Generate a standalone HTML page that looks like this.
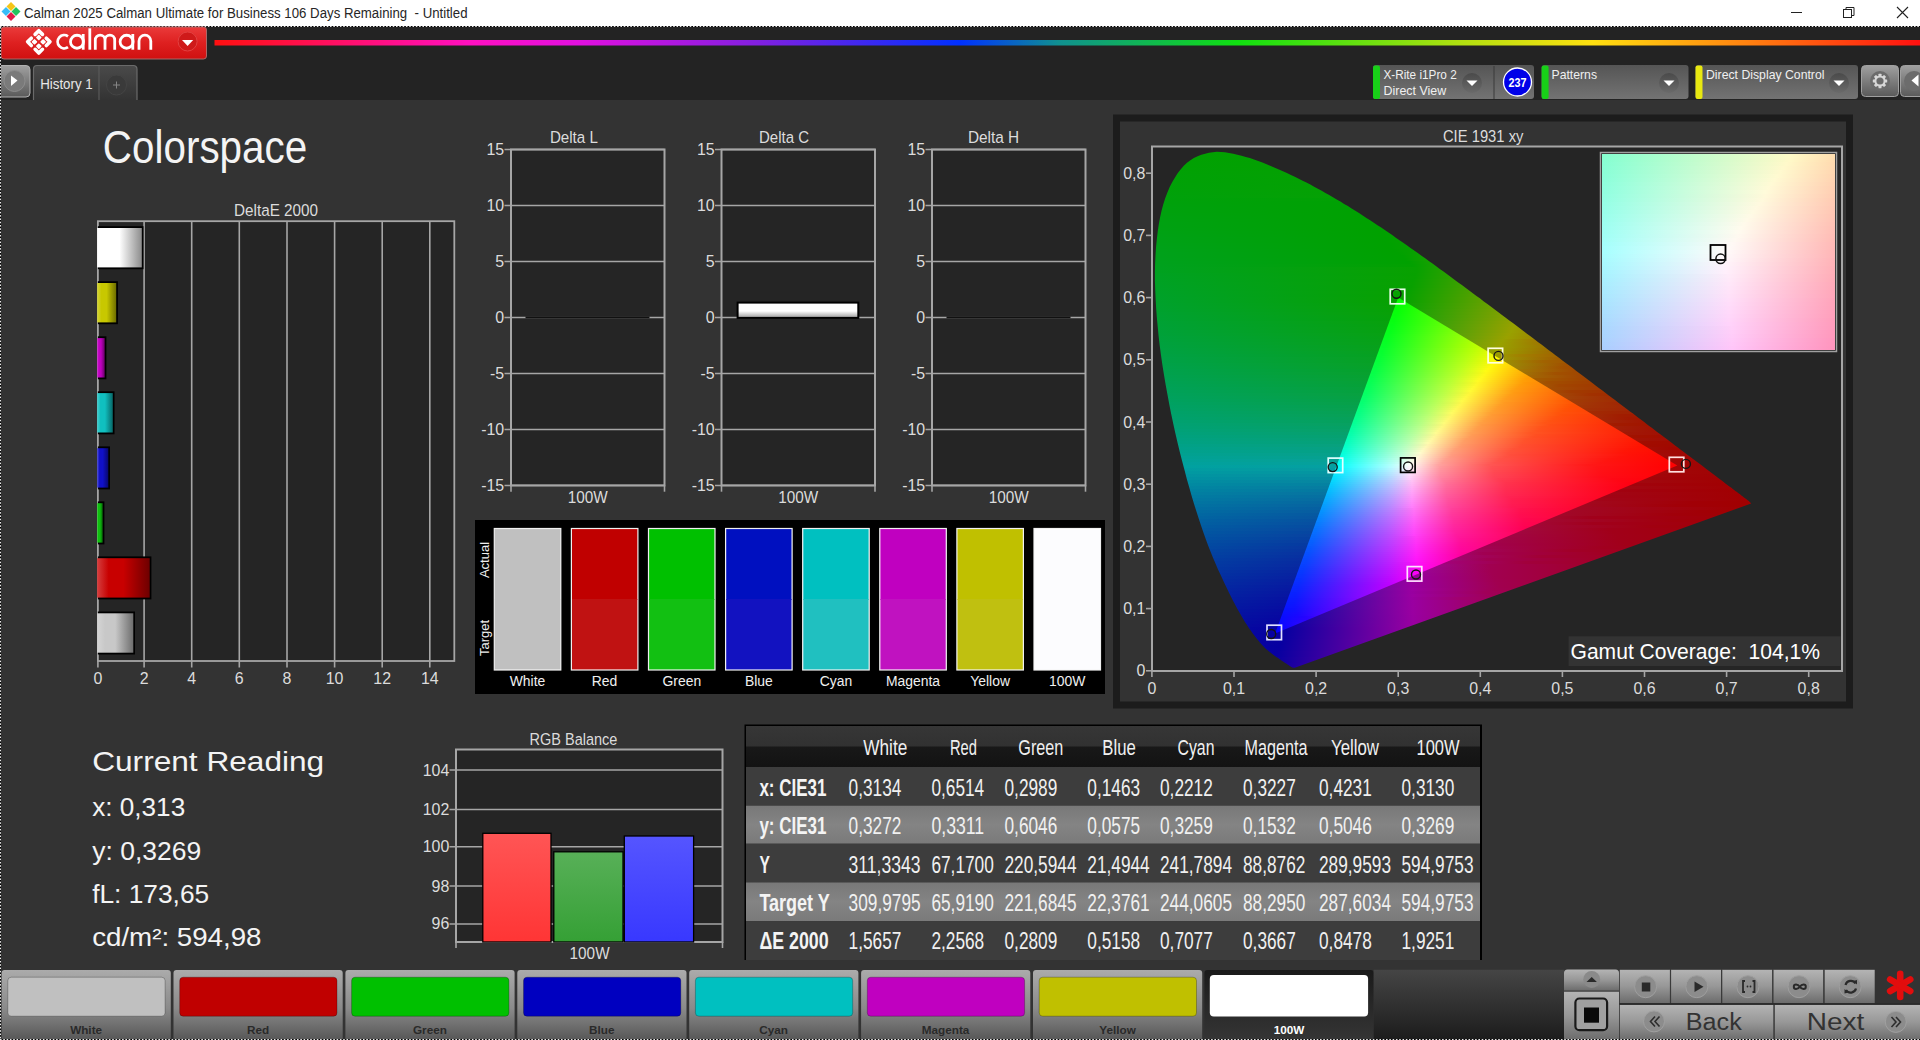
<!DOCTYPE html><html><head><meta charset="utf-8"><style>
html,body{margin:0;padding:0;background:#333;overflow:hidden}
svg{display:block;font-family:"Liberation Sans", sans-serif}
</style></head><body><svg width="1920" height="1040" viewBox="0 0 1920 1040"><defs><linearGradient id="redbtn" x1="0" y1="0" x2="0" y2="1"><stop offset="0" stop-color="#ea3a3a"/><stop offset="0.5" stop-color="#de2020"/><stop offset="1" stop-color="#d01010"/></linearGradient><linearGradient id="rainbow" x1="0" y1="0" x2="1" y2="0"><stop offset="0" stop-color="#ff1010"/><stop offset="0.149" stop-color="#ff10c0"/><stop offset="0.215" stop-color="#e010e0"/><stop offset="0.32" stop-color="#8020e0"/><stop offset="0.437" stop-color="#0030ff"/><stop offset="0.495" stop-color="#109090"/><stop offset="0.6" stop-color="#10e010"/><stop offset="0.73" stop-color="#b0e010"/><stop offset="0.808" stop-color="#ffe010"/><stop offset="0.9" stop-color="#ff8010"/><stop offset="1" stop-color="#ff1010"/></linearGradient><linearGradient id="gbtn" x1="0" y1="0" x2="0" y2="1"><stop offset="0" stop-color="#a0a0a0"/><stop offset="1" stop-color="#5a5a5a"/></linearGradient><linearGradient id="tab" x1="0" y1="0" x2="0" y2="1"><stop offset="0" stop-color="#4a4a4a"/><stop offset="1" stop-color="#333"/></linearGradient><linearGradient id="ctl" x1="0" y1="0" x2="0" y2="1"><stop offset="0" stop-color="#555"/><stop offset="1" stop-color="#737373"/></linearGradient><linearGradient id="dd" x1="0" y1="0" x2="0" y2="1"><stop offset="0" stop-color="#4a4a4a"/><stop offset="1" stop-color="#6a6a6a"/></linearGradient><linearGradient id="de0" x1="0" y1="0" x2="1" y2="0"><stop offset="0" stop-color="#ffffff"/><stop offset="0.22" stop-color="#ffffff"/><stop offset="0.5" stop-color="#ffffff"/><stop offset="1" stop-color="#8c8c8c"/></linearGradient><linearGradient id="de1" x1="0" y1="0" x2="1" y2="0"><stop offset="0" stop-color="#d5d53f"/><stop offset="0.22" stop-color="#c8c800"/><stop offset="0.5" stop-color="#c8c800"/><stop offset="1" stop-color="#6e6e00"/></linearGradient><linearGradient id="de2" x1="0" y1="0" x2="1" y2="0"><stop offset="0" stop-color="#cf3fcf"/><stop offset="0.22" stop-color="#c000c0"/><stop offset="0.5" stop-color="#c000c0"/><stop offset="1" stop-color="#690069"/></linearGradient><linearGradient id="de3" x1="0" y1="0" x2="1" y2="0"><stop offset="0" stop-color="#4bcfcf"/><stop offset="0.22" stop-color="#10c0c0"/><stop offset="0.5" stop-color="#10c0c0"/><stop offset="1" stop-color="#086969"/></linearGradient><linearGradient id="de4" x1="0" y1="0" x2="1" y2="0"><stop offset="0" stop-color="#4b4bd5"/><stop offset="0.22" stop-color="#1010c8"/><stop offset="0.5" stop-color="#1010c8"/><stop offset="1" stop-color="#08086e"/></linearGradient><linearGradient id="de5" x1="0" y1="0" x2="1" y2="0"><stop offset="0" stop-color="#4bcf4b"/><stop offset="0.22" stop-color="#10c010"/><stop offset="0.5" stop-color="#10c010"/><stop offset="1" stop-color="#086908"/></linearGradient><linearGradient id="de6" x1="0" y1="0" x2="1" y2="0"><stop offset="0" stop-color="#d53f3f"/><stop offset="0.22" stop-color="#c80000"/><stop offset="0.5" stop-color="#c80000"/><stop offset="1" stop-color="#6e0000"/></linearGradient><linearGradient id="de7" x1="0" y1="0" x2="1" y2="0"><stop offset="0" stop-color="#d5d5d5"/><stop offset="0.22" stop-color="#c8c8c8"/><stop offset="0.5" stop-color="#c8c8c8"/><stop offset="1" stop-color="#6e6e6e"/></linearGradient><linearGradient id="dcbar" x1="0" y1="0" x2="0" y2="1"><stop offset="0" stop-color="#fff"/><stop offset="0.55" stop-color="#fff"/><stop offset="1" stop-color="#999"/></linearGradient><linearGradient id="o0" gradientUnits="userSpaceOnUse" x1="1153" x2="1753" y1="0" y2="0"><stop offset="0.000" stop-color="#00a100"/><stop offset="0.520" stop-color="#08a100"/><stop offset="0.833" stop-color="#9aa100"/><stop offset="1.000" stop-color="#a16200"/></linearGradient><linearGradient id="o1" gradientUnits="userSpaceOnUse" x1="1153" x2="1753" y1="0" y2="0"><stop offset="0.000" stop-color="#00a101"/><stop offset="0.517" stop-color="#08a100"/><stop offset="0.830" stop-color="#9aa100"/><stop offset="1.000" stop-color="#a16000"/></linearGradient><linearGradient id="o2" gradientUnits="userSpaceOnUse" x1="1153" x2="1753" y1="0" y2="0"><stop offset="0.000" stop-color="#00a102"/><stop offset="0.513" stop-color="#07a100"/><stop offset="0.823" stop-color="#99a100"/><stop offset="1.000" stop-color="#a15f00"/></linearGradient><linearGradient id="o3" gradientUnits="userSpaceOnUse" x1="1153" x2="1753" y1="0" y2="0"><stop offset="0.000" stop-color="#00a102"/><stop offset="0.513" stop-color="#08a100"/><stop offset="0.820" stop-color="#99a100"/><stop offset="1.000" stop-color="#a15d00"/></linearGradient><linearGradient id="o4" gradientUnits="userSpaceOnUse" x1="1153" x2="1753" y1="0" y2="0"><stop offset="0.000" stop-color="#00a103"/><stop offset="0.510" stop-color="#07a100"/><stop offset="0.817" stop-color="#99a100"/><stop offset="1.000" stop-color="#a15c00"/></linearGradient><linearGradient id="o5" gradientUnits="userSpaceOnUse" x1="1153" x2="1753" y1="0" y2="0"><stop offset="0.000" stop-color="#00a103"/><stop offset="0.510" stop-color="#08a100"/><stop offset="0.813" stop-color="#9aa100"/><stop offset="1.000" stop-color="#a15b00"/></linearGradient><linearGradient id="o6" gradientUnits="userSpaceOnUse" x1="1153" x2="1753" y1="0" y2="0"><stop offset="0.000" stop-color="#00a104"/><stop offset="0.507" stop-color="#08a100"/><stop offset="0.810" stop-color="#9aa100"/><stop offset="1.000" stop-color="#a15900"/></linearGradient><linearGradient id="o7" gradientUnits="userSpaceOnUse" x1="1153" x2="1753" y1="0" y2="0"><stop offset="0.000" stop-color="#00a105"/><stop offset="0.507" stop-color="#08a100"/><stop offset="0.807" stop-color="#9aa100"/><stop offset="1.000" stop-color="#a15800"/></linearGradient><linearGradient id="o8" gradientUnits="userSpaceOnUse" x1="1153" x2="1753" y1="0" y2="0"><stop offset="0.000" stop-color="#00a106"/><stop offset="0.503" stop-color="#08a100"/><stop offset="0.800" stop-color="#99a100"/><stop offset="1.000" stop-color="#a15700"/></linearGradient><linearGradient id="o9" gradientUnits="userSpaceOnUse" x1="1153" x2="1753" y1="0" y2="0"><stop offset="0.000" stop-color="#00a106"/><stop offset="0.500" stop-color="#07a100"/><stop offset="0.797" stop-color="#99a100"/><stop offset="1.000" stop-color="#a15500"/></linearGradient><linearGradient id="o10" gradientUnits="userSpaceOnUse" x1="1153" x2="1753" y1="0" y2="0"><stop offset="0.000" stop-color="#00a107"/><stop offset="0.500" stop-color="#08a100"/><stop offset="0.793" stop-color="#99a100"/><stop offset="1.000" stop-color="#a15400"/></linearGradient><linearGradient id="o11" gradientUnits="userSpaceOnUse" x1="1153" x2="1753" y1="0" y2="0"><stop offset="0.000" stop-color="#00a108"/><stop offset="0.497" stop-color="#07a100"/><stop offset="0.790" stop-color="#9aa100"/><stop offset="1.000" stop-color="#a15300"/></linearGradient><linearGradient id="o12" gradientUnits="userSpaceOnUse" x1="1153" x2="1753" y1="0" y2="0"><stop offset="0.000" stop-color="#00a108"/><stop offset="0.497" stop-color="#08a100"/><stop offset="0.787" stop-color="#9aa100"/><stop offset="1.000" stop-color="#a15200"/></linearGradient><linearGradient id="o13" gradientUnits="userSpaceOnUse" x1="1153" x2="1753" y1="0" y2="0"><stop offset="0.000" stop-color="#00a109"/><stop offset="0.493" stop-color="#08a100"/><stop offset="0.780" stop-color="#98a100"/><stop offset="1.000" stop-color="#a15000"/></linearGradient><linearGradient id="o14" gradientUnits="userSpaceOnUse" x1="1153" x2="1753" y1="0" y2="0"><stop offset="0.000" stop-color="#00a10a"/><stop offset="0.490" stop-color="#07a100"/><stop offset="0.777" stop-color="#99a100"/><stop offset="1.000" stop-color="#a14f00"/></linearGradient><linearGradient id="o15" gradientUnits="userSpaceOnUse" x1="1153" x2="1753" y1="0" y2="0"><stop offset="0.000" stop-color="#00a10b"/><stop offset="0.490" stop-color="#08a100"/><stop offset="0.773" stop-color="#99a100"/><stop offset="0.993" stop-color="#a14f00"/><stop offset="1.000" stop-color="#a14e00"/></linearGradient><linearGradient id="o16" gradientUnits="userSpaceOnUse" x1="1153" x2="1753" y1="0" y2="0"><stop offset="0.000" stop-color="#00a10b"/><stop offset="0.473" stop-color="#02a100"/><stop offset="0.760" stop-color="#93a100"/><stop offset="0.813" stop-color="#a18d00"/><stop offset="1.000" stop-color="#a14d00"/></linearGradient><linearGradient id="o17" gradientUnits="userSpaceOnUse" x1="1153" x2="1753" y1="0" y2="0"><stop offset="0.000" stop-color="#00a10c"/><stop offset="0.437" stop-color="#00a100"/><stop offset="0.517" stop-color="#15a100"/><stop offset="0.790" stop-color="#a19800"/><stop offset="0.973" stop-color="#a15200"/><stop offset="1.000" stop-color="#a14b00"/></linearGradient><linearGradient id="o18" gradientUnits="userSpaceOnUse" x1="1153" x2="1753" y1="0" y2="0"><stop offset="0.000" stop-color="#00a10d"/><stop offset="0.410" stop-color="#00a100"/><stop offset="0.493" stop-color="#0ca100"/><stop offset="0.770" stop-color="#9fa100"/><stop offset="0.953" stop-color="#a15500"/><stop offset="1.000" stop-color="#a14a00"/></linearGradient><linearGradient id="o19" gradientUnits="userSpaceOnUse" x1="1153" x2="1753" y1="0" y2="0"><stop offset="0.000" stop-color="#00a10e"/><stop offset="0.397" stop-color="#00a100"/><stop offset="0.487" stop-color="#0aa100"/><stop offset="0.763" stop-color="#9da100"/><stop offset="0.953" stop-color="#a15400"/><stop offset="1.000" stop-color="#a14900"/></linearGradient><linearGradient id="o20" gradientUnits="userSpaceOnUse" x1="1153" x2="1753" y1="0" y2="0"><stop offset="0.000" stop-color="#00a10e"/><stop offset="0.383" stop-color="#00a100"/><stop offset="0.487" stop-color="#0ba100"/><stop offset="0.760" stop-color="#9da100"/><stop offset="0.947" stop-color="#a15400"/><stop offset="1.000" stop-color="#a14800"/></linearGradient><linearGradient id="o21" gradientUnits="userSpaceOnUse" x1="1153" x2="1753" y1="0" y2="0"><stop offset="0.000" stop-color="#00a10f"/><stop offset="0.380" stop-color="#00a100"/><stop offset="0.483" stop-color="#0aa100"/><stop offset="0.753" stop-color="#9ca100"/><stop offset="0.950" stop-color="#a15200"/><stop offset="1.000" stop-color="#a14600"/></linearGradient><linearGradient id="o22" gradientUnits="userSpaceOnUse" x1="1153" x2="1753" y1="0" y2="0"><stop offset="0.000" stop-color="#00a110"/><stop offset="0.373" stop-color="#00a100"/><stop offset="0.480" stop-color="#0aa100"/><stop offset="0.750" stop-color="#9ca100"/><stop offset="0.943" stop-color="#a15200"/><stop offset="1.000" stop-color="#a14500"/></linearGradient><linearGradient id="o23" gradientUnits="userSpaceOnUse" x1="1153" x2="1753" y1="0" y2="0"><stop offset="0.000" stop-color="#00a111"/><stop offset="0.373" stop-color="#00a100"/><stop offset="0.480" stop-color="#0aa100"/><stop offset="0.747" stop-color="#9ca100"/><stop offset="0.937" stop-color="#a15300"/><stop offset="1.000" stop-color="#a14400"/></linearGradient><linearGradient id="o24" gradientUnits="userSpaceOnUse" x1="1153" x2="1753" y1="0" y2="0"><stop offset="0.000" stop-color="#00a112"/><stop offset="0.370" stop-color="#00a100"/><stop offset="0.477" stop-color="#0aa100"/><stop offset="0.743" stop-color="#9da100"/><stop offset="0.930" stop-color="#a15300"/><stop offset="1.000" stop-color="#a14300"/></linearGradient><linearGradient id="o25" gradientUnits="userSpaceOnUse" x1="1153" x2="1753" y1="0" y2="0"><stop offset="0.000" stop-color="#00a112"/><stop offset="0.377" stop-color="#00a100"/><stop offset="0.477" stop-color="#0ba100"/><stop offset="0.740" stop-color="#9da100"/><stop offset="0.923" stop-color="#a15300"/><stop offset="1.000" stop-color="#a14200"/></linearGradient><linearGradient id="o26" gradientUnits="userSpaceOnUse" x1="1153" x2="1753" y1="0" y2="0"><stop offset="0.000" stop-color="#00a113"/><stop offset="0.373" stop-color="#00a100"/><stop offset="0.473" stop-color="#0aa100"/><stop offset="0.733" stop-color="#9ba100"/><stop offset="0.923" stop-color="#a15200"/><stop offset="1.000" stop-color="#a14100"/></linearGradient><linearGradient id="o27" gradientUnits="userSpaceOnUse" x1="1153" x2="1753" y1="0" y2="0"><stop offset="0.000" stop-color="#00a114"/><stop offset="0.380" stop-color="#00a100"/><stop offset="0.473" stop-color="#0ba100"/><stop offset="0.733" stop-color="#9ea100"/><stop offset="0.907" stop-color="#a15500"/><stop offset="1.000" stop-color="#a13f00"/></linearGradient><linearGradient id="o28" gradientUnits="userSpaceOnUse" x1="1153" x2="1753" y1="0" y2="0"><stop offset="0.000" stop-color="#00a115"/><stop offset="0.380" stop-color="#00a100"/><stop offset="0.470" stop-color="#0ba100"/><stop offset="0.727" stop-color="#9ca100"/><stop offset="0.910" stop-color="#a15300"/><stop offset="1.000" stop-color="#a13e00"/></linearGradient><linearGradient id="o29" gradientUnits="userSpaceOnUse" x1="1153" x2="1753" y1="0" y2="0"><stop offset="0.000" stop-color="#00a116"/><stop offset="0.387" stop-color="#00a100"/><stop offset="0.470" stop-color="#0ba100"/><stop offset="0.723" stop-color="#9da100"/><stop offset="0.903" stop-color="#a15300"/><stop offset="1.000" stop-color="#a13d00"/></linearGradient><linearGradient id="o30" gradientUnits="userSpaceOnUse" x1="1153" x2="1753" y1="0" y2="0"><stop offset="0.000" stop-color="#00a117"/><stop offset="0.390" stop-color="#00a100"/><stop offset="0.467" stop-color="#0ba100"/><stop offset="0.720" stop-color="#9da100"/><stop offset="0.897" stop-color="#a15300"/><stop offset="1.000" stop-color="#a13c00"/></linearGradient><linearGradient id="o31" gradientUnits="userSpaceOnUse" x1="1153" x2="1753" y1="0" y2="0"><stop offset="0.000" stop-color="#00a118"/><stop offset="0.397" stop-color="#00a100"/><stop offset="0.470" stop-color="#0da100"/><stop offset="0.730" stop-color="#a19a00"/><stop offset="0.893" stop-color="#a15300"/><stop offset="1.000" stop-color="#a13b00"/></linearGradient><linearGradient id="o32" gradientUnits="userSpaceOnUse" x1="1153" x2="1753" y1="0" y2="0"><stop offset="0.000" stop-color="#00a119"/><stop offset="0.397" stop-color="#00a100"/><stop offset="0.467" stop-color="#0da100"/><stop offset="0.713" stop-color="#9ea100"/><stop offset="0.880" stop-color="#a15500"/><stop offset="1.000" stop-color="#a13a00"/></linearGradient><linearGradient id="o33" gradientUnits="userSpaceOnUse" x1="1153" x2="1753" y1="0" y2="0"><stop offset="0.000" stop-color="#00a11a"/><stop offset="0.403" stop-color="#00a100"/><stop offset="0.470" stop-color="#0fa100"/><stop offset="0.723" stop-color="#a19900"/><stop offset="0.883" stop-color="#a15300"/><stop offset="1.000" stop-color="#a13900"/></linearGradient><linearGradient id="o34" gradientUnits="userSpaceOnUse" x1="1153" x2="1753" y1="0" y2="0"><stop offset="0.000" stop-color="#00a11b"/><stop offset="0.410" stop-color="#00a100"/><stop offset="0.483" stop-color="#17a100"/><stop offset="0.720" stop-color="#a19900"/><stop offset="0.880" stop-color="#a15200"/><stop offset="1.000" stop-color="#a13700"/></linearGradient><linearGradient id="o35" gradientUnits="userSpaceOnUse" x1="1153" x2="1753" y1="0" y2="0"><stop offset="0.000" stop-color="#00a11b"/><stop offset="0.417" stop-color="#00a100"/><stop offset="0.573" stop-color="#49a100"/><stop offset="0.717" stop-color="#a19800"/><stop offset="0.877" stop-color="#a15200"/><stop offset="1.000" stop-color="#a13600"/></linearGradient><linearGradient id="o36" gradientUnits="userSpaceOnUse" x1="1153" x2="1753" y1="0" y2="0"><stop offset="0.000" stop-color="#00a11c"/><stop offset="0.420" stop-color="#00a100"/><stop offset="0.623" stop-color="#6aa100"/><stop offset="0.713" stop-color="#a19800"/><stop offset="0.873" stop-color="#a15100"/><stop offset="1.000" stop-color="#a13500"/></linearGradient><linearGradient id="o37" gradientUnits="userSpaceOnUse" x1="1153" x2="1753" y1="0" y2="0"><stop offset="0.000" stop-color="#00a11d"/><stop offset="0.427" stop-color="#00a100"/><stop offset="0.663" stop-color="#88a100"/><stop offset="0.710" stop-color="#a19700"/><stop offset="0.870" stop-color="#a15000"/><stop offset="1.000" stop-color="#a13400"/></linearGradient><linearGradient id="o38" gradientUnits="userSpaceOnUse" x1="1153" x2="1753" y1="0" y2="0"><stop offset="0.000" stop-color="#00a11e"/><stop offset="0.433" stop-color="#02a100"/><stop offset="0.677" stop-color="#94a100"/><stop offset="0.723" stop-color="#a18c00"/><stop offset="0.897" stop-color="#a14800"/><stop offset="1.000" stop-color="#a13300"/></linearGradient><linearGradient id="o39" gradientUnits="userSpaceOnUse" x1="1153" x2="1753" y1="0" y2="0"><stop offset="0.000" stop-color="#00a11f"/><stop offset="0.440" stop-color="#07a100"/><stop offset="0.677" stop-color="#97a100"/><stop offset="0.757" stop-color="#a17700"/><stop offset="0.970" stop-color="#a13700"/><stop offset="1.000" stop-color="#a13200"/></linearGradient><linearGradient id="o40" gradientUnits="userSpaceOnUse" x1="1153" x2="1753" y1="0" y2="0"><stop offset="0.000" stop-color="#00a120"/><stop offset="0.440" stop-color="#08a100"/><stop offset="0.677" stop-color="#9aa100"/><stop offset="0.853" stop-color="#a15100"/><stop offset="1.000" stop-color="#a13100"/></linearGradient><linearGradient id="o41" gradientUnits="userSpaceOnUse" x1="1153" x2="1753" y1="0" y2="0"><stop offset="0.000" stop-color="#00a122"/><stop offset="0.437" stop-color="#07a100"/><stop offset="0.670" stop-color="#98a100"/><stop offset="0.840" stop-color="#a15300"/><stop offset="1.000" stop-color="#a13000"/></linearGradient><linearGradient id="o42" gradientUnits="userSpaceOnUse" x1="1153" x2="1753" y1="0" y2="0"><stop offset="0.000" stop-color="#00a123"/><stop offset="0.437" stop-color="#08a100"/><stop offset="0.667" stop-color="#98a100"/><stop offset="0.847" stop-color="#a14f00"/><stop offset="1.000" stop-color="#a12f00"/></linearGradient><linearGradient id="o43" gradientUnits="userSpaceOnUse" x1="1153" x2="1753" y1="0" y2="0"><stop offset="0.000" stop-color="#00a124"/><stop offset="0.433" stop-color="#07a100"/><stop offset="0.663" stop-color="#99a100"/><stop offset="0.840" stop-color="#a15000"/><stop offset="1.000" stop-color="#a12e00"/></linearGradient><linearGradient id="o44" gradientUnits="userSpaceOnUse" x1="1153" x2="1753" y1="0" y2="0"><stop offset="0.000" stop-color="#00a125"/><stop offset="0.433" stop-color="#08a100"/><stop offset="0.660" stop-color="#99a100"/><stop offset="0.833" stop-color="#a15000"/><stop offset="1.000" stop-color="#a12d00"/></linearGradient><linearGradient id="o45" gradientUnits="userSpaceOnUse" x1="1153" x2="1753" y1="0" y2="0"><stop offset="0.000" stop-color="#00a126"/><stop offset="0.430" stop-color="#07a100"/><stop offset="0.657" stop-color="#9aa100"/><stop offset="0.827" stop-color="#a15000"/><stop offset="1.000" stop-color="#a12c00"/></linearGradient><linearGradient id="o46" gradientUnits="userSpaceOnUse" x1="1153" x2="1753" y1="0" y2="0"><stop offset="0.000" stop-color="#00a127"/><stop offset="0.427" stop-color="#07a100"/><stop offset="0.650" stop-color="#98a100"/><stop offset="0.760" stop-color="#a16600"/><stop offset="1.000" stop-color="#a12b00"/></linearGradient><linearGradient id="o47" gradientUnits="userSpaceOnUse" x1="1153" x2="1753" y1="0" y2="0"><stop offset="0.000" stop-color="#00a128"/><stop offset="0.427" stop-color="#08a100"/><stop offset="0.647" stop-color="#98a100"/><stop offset="0.823" stop-color="#a14e00"/><stop offset="1.000" stop-color="#a12a00"/></linearGradient><linearGradient id="o48" gradientUnits="userSpaceOnUse" x1="1153" x2="1753" y1="0" y2="0"><stop offset="0.000" stop-color="#00a129"/><stop offset="0.423" stop-color="#07a100"/><stop offset="0.643" stop-color="#98a100"/><stop offset="0.817" stop-color="#a14f00"/><stop offset="1.000" stop-color="#a12900"/></linearGradient><linearGradient id="o49" gradientUnits="userSpaceOnUse" x1="1153" x2="1753" y1="0" y2="0"><stop offset="0.000" stop-color="#00a12a"/><stop offset="0.423" stop-color="#08a100"/><stop offset="0.640" stop-color="#99a100"/><stop offset="0.807" stop-color="#a15000"/><stop offset="1.000" stop-color="#a12800"/></linearGradient><linearGradient id="o50" gradientUnits="userSpaceOnUse" x1="1153" x2="1753" y1="0" y2="0"><stop offset="0.000" stop-color="#00a12c"/><stop offset="0.420" stop-color="#07a100"/><stop offset="0.637" stop-color="#99a100"/><stop offset="0.800" stop-color="#a15000"/><stop offset="1.000" stop-color="#a12700"/></linearGradient><linearGradient id="o51" gradientUnits="userSpaceOnUse" x1="1153" x2="1753" y1="0" y2="0"><stop offset="0.000" stop-color="#00a12d"/><stop offset="0.417" stop-color="#07a102"/><stop offset="0.630" stop-color="#97a100"/><stop offset="0.713" stop-color="#a17100"/><stop offset="0.920" stop-color="#a13200"/><stop offset="1.000" stop-color="#a12600"/></linearGradient><linearGradient id="o52" gradientUnits="userSpaceOnUse" x1="1153" x2="1753" y1="0" y2="0"><stop offset="0.000" stop-color="#00a12e"/><stop offset="0.417" stop-color="#08a103"/><stop offset="0.630" stop-color="#9aa100"/><stop offset="0.787" stop-color="#a15100"/><stop offset="1.000" stop-color="#a12500"/></linearGradient><linearGradient id="o53" gradientUnits="userSpaceOnUse" x1="1153" x2="1753" y1="0" y2="0"><stop offset="0.000" stop-color="#00a12f"/><stop offset="0.413" stop-color="#07a105"/><stop offset="0.623" stop-color="#98a100"/><stop offset="0.773" stop-color="#a15400"/><stop offset="1.000" stop-color="#a12400"/></linearGradient><linearGradient id="o54" gradientUnits="userSpaceOnUse" x1="1153" x2="1753" y1="0" y2="0"><stop offset="0.000" stop-color="#00a131"/><stop offset="0.413" stop-color="#08a106"/><stop offset="0.620" stop-color="#99a100"/><stop offset="0.783" stop-color="#a14f00"/><stop offset="1.000" stop-color="#a12300"/></linearGradient><linearGradient id="o55" gradientUnits="userSpaceOnUse" x1="1153" x2="1753" y1="0" y2="0"><stop offset="0.000" stop-color="#00a132"/><stop offset="0.410" stop-color="#07a108"/><stop offset="0.617" stop-color="#99a100"/><stop offset="0.777" stop-color="#a14f00"/><stop offset="1.000" stop-color="#a12200"/></linearGradient><linearGradient id="o56" gradientUnits="userSpaceOnUse" x1="1153" x2="1753" y1="0" y2="0"><stop offset="0.000" stop-color="#00a133"/><stop offset="0.407" stop-color="#06a109"/><stop offset="0.610" stop-color="#97a100"/><stop offset="0.673" stop-color="#a17a00"/><stop offset="0.850" stop-color="#a13a00"/><stop offset="1.000" stop-color="#a12100"/></linearGradient><linearGradient id="o57" gradientUnits="userSpaceOnUse" x1="1153" x2="1753" y1="0" y2="0"><stop offset="0.000" stop-color="#00a135"/><stop offset="0.407" stop-color="#08a10b"/><stop offset="0.610" stop-color="#9aa100"/><stop offset="0.760" stop-color="#a15100"/><stop offset="1.000" stop-color="#a12000"/></linearGradient><linearGradient id="o58" gradientUnits="userSpaceOnUse" x1="1153" x2="1753" y1="0" y2="0"><stop offset="0.000" stop-color="#00a136"/><stop offset="0.403" stop-color="#07a10d"/><stop offset="0.603" stop-color="#98a100"/><stop offset="0.690" stop-color="#a16c00"/><stop offset="0.893" stop-color="#a12f00"/><stop offset="1.000" stop-color="#a11f00"/></linearGradient><linearGradient id="o59" gradientUnits="userSpaceOnUse" x1="1153" x2="1753" y1="0" y2="0"><stop offset="0.000" stop-color="#00a137"/><stop offset="0.403" stop-color="#08a10e"/><stop offset="0.600" stop-color="#98a100"/><stop offset="0.757" stop-color="#a14f00"/><stop offset="1.000" stop-color="#a11e00"/></linearGradient><linearGradient id="o60" gradientUnits="userSpaceOnUse" x1="1153" x2="1753" y1="0" y2="0"><stop offset="0.000" stop-color="#00a139"/><stop offset="0.400" stop-color="#07a110"/><stop offset="0.597" stop-color="#99a100"/><stop offset="0.750" stop-color="#a14f00"/><stop offset="1.000" stop-color="#a11d00"/></linearGradient><linearGradient id="o61" gradientUnits="userSpaceOnUse" x1="1153" x2="1753" y1="0" y2="0"><stop offset="0.000" stop-color="#00a13a"/><stop offset="0.400" stop-color="#08a112"/><stop offset="0.593" stop-color="#99a100"/><stop offset="0.743" stop-color="#a14f00"/><stop offset="1.000" stop-color="#a11c00"/></linearGradient><linearGradient id="o62" gradientUnits="userSpaceOnUse" x1="1153" x2="1753" y1="0" y2="0"><stop offset="0.000" stop-color="#00a13c"/><stop offset="0.397" stop-color="#07a114"/><stop offset="0.590" stop-color="#9aa100"/><stop offset="0.737" stop-color="#a15000"/><stop offset="1.000" stop-color="#a11b00"/></linearGradient><linearGradient id="o63" gradientUnits="userSpaceOnUse" x1="1153" x2="1753" y1="0" y2="0"><stop offset="0.000" stop-color="#00a13d"/><stop offset="0.393" stop-color="#07a116"/><stop offset="0.583" stop-color="#97a100"/><stop offset="0.643" stop-color="#a17900"/><stop offset="0.810" stop-color="#a13900"/><stop offset="1.000" stop-color="#a11a00"/></linearGradient><linearGradient id="o64" gradientUnits="userSpaceOnUse" x1="1153" x2="1753" y1="0" y2="0"><stop offset="0.000" stop-color="#00a13f"/><stop offset="0.393" stop-color="#08a117"/><stop offset="0.580" stop-color="#98a100"/><stop offset="0.670" stop-color="#a16800"/><stop offset="0.870" stop-color="#a12c00"/><stop offset="1.000" stop-color="#a11900"/></linearGradient><linearGradient id="o65" gradientUnits="userSpaceOnUse" x1="1153" x2="1753" y1="0" y2="0"><stop offset="0.000" stop-color="#00a140"/><stop offset="0.390" stop-color="#07a11a"/><stop offset="0.577" stop-color="#98a100"/><stop offset="0.723" stop-color="#a14f00"/><stop offset="1.000" stop-color="#a11800"/></linearGradient><linearGradient id="o66" gradientUnits="userSpaceOnUse" x1="1153" x2="1753" y1="0" y2="0"><stop offset="0.000" stop-color="#00a142"/><stop offset="0.390" stop-color="#08a11b"/><stop offset="0.573" stop-color="#99a100"/><stop offset="0.717" stop-color="#a14f00"/><stop offset="0.987" stop-color="#a11900"/><stop offset="1.000" stop-color="#a11800"/></linearGradient><linearGradient id="o67" gradientUnits="userSpaceOnUse" x1="1153" x2="1753" y1="0" y2="0"><stop offset="0.000" stop-color="#00a143"/><stop offset="0.387" stop-color="#07a11e"/><stop offset="0.570" stop-color="#99a100"/><stop offset="0.710" stop-color="#a15000"/><stop offset="0.977" stop-color="#a11900"/><stop offset="1.000" stop-color="#a11700"/></linearGradient><linearGradient id="o68" gradientUnits="userSpaceOnUse" x1="1153" x2="1753" y1="0" y2="0"><stop offset="0.000" stop-color="#00a145"/><stop offset="0.383" stop-color="#06a120"/><stop offset="0.563" stop-color="#97a101"/><stop offset="0.610" stop-color="#a18100"/><stop offset="0.757" stop-color="#a13f00"/><stop offset="1.000" stop-color="#a11600"/></linearGradient><linearGradient id="o69" gradientUnits="userSpaceOnUse" x1="1153" x2="1753" y1="0" y2="0"><stop offset="0.000" stop-color="#00a147"/><stop offset="0.383" stop-color="#08a122"/><stop offset="0.563" stop-color="#9ba103"/><stop offset="0.697" stop-color="#a15100"/><stop offset="0.953" stop-color="#a11a00"/><stop offset="1.000" stop-color="#a11500"/></linearGradient><linearGradient id="o70" gradientUnits="userSpaceOnUse" x1="1153" x2="1753" y1="0" y2="0"><stop offset="0.000" stop-color="#00a148"/><stop offset="0.380" stop-color="#07a124"/><stop offset="0.557" stop-color="#98a106"/><stop offset="0.650" stop-color="#a16300"/><stop offset="0.850" stop-color="#a12800"/><stop offset="1.000" stop-color="#a11400"/></linearGradient><linearGradient id="o71" gradientUnits="userSpaceOnUse" x1="1153" x2="1753" y1="0" y2="0"><stop offset="0.000" stop-color="#00a14a"/><stop offset="0.380" stop-color="#08a126"/><stop offset="0.553" stop-color="#98a109"/><stop offset="0.690" stop-color="#a14f00"/><stop offset="0.947" stop-color="#a11900"/><stop offset="1.000" stop-color="#a11300"/></linearGradient><linearGradient id="o72" gradientUnits="userSpaceOnUse" x1="1153" x2="1753" y1="0" y2="0"><stop offset="0.000" stop-color="#00a14c"/><stop offset="0.377" stop-color="#07a128"/><stop offset="0.550" stop-color="#99a10c"/><stop offset="0.683" stop-color="#a15000"/><stop offset="0.937" stop-color="#a11900"/><stop offset="1.000" stop-color="#a11200"/></linearGradient><linearGradient id="o73" gradientUnits="userSpaceOnUse" x1="1153" x2="1753" y1="0" y2="0"><stop offset="0.000" stop-color="#00a14e"/><stop offset="0.373" stop-color="#06a12b"/><stop offset="0.543" stop-color="#96a10f"/><stop offset="0.583" stop-color="#a18505"/><stop offset="0.717" stop-color="#a14200"/><stop offset="1.000" stop-color="#a11100"/></linearGradient><linearGradient id="o74" gradientUnits="userSpaceOnUse" x1="1153" x2="1753" y1="0" y2="0"><stop offset="0.000" stop-color="#00a14f"/><stop offset="0.373" stop-color="#08a12d"/><stop offset="0.543" stop-color="#9aa111"/><stop offset="0.670" stop-color="#a15100"/><stop offset="0.913" stop-color="#a11a00"/><stop offset="1.000" stop-color="#a11000"/></linearGradient><linearGradient id="o75" gradientUnits="userSpaceOnUse" x1="1153" x2="1753" y1="0" y2="0"><stop offset="0.000" stop-color="#00a151"/><stop offset="0.370" stop-color="#07a130"/><stop offset="0.537" stop-color="#97a115"/><stop offset="0.600" stop-color="#a17205"/><stop offset="0.757" stop-color="#a13400"/><stop offset="1.000" stop-color="#a11000"/></linearGradient><linearGradient id="o76" gradientUnits="userSpaceOnUse" x1="1153" x2="1753" y1="0" y2="0"><stop offset="0.000" stop-color="#00a153"/><stop offset="0.370" stop-color="#08a132"/><stop offset="0.533" stop-color="#98a118"/><stop offset="0.633" stop-color="#a15c00"/><stop offset="0.837" stop-color="#a12300"/><stop offset="1.000" stop-color="#a10f00"/></linearGradient><linearGradient id="o77" gradientUnits="userSpaceOnUse" x1="1153" x2="1753" y1="0" y2="0"><stop offset="0.000" stop-color="#00a155"/><stop offset="0.367" stop-color="#07a135"/><stop offset="0.530" stop-color="#98a11b"/><stop offset="0.657" stop-color="#a14f00"/><stop offset="0.897" stop-color="#a11900"/><stop offset="1.000" stop-color="#a10e00"/></linearGradient><linearGradient id="o78" gradientUnits="userSpaceOnUse" x1="1153" x2="1753" y1="0" y2="0"><stop offset="0.000" stop-color="#00a157"/><stop offset="0.363" stop-color="#06a137"/><stop offset="0.523" stop-color="#95a11f"/><stop offset="0.557" stop-color="#a18914"/><stop offset="0.677" stop-color="#a14600"/><stop offset="0.950" stop-color="#a11200"/><stop offset="1.000" stop-color="#a10d00"/></linearGradient><linearGradient id="o79" gradientUnits="userSpaceOnUse" x1="1153" x2="1753" y1="0" y2="0"><stop offset="0.000" stop-color="#00a159"/><stop offset="0.363" stop-color="#07a13a"/><stop offset="0.523" stop-color="#9aa121"/><stop offset="0.643" stop-color="#a15103"/><stop offset="0.873" stop-color="#a11a00"/><stop offset="1.000" stop-color="#a10c00"/></linearGradient><linearGradient id="o80" gradientUnits="userSpaceOnUse" x1="1153" x2="1753" y1="0" y2="0"><stop offset="0.000" stop-color="#00a15b"/><stop offset="0.360" stop-color="#06a13d"/><stop offset="0.517" stop-color="#97a125"/><stop offset="0.563" stop-color="#a17c15"/><stop offset="0.697" stop-color="#a13b00"/><stop offset="1.000" stop-color="#a10b00"/></linearGradient><linearGradient id="o81" gradientUnits="userSpaceOnUse" x1="1153" x2="1753" y1="0" y2="0"><stop offset="0.000" stop-color="#00a15d"/><stop offset="0.360" stop-color="#08a13f"/><stop offset="0.513" stop-color="#97a128"/><stop offset="0.577" stop-color="#a16f13"/><stop offset="0.730" stop-color="#a13100"/><stop offset="1.000" stop-color="#a10b00"/></linearGradient><linearGradient id="o82" gradientUnits="userSpaceOnUse" x1="1153" x2="1753" y1="0" y2="0"><stop offset="0.000" stop-color="#00a15f"/><stop offset="0.357" stop-color="#07a142"/><stop offset="0.510" stop-color="#98a12c"/><stop offset="0.613" stop-color="#a1570c"/><stop offset="0.817" stop-color="#a11e00"/><stop offset="1.000" stop-color="#a10a00"/></linearGradient><linearGradient id="o83" gradientUnits="userSpaceOnUse" x1="1153" x2="1753" y1="0" y2="0"><stop offset="0.000" stop-color="#00a161"/><stop offset="0.353" stop-color="#06a145"/><stop offset="0.503" stop-color="#95a130"/><stop offset="0.533" stop-color="#a18b25"/><stop offset="0.643" stop-color="#a14807"/><stop offset="0.893" stop-color="#a11300"/><stop offset="1.000" stop-color="#a10900"/></linearGradient><linearGradient id="o84" gradientUnits="userSpaceOnUse" x1="1153" x2="1753" y1="0" y2="0"><stop offset="0.000" stop-color="#00a164"/><stop offset="0.353" stop-color="#07a148"/><stop offset="0.503" stop-color="#99a133"/><stop offset="0.617" stop-color="#a1500d"/><stop offset="0.830" stop-color="#a11a00"/><stop offset="1.000" stop-color="#a10800"/></linearGradient><linearGradient id="o85" gradientUnits="userSpaceOnUse" x1="1153" x2="1753" y1="0" y2="0"><stop offset="0.000" stop-color="#00a166"/><stop offset="0.350" stop-color="#06a14c"/><stop offset="0.497" stop-color="#96a137"/><stop offset="0.533" stop-color="#a18328"/><stop offset="0.650" stop-color="#a14108"/><stop offset="0.920" stop-color="#a10e00"/><stop offset="1.000" stop-color="#a10700"/></linearGradient><linearGradient id="o86" gradientUnits="userSpaceOnUse" x1="1153" x2="1753" y1="0" y2="0"><stop offset="0.000" stop-color="#00a168"/><stop offset="0.350" stop-color="#08a14e"/><stop offset="0.493" stop-color="#96a13b"/><stop offset="0.540" stop-color="#a17926"/><stop offset="0.667" stop-color="#a13907"/><stop offset="0.970" stop-color="#a10900"/><stop offset="1.000" stop-color="#a10600"/></linearGradient><linearGradient id="o87" gradientUnits="userSpaceOnUse" x1="1153" x2="1753" y1="0" y2="0"><stop offset="0.000" stop-color="#00a16b"/><stop offset="0.347" stop-color="#07a152"/><stop offset="0.490" stop-color="#97a13f"/><stop offset="0.553" stop-color="#a16c23"/><stop offset="0.700" stop-color="#a12e03"/><stop offset="1.000" stop-color="#a10600"/></linearGradient><linearGradient id="o88" gradientUnits="userSpaceOnUse" x1="1153" x2="1753" y1="0" y2="0"><stop offset="0.000" stop-color="#00a16d"/><stop offset="0.347" stop-color="#08a155"/><stop offset="0.487" stop-color="#98a143"/><stop offset="0.587" stop-color="#a1551a"/><stop offset="0.780" stop-color="#a11d00"/><stop offset="1.000" stop-color="#a10500"/></linearGradient><linearGradient id="o89" gradientUnits="userSpaceOnUse" x1="1153" x2="1753" y1="0" y2="0"><stop offset="0.000" stop-color="#00a16f"/><stop offset="0.343" stop-color="#07a159"/><stop offset="0.483" stop-color="#99a148"/><stop offset="0.590" stop-color="#a1501a"/><stop offset="0.793" stop-color="#a11900"/><stop offset="1.000" stop-color="#a10400"/></linearGradient><linearGradient id="o90" gradientUnits="userSpaceOnUse" x1="1153" x2="1753" y1="0" y2="0"><stop offset="0.000" stop-color="#00a172"/><stop offset="0.340" stop-color="#06a15c"/><stop offset="0.477" stop-color="#95a14c"/><stop offset="0.507" stop-color="#a1883d"/><stop offset="0.610" stop-color="#a14516"/><stop offset="0.830" stop-color="#a11300"/><stop offset="1.000" stop-color="#a10300"/></linearGradient><linearGradient id="o91" gradientUnits="userSpaceOnUse" x1="1153" x2="1753" y1="0" y2="0"><stop offset="0.000" stop-color="#00a175"/><stop offset="0.340" stop-color="#08a160"/><stop offset="0.477" stop-color="#9aa150"/><stop offset="0.577" stop-color="#a15220"/><stop offset="0.770" stop-color="#a11b00"/><stop offset="1.000" stop-color="#a10200"/></linearGradient><linearGradient id="o92" gradientUnits="userSpaceOnUse" x1="1153" x2="1753" y1="0" y2="0"><stop offset="0.000" stop-color="#00a177"/><stop offset="0.337" stop-color="#06a164"/><stop offset="0.470" stop-color="#96a155"/><stop offset="0.513" stop-color="#a1793c"/><stop offset="0.630" stop-color="#a13914"/><stop offset="0.860" stop-color="#a10e00"/><stop offset="1.000" stop-color="#a10200"/></linearGradient><linearGradient id="o93" gradientUnits="userSpaceOnUse" x1="1153" x2="1753" y1="0" y2="0"><stop offset="0.000" stop-color="#00a17a"/><stop offset="0.337" stop-color="#08a167"/><stop offset="0.467" stop-color="#97a15a"/><stop offset="0.517" stop-color="#a1723b"/><stop offset="0.640" stop-color="#a13413"/><stop offset="0.877" stop-color="#a10b00"/><stop offset="1.000" stop-color="#a10100"/></linearGradient><linearGradient id="o94" gradientUnits="userSpaceOnUse" x1="1153" x2="1753" y1="0" y2="0"><stop offset="0.000" stop-color="#00a17d"/><stop offset="0.333" stop-color="#07a16c"/><stop offset="0.463" stop-color="#98a15f"/><stop offset="0.547" stop-color="#a1592e"/><stop offset="0.713" stop-color="#a12008"/><stop offset="1.000" stop-color="#a10000"/></linearGradient><linearGradient id="o95" gradientUnits="userSpaceOnUse" x1="1153" x2="1753" y1="0" y2="0"><stop offset="0.000" stop-color="#00a180"/><stop offset="0.330" stop-color="#06a170"/><stop offset="0.457" stop-color="#94a165"/><stop offset="0.483" stop-color="#a18a54"/><stop offset="0.577" stop-color="#a14725"/><stop offset="0.790" stop-color="#a11300"/><stop offset="1.000" stop-color="#a10000"/></linearGradient><linearGradient id="o96" gradientUnits="userSpaceOnUse" x1="1153" x2="1753" y1="0" y2="0"><stop offset="0.000" stop-color="#00a183"/><stop offset="0.330" stop-color="#07a174"/><stop offset="0.457" stop-color="#9aa169"/><stop offset="0.553" stop-color="#a1502e"/><stop offset="0.737" stop-color="#a11907"/><stop offset="1.000" stop-color="#a10000"/></linearGradient><linearGradient id="o97" gradientUnits="userSpaceOnUse" x1="1153" x2="1753" y1="0" y2="0"><stop offset="0.000" stop-color="#00a185"/><stop offset="0.327" stop-color="#06a178"/><stop offset="0.450" stop-color="#96a16f"/><stop offset="0.483" stop-color="#a18056"/><stop offset="0.583" stop-color="#a13f25"/><stop offset="0.817" stop-color="#a10d00"/><stop offset="1.000" stop-color="#a10000"/></linearGradient><linearGradient id="o98" gradientUnits="userSpaceOnUse" x1="1153" x2="1753" y1="0" y2="0"><stop offset="0.000" stop-color="#00a189"/><stop offset="0.327" stop-color="#08a17d"/><stop offset="0.447" stop-color="#96a175"/><stop offset="0.480" stop-color="#a17f5a"/><stop offset="0.580" stop-color="#a13e27"/><stop offset="0.817" stop-color="#a10c00"/><stop offset="1.000" stop-color="#a10000"/></linearGradient><linearGradient id="o99" gradientUnits="userSpaceOnUse" x1="1153" x2="1753" y1="0" y2="0"><stop offset="0.000" stop-color="#00a18c"/><stop offset="0.323" stop-color="#07a182"/><stop offset="0.443" stop-color="#97a17a"/><stop offset="0.487" stop-color="#a17456"/><stop offset="0.597" stop-color="#a13623"/><stop offset="0.867" stop-color="#a10600"/><stop offset="1.000" stop-color="#a10000"/></linearGradient><linearGradient id="o100" gradientUnits="userSpaceOnUse" x1="1153" x2="1753" y1="0" y2="0"><stop offset="0.000" stop-color="#00a18f"/><stop offset="0.320" stop-color="#05a186"/><stop offset="0.437" stop-color="#93a181"/><stop offset="0.460" stop-color="#a18c6f"/><stop offset="0.547" stop-color="#a14835"/><stop offset="0.740" stop-color="#a1130a"/><stop offset="1.000" stop-color="#a10000"/></linearGradient><linearGradient id="o101" gradientUnits="userSpaceOnUse" x1="1153" x2="1753" y1="0" y2="0"><stop offset="0.000" stop-color="#00a192"/><stop offset="0.320" stop-color="#07a18b"/><stop offset="0.437" stop-color="#99a186"/><stop offset="0.527" stop-color="#a14f40"/><stop offset="0.697" stop-color="#a11910"/><stop offset="0.980" stop-color="#a10000"/><stop offset="1.000" stop-color="#a10000"/></linearGradient><linearGradient id="o102" gradientUnits="userSpaceOnUse" x1="1153" x2="1753" y1="0" y2="0"><stop offset="0.000" stop-color="#00a196"/><stop offset="0.317" stop-color="#06a190"/><stop offset="0.430" stop-color="#95a18d"/><stop offset="0.457" stop-color="#a18675"/><stop offset="0.543" stop-color="#a14439"/><stop offset="0.743" stop-color="#a1100b"/><stop offset="1.000" stop-color="#a10000"/></linearGradient><linearGradient id="o103" gradientUnits="userSpaceOnUse" x1="1153" x2="1753" y1="0" y2="0"><stop offset="0.000" stop-color="#00a199"/><stop offset="0.317" stop-color="#08a196"/><stop offset="0.427" stop-color="#95a194"/><stop offset="0.453" stop-color="#a18579"/><stop offset="0.540" stop-color="#a1433c"/><stop offset="0.740" stop-color="#a1100c"/><stop offset="1.000" stop-color="#a10000"/></linearGradient><linearGradient id="o104" gradientUnits="userSpaceOnUse" x1="1153" x2="1753" y1="0" y2="0"><stop offset="0.000" stop-color="#00a19d"/><stop offset="0.313" stop-color="#06a19b"/><stop offset="0.423" stop-color="#96a19a"/><stop offset="0.450" stop-color="#a1837e"/><stop offset="0.537" stop-color="#a1413e"/><stop offset="0.737" stop-color="#a10f0d"/><stop offset="1.000" stop-color="#a10000"/></linearGradient><linearGradient id="o105" gradientUnits="userSpaceOnUse" x1="1153" x2="1753" y1="0" y2="0"><stop offset="0.000" stop-color="#00a1a0"/><stop offset="0.310" stop-color="#05a0a1"/><stop offset="0.420" stop-color="#96a0a1"/><stop offset="0.450" stop-color="#a17e7f"/><stop offset="0.540" stop-color="#a13d3e"/><stop offset="0.750" stop-color="#a10c0c"/><stop offset="1.000" stop-color="#a10000"/></linearGradient><linearGradient id="o106" gradientUnits="userSpaceOnUse" x1="1153" x2="1753" y1="0" y2="0"><stop offset="0.000" stop-color="#009da1"/><stop offset="0.310" stop-color="#079ba1"/><stop offset="0.420" stop-color="#9699a1"/><stop offset="0.447" stop-color="#a17d84"/><stop offset="0.533" stop-color="#a13d42"/><stop offset="0.733" stop-color="#a10d0f"/><stop offset="1.000" stop-color="#a10000"/></linearGradient><linearGradient id="o107" gradientUnits="userSpaceOnUse" x1="1153" x2="1753" y1="0" y2="0"><stop offset="0.000" stop-color="#009aa1"/><stop offset="0.307" stop-color="#0595a1"/><stop offset="0.420" stop-color="#9692a1"/><stop offset="0.443" stop-color="#a17c89"/><stop offset="0.527" stop-color="#a13e46"/><stop offset="0.717" stop-color="#a10e12"/><stop offset="1.000" stop-color="#a10000"/></linearGradient><linearGradient id="o108" gradientUnits="userSpaceOnUse" x1="1153" x2="1753" y1="0" y2="0"><stop offset="0.000" stop-color="#0096a1"/><stop offset="0.307" stop-color="#0790a1"/><stop offset="0.420" stop-color="#968ba1"/><stop offset="0.447" stop-color="#a17385"/><stop offset="0.537" stop-color="#a13742"/><stop offset="0.743" stop-color="#a1090f"/><stop offset="1.000" stop-color="#a10000"/></linearGradient><linearGradient id="o109" gradientUnits="userSpaceOnUse" x1="1153" x2="1753" y1="0" y2="0"><stop offset="0.000" stop-color="#0093a1"/><stop offset="0.303" stop-color="#058ba1"/><stop offset="0.420" stop-color="#9585a1"/><stop offset="0.450" stop-color="#a16a82"/><stop offset="0.543" stop-color="#a13140"/><stop offset="0.760" stop-color="#a1060e"/><stop offset="1.000" stop-color="#a10000"/></linearGradient><linearGradient id="o110" gradientUnits="userSpaceOnUse" x1="1153" x2="1753" y1="0" y2="0"><stop offset="0.000" stop-color="#008fa1"/><stop offset="0.303" stop-color="#0786a1"/><stop offset="0.423" stop-color="#9a7fa1"/><stop offset="0.513" stop-color="#a13b50"/><stop offset="0.687" stop-color="#a10e1a"/><stop offset="0.980" stop-color="#a10000"/><stop offset="1.000" stop-color="#a10000"/></linearGradient><linearGradient id="o111" gradientUnits="userSpaceOnUse" x1="1153" x2="1753" y1="0" y2="0"><stop offset="0.000" stop-color="#008ca1"/><stop offset="0.300" stop-color="#0581a1"/><stop offset="0.420" stop-color="#9579a1"/><stop offset="0.450" stop-color="#a16184"/><stop offset="0.543" stop-color="#a12c42"/><stop offset="0.760" stop-color="#a1040f"/><stop offset="1.000" stop-color="#a10000"/></linearGradient><linearGradient id="o112" gradientUnits="userSpaceOnUse" x1="1153" x2="1753" y1="0" y2="0"><stop offset="0.000" stop-color="#0088a1"/><stop offset="0.300" stop-color="#077ca1"/><stop offset="0.423" stop-color="#9973a1"/><stop offset="0.517" stop-color="#a13450"/><stop offset="0.693" stop-color="#a10a1a"/><stop offset="1.000" stop-color="#a10000"/></linearGradient><linearGradient id="o113" gradientUnits="userSpaceOnUse" x1="1153" x2="1753" y1="0" y2="0"><stop offset="0.000" stop-color="#0085a1"/><stop offset="0.297" stop-color="#0578a1"/><stop offset="0.420" stop-color="#946ea1"/><stop offset="0.447" stop-color="#a15b89"/><stop offset="0.540" stop-color="#a12946"/><stop offset="0.753" stop-color="#a10212"/><stop offset="1.000" stop-color="#a10000"/></linearGradient><linearGradient id="o114" gradientUnits="userSpaceOnUse" x1="1153" x2="1753" y1="0" y2="0"><stop offset="0.000" stop-color="#0082a1"/><stop offset="0.297" stop-color="#0773a1"/><stop offset="0.423" stop-color="#9968a1"/><stop offset="0.520" stop-color="#a12e50"/><stop offset="0.703" stop-color="#a1061a"/><stop offset="1.000" stop-color="#a10000"/></linearGradient><linearGradient id="o115" gradientUnits="userSpaceOnUse" x1="1153" x2="1753" y1="0" y2="0"><stop offset="0.000" stop-color="#007fa1"/><stop offset="0.293" stop-color="#066fa1"/><stop offset="0.423" stop-color="#9863a1"/><stop offset="0.523" stop-color="#a12a4f"/><stop offset="0.713" stop-color="#a10419"/><stop offset="1.000" stop-color="#a10000"/></linearGradient><linearGradient id="o116" gradientUnits="userSpaceOnUse" x1="1153" x2="1753" y1="0" y2="0"><stop offset="0.000" stop-color="#007ca1"/><stop offset="0.293" stop-color="#076ba1"/><stop offset="0.423" stop-color="#985ea1"/><stop offset="0.513" stop-color="#a12b56"/><stop offset="0.687" stop-color="#a1061e"/><stop offset="1.000" stop-color="#a10000"/></linearGradient><linearGradient id="o117" gradientUnits="userSpaceOnUse" x1="1153" x2="1753" y1="0" y2="0"><stop offset="0.000" stop-color="#0079a1"/><stop offset="0.290" stop-color="#0667a1"/><stop offset="0.423" stop-color="#9859a1"/><stop offset="0.487" stop-color="#a13368"/><stop offset="0.627" stop-color="#a10d2c"/><stop offset="0.897" stop-color="#a10006"/><stop offset="1.000" stop-color="#a10000"/></linearGradient><linearGradient id="o118" gradientUnits="userSpaceOnUse" x1="1153" x2="1753" y1="0" y2="0"><stop offset="0.000" stop-color="#0076a1"/><stop offset="0.290" stop-color="#0763a1"/><stop offset="0.423" stop-color="#9754a1"/><stop offset="0.480" stop-color="#a1336d"/><stop offset="0.613" stop-color="#a10d30"/><stop offset="0.870" stop-color="#a10008"/><stop offset="1.000" stop-color="#a10000"/></linearGradient><linearGradient id="o119" gradientUnits="userSpaceOnUse" x1="1153" x2="1753" y1="0" y2="0"><stop offset="0.000" stop-color="#0073a1"/><stop offset="0.287" stop-color="#065fa1"/><stop offset="0.423" stop-color="#974fa1"/><stop offset="0.487" stop-color="#a12d69"/><stop offset="0.630" stop-color="#a1092d"/><stop offset="0.993" stop-color="#a10000"/><stop offset="1.000" stop-color="#a10000"/></linearGradient><linearGradient id="o120" gradientUnits="userSpaceOnUse" x1="1153" x2="1753" y1="0" y2="0"><stop offset="0.000" stop-color="#0070a1"/><stop offset="0.287" stop-color="#075ca1"/><stop offset="0.423" stop-color="#974ba1"/><stop offset="0.477" stop-color="#a12f72"/><stop offset="0.607" stop-color="#a10b34"/><stop offset="0.910" stop-color="#a10006"/><stop offset="1.000" stop-color="#a10000"/></linearGradient><linearGradient id="o121" gradientUnits="userSpaceOnUse" x1="1153" x2="1753" y1="0" y2="0"><stop offset="0.000" stop-color="#006da1"/><stop offset="0.283" stop-color="#0658a1"/><stop offset="0.423" stop-color="#9747a1"/><stop offset="0.470" stop-color="#a12f78"/><stop offset="0.593" stop-color="#a10c38"/><stop offset="0.867" stop-color="#a1000a"/><stop offset="1.000" stop-color="#a10001"/></linearGradient><linearGradient id="o122" gradientUnits="userSpaceOnUse" x1="1153" x2="1753" y1="0" y2="0"><stop offset="0.000" stop-color="#006aa1"/><stop offset="0.283" stop-color="#0755a1"/><stop offset="0.427" stop-color="#9b42a1"/><stop offset="0.530" stop-color="#a11752"/><stop offset="0.730" stop-color="#a1001b"/><stop offset="1.000" stop-color="#a10001"/></linearGradient><linearGradient id="o123" gradientUnits="userSpaceOnUse" x1="1153" x2="1753" y1="0" y2="0"><stop offset="0.000" stop-color="#0067a1"/><stop offset="0.280" stop-color="#0651a1"/><stop offset="0.423" stop-color="#963ea1"/><stop offset="0.463" stop-color="#a12c7f"/><stop offset="0.583" stop-color="#a10a3d"/><stop offset="0.867" stop-color="#a1000c"/><stop offset="1.000" stop-color="#a10002"/></linearGradient><linearGradient id="o124" gradientUnits="userSpaceOnUse" x1="1153" x2="1753" y1="0" y2="0"><stop offset="0.000" stop-color="#0065a1"/><stop offset="0.280" stop-color="#074ea1"/><stop offset="0.427" stop-color="#9a3aa1"/><stop offset="0.537" stop-color="#a11151"/><stop offset="0.733" stop-color="#a1001c"/><stop offset="1.000" stop-color="#a10002"/></linearGradient><linearGradient id="o125" gradientUnits="userSpaceOnUse" x1="1153" x2="1753" y1="0" y2="0"><stop offset="0.000" stop-color="#0062a1"/><stop offset="0.277" stop-color="#064ba1"/><stop offset="0.423" stop-color="#9636a1"/><stop offset="0.457" stop-color="#a12886"/><stop offset="0.570" stop-color="#a10944"/><stop offset="0.830" stop-color="#a10010"/><stop offset="1.000" stop-color="#a10003"/></linearGradient><linearGradient id="o126" gradientUnits="userSpaceOnUse" x1="1153" x2="1753" y1="0" y2="0"><stop offset="0.000" stop-color="#005fa1"/><stop offset="0.277" stop-color="#0848a1"/><stop offset="0.427" stop-color="#9932a1"/><stop offset="0.540" stop-color="#a10d51"/><stop offset="0.757" stop-color="#a1001a"/><stop offset="1.000" stop-color="#a10003"/></linearGradient><linearGradient id="o127" gradientUnits="userSpaceOnUse" x1="1153" x2="1753" y1="0" y2="0"><stop offset="0.000" stop-color="#005da1"/><stop offset="0.273" stop-color="#0645a1"/><stop offset="0.427" stop-color="#992ea1"/><stop offset="0.543" stop-color="#a10a50"/><stop offset="0.767" stop-color="#a10019"/><stop offset="1.000" stop-color="#a10003"/></linearGradient><linearGradient id="o128" gradientUnits="userSpaceOnUse" x1="1153" x2="1753" y1="0" y2="0"><stop offset="0.000" stop-color="#005aa1"/><stop offset="0.273" stop-color="#0842a1"/><stop offset="0.427" stop-color="#992aa1"/><stop offset="0.547" stop-color="#a1074f"/><stop offset="0.773" stop-color="#a10019"/><stop offset="1.000" stop-color="#a10004"/></linearGradient><linearGradient id="o129" gradientUnits="userSpaceOnUse" x1="1153" x2="1753" y1="0" y2="0"><stop offset="0.000" stop-color="#0058a1"/><stop offset="0.270" stop-color="#063fa1"/><stop offset="0.427" stop-color="#9927a1"/><stop offset="0.547" stop-color="#a10550"/><stop offset="0.773" stop-color="#a10019"/><stop offset="1.000" stop-color="#a10004"/></linearGradient><linearGradient id="o130" gradientUnits="userSpaceOnUse" x1="1153" x2="1753" y1="0" y2="0"><stop offset="0.000" stop-color="#0055a1"/><stop offset="0.270" stop-color="#083ca1"/><stop offset="0.427" stop-color="#9824a1"/><stop offset="0.550" stop-color="#a1034f"/><stop offset="0.783" stop-color="#a10019"/><stop offset="1.000" stop-color="#a10005"/></linearGradient><linearGradient id="o131" gradientUnits="userSpaceOnUse" x1="1153" x2="1753" y1="0" y2="0"><stop offset="0.000" stop-color="#0053a1"/><stop offset="0.267" stop-color="#0639a1"/><stop offset="0.427" stop-color="#9820a1"/><stop offset="0.553" stop-color="#a1014f"/><stop offset="0.790" stop-color="#a10018"/><stop offset="1.000" stop-color="#a10005"/></linearGradient><linearGradient id="o132" gradientUnits="userSpaceOnUse" x1="1153" x2="1753" y1="0" y2="0"><stop offset="0.000" stop-color="#0051a1"/><stop offset="0.267" stop-color="#0836a1"/><stop offset="0.427" stop-color="#981da1"/><stop offset="0.537" stop-color="#a10256"/><stop offset="0.750" stop-color="#a1001f"/><stop offset="1.000" stop-color="#a10006"/></linearGradient><linearGradient id="o133" gradientUnits="userSpaceOnUse" x1="1153" x2="1753" y1="0" y2="0"><stop offset="0.000" stop-color="#004ea1"/><stop offset="0.263" stop-color="#0734a1"/><stop offset="0.427" stop-color="#981aa1"/><stop offset="0.513" stop-color="#a10463"/><stop offset="0.697" stop-color="#a10028"/><stop offset="1.000" stop-color="#a10006"/></linearGradient><linearGradient id="o134" gradientUnits="userSpaceOnUse" x1="1153" x2="1753" y1="0" y2="0"><stop offset="0.000" stop-color="#004ca1"/><stop offset="0.263" stop-color="#0831a1"/><stop offset="0.430" stop-color="#9b16a1"/><stop offset="0.550" stop-color="#a10052"/><stop offset="0.783" stop-color="#a1001b"/><stop offset="1.000" stop-color="#a10007"/></linearGradient><linearGradient id="o135" gradientUnits="userSpaceOnUse" x1="1153" x2="1753" y1="0" y2="0"><stop offset="0.000" stop-color="#004aa1"/><stop offset="0.260" stop-color="#072fa1"/><stop offset="0.427" stop-color="#9714a1"/><stop offset="0.490" stop-color="#a10472"/><stop offset="0.647" stop-color="#a10034"/><stop offset="1.000" stop-color="#a10007"/></linearGradient><linearGradient id="o136" gradientUnits="userSpaceOnUse" x1="1153" x2="1753" y1="0" y2="0"><stop offset="0.000" stop-color="#0047a1"/><stop offset="0.260" stop-color="#082ca1"/><stop offset="0.430" stop-color="#9a10a1"/><stop offset="0.557" stop-color="#a10051"/><stop offset="0.800" stop-color="#a1001a"/><stop offset="1.000" stop-color="#a10008"/></linearGradient><linearGradient id="o137" gradientUnits="userSpaceOnUse" x1="1153" x2="1753" y1="0" y2="0"><stop offset="0.000" stop-color="#0045a1"/><stop offset="0.257" stop-color="#072aa1"/><stop offset="0.427" stop-color="#970ea1"/><stop offset="0.477" stop-color="#a1027d"/><stop offset="0.620" stop-color="#a1003c"/><stop offset="0.963" stop-color="#a1000b"/><stop offset="1.000" stop-color="#a10008"/></linearGradient><linearGradient id="o138" gradientUnits="userSpaceOnUse" x1="1153" x2="1753" y1="0" y2="0"><stop offset="0.000" stop-color="#0043a1"/><stop offset="0.257" stop-color="#0828a1"/><stop offset="0.430" stop-color="#9a0aa1"/><stop offset="0.560" stop-color="#a10051"/><stop offset="0.810" stop-color="#a1001a"/><stop offset="1.000" stop-color="#a10009"/></linearGradient><linearGradient id="o139" gradientUnits="userSpaceOnUse" x1="1153" x2="1753" y1="0" y2="0"><stop offset="0.000" stop-color="#0041a1"/><stop offset="0.253" stop-color="#0726a1"/><stop offset="0.430" stop-color="#9a07a1"/><stop offset="0.563" stop-color="#a10050"/><stop offset="0.817" stop-color="#a1001a"/><stop offset="1.000" stop-color="#a10009"/></linearGradient><linearGradient id="o140" gradientUnits="userSpaceOnUse" x1="1153" x2="1753" y1="0" y2="0"><stop offset="0.000" stop-color="#003fa1"/><stop offset="0.253" stop-color="#0823a1"/><stop offset="0.430" stop-color="#9905a1"/><stop offset="0.563" stop-color="#a10051"/><stop offset="0.820" stop-color="#a1001a"/><stop offset="1.000" stop-color="#a10009"/></linearGradient><linearGradient id="o141" gradientUnits="userSpaceOnUse" x1="1153" x2="1753" y1="0" y2="0"><stop offset="0.000" stop-color="#003da1"/><stop offset="0.250" stop-color="#0721a1"/><stop offset="0.430" stop-color="#9902a1"/><stop offset="0.567" stop-color="#a10050"/><stop offset="0.827" stop-color="#a1001a"/><stop offset="1.000" stop-color="#a1000a"/></linearGradient><linearGradient id="o142" gradientUnits="userSpaceOnUse" x1="1153" x2="1753" y1="0" y2="0"><stop offset="0.000" stop-color="#003aa1"/><stop offset="0.250" stop-color="#081fa1"/><stop offset="0.430" stop-color="#9900a1"/><stop offset="0.570" stop-color="#a1004f"/><stop offset="0.837" stop-color="#a10019"/><stop offset="1.000" stop-color="#a1000a"/></linearGradient><linearGradient id="o143" gradientUnits="userSpaceOnUse" x1="1153" x2="1753" y1="0" y2="0"><stop offset="0.000" stop-color="#0038a1"/><stop offset="0.247" stop-color="#071da1"/><stop offset="0.430" stop-color="#9900a1"/><stop offset="0.570" stop-color="#a10050"/><stop offset="0.837" stop-color="#a10019"/><stop offset="1.000" stop-color="#a1000b"/></linearGradient><linearGradient id="o144" gradientUnits="userSpaceOnUse" x1="1153" x2="1753" y1="0" y2="0"><stop offset="0.000" stop-color="#0036a1"/><stop offset="0.247" stop-color="#081ba1"/><stop offset="0.430" stop-color="#9900a1"/><stop offset="0.573" stop-color="#a10050"/><stop offset="0.843" stop-color="#a10019"/><stop offset="1.000" stop-color="#a1000b"/></linearGradient><linearGradient id="o145" gradientUnits="userSpaceOnUse" x1="1153" x2="1753" y1="0" y2="0"><stop offset="0.000" stop-color="#0034a1"/><stop offset="0.243" stop-color="#0719a1"/><stop offset="0.430" stop-color="#9800a1"/><stop offset="0.577" stop-color="#a1004f"/><stop offset="0.853" stop-color="#a10019"/><stop offset="1.000" stop-color="#a1000c"/></linearGradient><linearGradient id="o146" gradientUnits="userSpaceOnUse" x1="1153" x2="1753" y1="0" y2="0"><stop offset="0.000" stop-color="#0032a1"/><stop offset="0.243" stop-color="#0817a1"/><stop offset="0.433" stop-color="#9b00a1"/><stop offset="0.570" stop-color="#a10052"/><stop offset="0.837" stop-color="#a1001b"/><stop offset="1.000" stop-color="#a1000c"/></linearGradient><linearGradient id="o147" gradientUnits="userSpaceOnUse" x1="1153" x2="1753" y1="0" y2="0"><stop offset="0.000" stop-color="#0031a1"/><stop offset="0.240" stop-color="#0715a1"/><stop offset="0.430" stop-color="#9800a1"/><stop offset="0.553" stop-color="#a10059"/><stop offset="0.800" stop-color="#a10020"/><stop offset="1.000" stop-color="#a1000d"/></linearGradient><linearGradient id="o148" gradientUnits="userSpaceOnUse" x1="1153" x2="1753" y1="0" y2="0"><stop offset="0.000" stop-color="#002fa1"/><stop offset="0.240" stop-color="#0813a1"/><stop offset="0.433" stop-color="#9b00a1"/><stop offset="0.573" stop-color="#a10052"/><stop offset="0.847" stop-color="#a1001b"/><stop offset="1.000" stop-color="#a1000d"/></linearGradient><linearGradient id="o149" gradientUnits="userSpaceOnUse" x1="1153" x2="1753" y1="0" y2="0"><stop offset="0.000" stop-color="#002da1"/><stop offset="0.237" stop-color="#0711a1"/><stop offset="0.430" stop-color="#9800a1"/><stop offset="0.510" stop-color="#a1006e"/><stop offset="0.703" stop-color="#a10030"/><stop offset="1.000" stop-color="#a1000d"/></linearGradient><linearGradient id="o150" gradientUnits="userSpaceOnUse" x1="1153" x2="1753" y1="0" y2="0"><stop offset="0.000" stop-color="#002ba1"/><stop offset="0.237" stop-color="#080fa1"/><stop offset="0.433" stop-color="#9a00a1"/><stop offset="0.580" stop-color="#a10051"/><stop offset="0.863" stop-color="#a1001a"/><stop offset="1.000" stop-color="#a1000e"/></linearGradient><linearGradient id="o151" gradientUnits="userSpaceOnUse" x1="1153" x2="1753" y1="0" y2="0"><stop offset="0.000" stop-color="#0029a1"/><stop offset="0.233" stop-color="#070ea1"/><stop offset="0.433" stop-color="#9a00a1"/><stop offset="0.580" stop-color="#a10051"/><stop offset="0.863" stop-color="#a1001b"/><stop offset="1.000" stop-color="#a1000e"/></linearGradient><linearGradient id="o152" gradientUnits="userSpaceOnUse" x1="1153" x2="1753" y1="0" y2="0"><stop offset="0.000" stop-color="#0027a1"/><stop offset="0.233" stop-color="#080ca1"/><stop offset="0.433" stop-color="#9a00a1"/><stop offset="0.583" stop-color="#a10051"/><stop offset="0.873" stop-color="#a1001a"/><stop offset="1.000" stop-color="#a1000f"/></linearGradient><linearGradient id="o153" gradientUnits="userSpaceOnUse" x1="1153" x2="1753" y1="0" y2="0"><stop offset="0.000" stop-color="#0026a1"/><stop offset="0.230" stop-color="#070aa1"/><stop offset="0.433" stop-color="#9a00a1"/><stop offset="0.587" stop-color="#a10050"/><stop offset="0.880" stop-color="#a1001a"/><stop offset="1.000" stop-color="#a1000f"/></linearGradient><linearGradient id="o154" gradientUnits="userSpaceOnUse" x1="1153" x2="1753" y1="0" y2="0"><stop offset="0.000" stop-color="#0024a1"/><stop offset="0.230" stop-color="#0808a1"/><stop offset="0.433" stop-color="#9a00a1"/><stop offset="0.590" stop-color="#a10050"/><stop offset="0.890" stop-color="#a10019"/><stop offset="1.000" stop-color="#a10010"/></linearGradient><linearGradient id="o155" gradientUnits="userSpaceOnUse" x1="1153" x2="1753" y1="0" y2="0"><stop offset="0.000" stop-color="#0022a1"/><stop offset="0.227" stop-color="#0707a1"/><stop offset="0.433" stop-color="#9900a1"/><stop offset="0.590" stop-color="#a10050"/><stop offset="0.890" stop-color="#a1001a"/><stop offset="1.000" stop-color="#a10010"/></linearGradient><linearGradient id="o156" gradientUnits="userSpaceOnUse" x1="1153" x2="1753" y1="0" y2="0"><stop offset="0.000" stop-color="#0020a1"/><stop offset="0.227" stop-color="#0805a1"/><stop offset="0.433" stop-color="#9900a1"/><stop offset="0.593" stop-color="#a10050"/><stop offset="0.897" stop-color="#a10019"/><stop offset="1.000" stop-color="#a10010"/></linearGradient><linearGradient id="o157" gradientUnits="userSpaceOnUse" x1="1153" x2="1753" y1="0" y2="0"><stop offset="0.000" stop-color="#001fa1"/><stop offset="0.223" stop-color="#0704a1"/><stop offset="0.433" stop-color="#9900a1"/><stop offset="0.597" stop-color="#a1004f"/><stop offset="0.907" stop-color="#a10019"/><stop offset="1.000" stop-color="#a10011"/></linearGradient><linearGradient id="o158" gradientUnits="userSpaceOnUse" x1="1153" x2="1753" y1="0" y2="0"><stop offset="0.000" stop-color="#001da1"/><stop offset="0.223" stop-color="#0802a1"/><stop offset="0.437" stop-color="#9c00a1"/><stop offset="0.590" stop-color="#a10052"/><stop offset="0.890" stop-color="#a1001b"/><stop offset="1.000" stop-color="#a10011"/></linearGradient><linearGradient id="o159" gradientUnits="userSpaceOnUse" x1="1153" x2="1753" y1="0" y2="0"><stop offset="0.000" stop-color="#001ba1"/><stop offset="0.220" stop-color="#0700a1"/><stop offset="0.433" stop-color="#9900a1"/><stop offset="0.600" stop-color="#a1004f"/><stop offset="0.917" stop-color="#a10019"/><stop offset="1.000" stop-color="#a10012"/></linearGradient><linearGradient id="o160" gradientUnits="userSpaceOnUse" x1="1153" x2="1753" y1="0" y2="0"><stop offset="0.000" stop-color="#001aa1"/><stop offset="0.220" stop-color="#0800a1"/><stop offset="0.437" stop-color="#9b00a1"/><stop offset="0.593" stop-color="#a10052"/><stop offset="0.900" stop-color="#a1001b"/><stop offset="1.000" stop-color="#a10012"/></linearGradient><linearGradient id="o161" gradientUnits="userSpaceOnUse" x1="1153" x2="1753" y1="0" y2="0"><stop offset="0.000" stop-color="#0018a1"/><stop offset="0.217" stop-color="#0700a1"/><stop offset="0.433" stop-color="#9800a1"/><stop offset="0.603" stop-color="#a1004f"/><stop offset="0.923" stop-color="#a10019"/><stop offset="1.000" stop-color="#a10012"/></linearGradient><linearGradient id="o162" gradientUnits="userSpaceOnUse" x1="1153" x2="1753" y1="0" y2="0"><stop offset="0.000" stop-color="#0016a1"/><stop offset="0.217" stop-color="#0800a1"/><stop offset="0.437" stop-color="#9b00a1"/><stop offset="0.600" stop-color="#a10051"/><stop offset="0.917" stop-color="#a1001a"/><stop offset="1.000" stop-color="#a10013"/></linearGradient><linearGradient id="o163" gradientUnits="userSpaceOnUse" x1="1153" x2="1753" y1="0" y2="0"><stop offset="0.000" stop-color="#0015a1"/><stop offset="0.213" stop-color="#0700a1"/><stop offset="0.437" stop-color="#9b00a1"/><stop offset="0.600" stop-color="#a10051"/><stop offset="0.917" stop-color="#a1001b"/><stop offset="1.000" stop-color="#a10013"/></linearGradient><linearGradient id="o164" gradientUnits="userSpaceOnUse" x1="1153" x2="1753" y1="0" y2="0"><stop offset="0.000" stop-color="#0013a1"/><stop offset="0.213" stop-color="#0800a1"/><stop offset="0.437" stop-color="#9a00a1"/><stop offset="0.603" stop-color="#a10051"/><stop offset="0.927" stop-color="#a1001a"/><stop offset="1.000" stop-color="#a10014"/></linearGradient><linearGradient id="o165" gradientUnits="userSpaceOnUse" x1="1153" x2="1753" y1="0" y2="0"><stop offset="0.000" stop-color="#0012a1"/><stop offset="0.210" stop-color="#0700a1"/><stop offset="0.437" stop-color="#9a00a1"/><stop offset="0.607" stop-color="#a10050"/><stop offset="0.933" stop-color="#a1001a"/><stop offset="1.000" stop-color="#a10014"/></linearGradient><linearGradient id="o166" gradientUnits="userSpaceOnUse" x1="1153" x2="1753" y1="0" y2="0"><stop offset="0.000" stop-color="#0010a1"/><stop offset="0.210" stop-color="#0800a1"/><stop offset="0.437" stop-color="#9a00a1"/><stop offset="0.607" stop-color="#a10051"/><stop offset="0.933" stop-color="#a1001a"/><stop offset="1.000" stop-color="#a10014"/></linearGradient><linearGradient id="o167" gradientUnits="userSpaceOnUse" x1="1153" x2="1753" y1="0" y2="0"><stop offset="0.000" stop-color="#000fa1"/><stop offset="0.207" stop-color="#0800a1"/><stop offset="0.437" stop-color="#9a00a1"/><stop offset="0.610" stop-color="#a10050"/><stop offset="0.943" stop-color="#a1001a"/><stop offset="1.000" stop-color="#a10015"/></linearGradient><linearGradient id="o168" gradientUnits="userSpaceOnUse" x1="1153" x2="1753" y1="0" y2="0"><stop offset="0.000" stop-color="#000da1"/><stop offset="0.207" stop-color="#0800a1"/><stop offset="0.437" stop-color="#9a00a1"/><stop offset="0.613" stop-color="#a10050"/><stop offset="0.950" stop-color="#a10019"/><stop offset="1.000" stop-color="#a10015"/></linearGradient><linearGradient id="o169" gradientUnits="userSpaceOnUse" x1="1153" x2="1753" y1="0" y2="0"><stop offset="0.000" stop-color="#000ca1"/><stop offset="0.203" stop-color="#0800a1"/><stop offset="0.437" stop-color="#9900a1"/><stop offset="0.613" stop-color="#a10050"/><stop offset="0.950" stop-color="#a1001a"/><stop offset="1.000" stop-color="#a10016"/></linearGradient><linearGradient id="o170" gradientUnits="userSpaceOnUse" x1="1153" x2="1753" y1="0" y2="0"><stop offset="0.000" stop-color="#000aa1"/><stop offset="0.203" stop-color="#0800a1"/><stop offset="0.440" stop-color="#9c00a1"/><stop offset="0.607" stop-color="#a10053"/><stop offset="0.937" stop-color="#a1001c"/><stop offset="1.000" stop-color="#a10016"/></linearGradient><linearGradient id="o171" gradientUnits="userSpaceOnUse" x1="1153" x2="1753" y1="0" y2="0"><stop offset="0.000" stop-color="#0009a1"/><stop offset="0.200" stop-color="#0800a1"/><stop offset="0.437" stop-color="#9900a1"/><stop offset="0.620" stop-color="#a10050"/><stop offset="0.970" stop-color="#a10019"/><stop offset="1.000" stop-color="#a10016"/></linearGradient><linearGradient id="o172" gradientUnits="userSpaceOnUse" x1="1153" x2="1753" y1="0" y2="0"><stop offset="0.000" stop-color="#0008a1"/><stop offset="0.200" stop-color="#0800a1"/><stop offset="0.440" stop-color="#9b00a1"/><stop offset="0.613" stop-color="#a10052"/><stop offset="0.953" stop-color="#a1001b"/><stop offset="1.000" stop-color="#a10017"/></linearGradient><linearGradient id="t0" gradientUnits="userSpaceOnUse" x1="1274" x2="1680" y1="0" y2="0"><stop offset="0.000" stop-color="#00ff27"/><stop offset="0.320" stop-color="#08ff00"/><stop offset="0.586" stop-color="#bcff00"/><stop offset="0.675" stop-color="#fff600"/><stop offset="0.828" stop-color="#ff9a00"/><stop offset="1.000" stop-color="#ff6200"/></linearGradient><linearGradient id="t1" gradientUnits="userSpaceOnUse" x1="1274" x2="1680" y1="0" y2="0"><stop offset="0.000" stop-color="#00ff28"/><stop offset="0.315" stop-color="#06ff00"/><stop offset="0.581" stop-color="#bbff00"/><stop offset="0.670" stop-color="#fff600"/><stop offset="0.818" stop-color="#ff9c00"/><stop offset="1.000" stop-color="#ff6100"/></linearGradient><linearGradient id="t2" gradientUnits="userSpaceOnUse" x1="1274" x2="1680" y1="0" y2="0"><stop offset="0.000" stop-color="#00ff29"/><stop offset="0.315" stop-color="#07ff01"/><stop offset="0.576" stop-color="#baff00"/><stop offset="0.665" stop-color="#fff700"/><stop offset="0.813" stop-color="#ff9c00"/><stop offset="1.000" stop-color="#ff5f00"/></linearGradient><linearGradient id="t3" gradientUnits="userSpaceOnUse" x1="1274" x2="1680" y1="0" y2="0"><stop offset="0.000" stop-color="#00ff2a"/><stop offset="0.315" stop-color="#08ff02"/><stop offset="0.576" stop-color="#bdff00"/><stop offset="0.660" stop-color="#fff800"/><stop offset="0.808" stop-color="#ff9c00"/><stop offset="1.000" stop-color="#ff5e00"/></linearGradient><linearGradient id="t4" gradientUnits="userSpaceOnUse" x1="1274" x2="1680" y1="0" y2="0"><stop offset="0.000" stop-color="#00ff2c"/><stop offset="0.310" stop-color="#06ff04"/><stop offset="0.571" stop-color="#bcff00"/><stop offset="0.655" stop-color="#fff900"/><stop offset="0.798" stop-color="#ff9e00"/><stop offset="1.000" stop-color="#ff5d00"/></linearGradient><linearGradient id="t5" gradientUnits="userSpaceOnUse" x1="1274" x2="1680" y1="0" y2="0"><stop offset="0.000" stop-color="#00ff2d"/><stop offset="0.310" stop-color="#08ff05"/><stop offset="0.567" stop-color="#baff00"/><stop offset="0.655" stop-color="#fff500"/><stop offset="0.803" stop-color="#ff9a00"/><stop offset="1.000" stop-color="#ff5b00"/></linearGradient><linearGradient id="t6" gradientUnits="userSpaceOnUse" x1="1274" x2="1680" y1="0" y2="0"><stop offset="0.000" stop-color="#00ff2e"/><stop offset="0.305" stop-color="#06ff07"/><stop offset="0.562" stop-color="#b9ff00"/><stop offset="0.650" stop-color="#fff600"/><stop offset="0.793" stop-color="#ff9c00"/><stop offset="1.000" stop-color="#ff5a00"/></linearGradient><linearGradient id="t7" gradientUnits="userSpaceOnUse" x1="1274" x2="1680" y1="0" y2="0"><stop offset="0.000" stop-color="#00ff30"/><stop offset="0.305" stop-color="#07ff09"/><stop offset="0.562" stop-color="#bcff00"/><stop offset="0.645" stop-color="#fff700"/><stop offset="0.788" stop-color="#ff9c00"/><stop offset="1.000" stop-color="#ff5800"/></linearGradient><linearGradient id="t8" gradientUnits="userSpaceOnUse" x1="1274" x2="1680" y1="0" y2="0"><stop offset="0.000" stop-color="#00ff31"/><stop offset="0.305" stop-color="#08ff0a"/><stop offset="0.557" stop-color="#bbff00"/><stop offset="0.640" stop-color="#fff800"/><stop offset="0.783" stop-color="#ff9c00"/><stop offset="1.000" stop-color="#ff5700"/></linearGradient><linearGradient id="t9" gradientUnits="userSpaceOnUse" x1="1274" x2="1680" y1="0" y2="0"><stop offset="0.000" stop-color="#00ff33"/><stop offset="0.300" stop-color="#06ff0c"/><stop offset="0.527" stop-color="#a5ff00"/><stop offset="0.635" stop-color="#fff900"/><stop offset="0.773" stop-color="#ff9e00"/><stop offset="1.000" stop-color="#ff5600"/></linearGradient><linearGradient id="t10" gradientUnits="userSpaceOnUse" x1="1274" x2="1680" y1="0" y2="0"><stop offset="0.000" stop-color="#00ff34"/><stop offset="0.300" stop-color="#07ff0e"/><stop offset="0.507" stop-color="#98ff00"/><stop offset="0.631" stop-color="#fffa00"/><stop offset="0.768" stop-color="#ff9e00"/><stop offset="1.000" stop-color="#ff5400"/></linearGradient><linearGradient id="t11" gradientUnits="userSpaceOnUse" x1="1274" x2="1680" y1="0" y2="0"><stop offset="0.000" stop-color="#00ff36"/><stop offset="0.296" stop-color="#05ff10"/><stop offset="0.493" stop-color="#8eff00"/><stop offset="0.626" stop-color="#fffb00"/><stop offset="0.764" stop-color="#ff9e00"/><stop offset="1.000" stop-color="#ff5300"/></linearGradient><linearGradient id="t12" gradientUnits="userSpaceOnUse" x1="1274" x2="1680" y1="0" y2="0"><stop offset="0.000" stop-color="#00ff37"/><stop offset="0.296" stop-color="#07ff11"/><stop offset="0.493" stop-color="#91ff00"/><stop offset="0.626" stop-color="#fff700"/><stop offset="0.764" stop-color="#ff9c00"/><stop offset="1.000" stop-color="#ff5200"/></linearGradient><linearGradient id="t13" gradientUnits="userSpaceOnUse" x1="1274" x2="1680" y1="0" y2="0"><stop offset="0.000" stop-color="#00ff38"/><stop offset="0.296" stop-color="#08ff13"/><stop offset="0.493" stop-color="#93ff00"/><stop offset="0.621" stop-color="#fff800"/><stop offset="0.759" stop-color="#ff9c00"/><stop offset="1.000" stop-color="#ff5000"/></linearGradient><linearGradient id="t14" gradientUnits="userSpaceOnUse" x1="1274" x2="1680" y1="0" y2="0"><stop offset="0.000" stop-color="#00ff3a"/><stop offset="0.291" stop-color="#06ff15"/><stop offset="0.493" stop-color="#96ff00"/><stop offset="0.616" stop-color="#fff900"/><stop offset="0.754" stop-color="#ff9c00"/><stop offset="0.995" stop-color="#ff5000"/><stop offset="1.000" stop-color="#ff4f00"/></linearGradient><linearGradient id="t15" gradientUnits="userSpaceOnUse" x1="1274" x2="1680" y1="0" y2="0"><stop offset="0.000" stop-color="#00ff3b"/><stop offset="0.291" stop-color="#07ff17"/><stop offset="0.502" stop-color="#a1ff00"/><stop offset="0.611" stop-color="#fffa00"/><stop offset="0.744" stop-color="#ff9e00"/><stop offset="0.980" stop-color="#ff5200"/><stop offset="1.000" stop-color="#ff4e00"/></linearGradient><linearGradient id="t16" gradientUnits="userSpaceOnUse" x1="1274" x2="1680" y1="0" y2="0"><stop offset="0.000" stop-color="#00ff3d"/><stop offset="0.291" stop-color="#08ff18"/><stop offset="0.502" stop-color="#a4ff00"/><stop offset="0.606" stop-color="#fffb00"/><stop offset="0.739" stop-color="#ff9e00"/><stop offset="0.975" stop-color="#ff5100"/><stop offset="1.000" stop-color="#ff4c00"/></linearGradient><linearGradient id="t17" gradientUnits="userSpaceOnUse" x1="1274" x2="1680" y1="0" y2="0"><stop offset="0.000" stop-color="#00ff3f"/><stop offset="0.286" stop-color="#06ff1a"/><stop offset="0.507" stop-color="#abff00"/><stop offset="0.606" stop-color="#fff700"/><stop offset="0.739" stop-color="#ff9c00"/><stop offset="0.975" stop-color="#ff5000"/><stop offset="1.000" stop-color="#ff4b00"/></linearGradient><linearGradient id="t18" gradientUnits="userSpaceOnUse" x1="1274" x2="1680" y1="0" y2="0"><stop offset="0.000" stop-color="#00ff40"/><stop offset="0.286" stop-color="#07ff1c"/><stop offset="0.517" stop-color="#b6ff00"/><stop offset="0.601" stop-color="#fff800"/><stop offset="0.734" stop-color="#ff9c00"/><stop offset="0.970" stop-color="#ff5000"/><stop offset="1.000" stop-color="#ff4a00"/></linearGradient><linearGradient id="t19" gradientUnits="userSpaceOnUse" x1="1274" x2="1680" y1="0" y2="0"><stop offset="0.000" stop-color="#00ff42"/><stop offset="0.281" stop-color="#06ff1e"/><stop offset="0.517" stop-color="#b9ff00"/><stop offset="0.596" stop-color="#fff800"/><stop offset="0.729" stop-color="#ff9c00"/><stop offset="0.966" stop-color="#ff4f00"/><stop offset="1.000" stop-color="#ff4800"/></linearGradient><linearGradient id="t20" gradientUnits="userSpaceOnUse" x1="1274" x2="1680" y1="0" y2="0"><stop offset="0.000" stop-color="#00ff43"/><stop offset="0.281" stop-color="#07ff20"/><stop offset="0.517" stop-color="#bdff00"/><stop offset="0.591" stop-color="#fff900"/><stop offset="0.719" stop-color="#ff9f00"/><stop offset="0.946" stop-color="#ff5200"/><stop offset="1.000" stop-color="#ff4700"/></linearGradient><linearGradient id="t21" gradientUnits="userSpaceOnUse" x1="1274" x2="1680" y1="0" y2="0"><stop offset="0.000" stop-color="#00ff45"/><stop offset="0.281" stop-color="#08ff22"/><stop offset="0.512" stop-color="#bbff00"/><stop offset="0.586" stop-color="#fffa00"/><stop offset="0.714" stop-color="#ff9f00"/><stop offset="0.941" stop-color="#ff5200"/><stop offset="1.000" stop-color="#ff4600"/></linearGradient><linearGradient id="t22" gradientUnits="userSpaceOnUse" x1="1274" x2="1680" y1="0" y2="0"><stop offset="0.000" stop-color="#00ff47"/><stop offset="0.276" stop-color="#06ff24"/><stop offset="0.507" stop-color="#baff00"/><stop offset="0.586" stop-color="#fff600"/><stop offset="0.714" stop-color="#ff9c00"/><stop offset="0.946" stop-color="#ff4f00"/><stop offset="1.000" stop-color="#ff4400"/></linearGradient><linearGradient id="t23" gradientUnits="userSpaceOnUse" x1="1274" x2="1680" y1="0" y2="0"><stop offset="0.000" stop-color="#00ff48"/><stop offset="0.276" stop-color="#07ff26"/><stop offset="0.507" stop-color="#bdff00"/><stop offset="0.581" stop-color="#fff700"/><stop offset="0.709" stop-color="#ff9c00"/><stop offset="0.936" stop-color="#ff5000"/><stop offset="1.000" stop-color="#ff4300"/></linearGradient><linearGradient id="t24" gradientUnits="userSpaceOnUse" x1="1274" x2="1680" y1="0" y2="0"><stop offset="0.000" stop-color="#00ff4a"/><stop offset="0.276" stop-color="#08ff28"/><stop offset="0.502" stop-color="#bcff00"/><stop offset="0.576" stop-color="#fff800"/><stop offset="0.704" stop-color="#ff9c00"/><stop offset="0.931" stop-color="#ff5000"/><stop offset="1.000" stop-color="#ff4200"/></linearGradient><linearGradient id="t25" gradientUnits="userSpaceOnUse" x1="1274" x2="1680" y1="0" y2="0"><stop offset="0.000" stop-color="#00ff4c"/><stop offset="0.271" stop-color="#06ff2a"/><stop offset="0.498" stop-color="#baff02"/><stop offset="0.571" stop-color="#fff900"/><stop offset="0.695" stop-color="#ff9f00"/><stop offset="0.916" stop-color="#ff5200"/><stop offset="1.000" stop-color="#ff4100"/></linearGradient><linearGradient id="t26" gradientUnits="userSpaceOnUse" x1="1274" x2="1680" y1="0" y2="0"><stop offset="0.000" stop-color="#00ff4e"/><stop offset="0.271" stop-color="#08ff2c"/><stop offset="0.498" stop-color="#beff04"/><stop offset="0.567" stop-color="#fffa00"/><stop offset="0.690" stop-color="#ff9f00"/><stop offset="0.906" stop-color="#ff5300"/><stop offset="1.000" stop-color="#ff3f00"/></linearGradient><linearGradient id="t27" gradientUnits="userSpaceOnUse" x1="1274" x2="1680" y1="0" y2="0"><stop offset="0.000" stop-color="#00ff4f"/><stop offset="0.266" stop-color="#06ff2f"/><stop offset="0.488" stop-color="#b8ff08"/><stop offset="0.567" stop-color="#fff600"/><stop offset="0.695" stop-color="#ff9a00"/><stop offset="0.921" stop-color="#ff4e00"/><stop offset="1.000" stop-color="#ff3e00"/></linearGradient><linearGradient id="t28" gradientUnits="userSpaceOnUse" x1="1274" x2="1680" y1="0" y2="0"><stop offset="0.000" stop-color="#00ff51"/><stop offset="0.266" stop-color="#07ff30"/><stop offset="0.488" stop-color="#bbff0a"/><stop offset="0.562" stop-color="#fff700"/><stop offset="0.685" stop-color="#ff9c00"/><stop offset="0.906" stop-color="#ff5000"/><stop offset="1.000" stop-color="#ff3d00"/></linearGradient><linearGradient id="t29" gradientUnits="userSpaceOnUse" x1="1274" x2="1680" y1="0" y2="0"><stop offset="0.000" stop-color="#00ff53"/><stop offset="0.266" stop-color="#08ff32"/><stop offset="0.488" stop-color="#beff0c"/><stop offset="0.557" stop-color="#fff800"/><stop offset="0.680" stop-color="#ff9c00"/><stop offset="0.897" stop-color="#ff5000"/><stop offset="1.000" stop-color="#ff3c00"/></linearGradient><linearGradient id="t30" gradientUnits="userSpaceOnUse" x1="1274" x2="1680" y1="0" y2="0"><stop offset="0.000" stop-color="#00ff55"/><stop offset="0.261" stop-color="#06ff35"/><stop offset="0.478" stop-color="#b8ff10"/><stop offset="0.552" stop-color="#fff900"/><stop offset="0.675" stop-color="#ff9c00"/><stop offset="0.892" stop-color="#ff5000"/><stop offset="1.000" stop-color="#ff3a00"/></linearGradient><linearGradient id="t31" gradientUnits="userSpaceOnUse" x1="1274" x2="1680" y1="0" y2="0"><stop offset="0.000" stop-color="#00ff57"/><stop offset="0.261" stop-color="#07ff37"/><stop offset="0.478" stop-color="#bbff12"/><stop offset="0.547" stop-color="#fffa02"/><stop offset="0.665" stop-color="#ff9f00"/><stop offset="0.877" stop-color="#ff5200"/><stop offset="1.000" stop-color="#ff3900"/></linearGradient><linearGradient id="t32" gradientUnits="userSpaceOnUse" x1="1274" x2="1680" y1="0" y2="0"><stop offset="0.000" stop-color="#00ff59"/><stop offset="0.256" stop-color="#05ff3a"/><stop offset="0.473" stop-color="#baff15"/><stop offset="0.547" stop-color="#fff604"/><stop offset="0.670" stop-color="#ff9a00"/><stop offset="0.887" stop-color="#ff4e00"/><stop offset="1.000" stop-color="#ff3800"/></linearGradient><linearGradient id="t33" gradientUnits="userSpaceOnUse" x1="1274" x2="1680" y1="0" y2="0"><stop offset="0.000" stop-color="#00ff5b"/><stop offset="0.256" stop-color="#07ff3c"/><stop offset="0.468" stop-color="#b9ff18"/><stop offset="0.542" stop-color="#fff707"/><stop offset="0.660" stop-color="#ff9d00"/><stop offset="0.872" stop-color="#ff5000"/><stop offset="1.000" stop-color="#ff3700"/></linearGradient><linearGradient id="t34" gradientUnits="userSpaceOnUse" x1="1274" x2="1680" y1="0" y2="0"><stop offset="0.000" stop-color="#00ff5d"/><stop offset="0.256" stop-color="#08ff3e"/><stop offset="0.468" stop-color="#bcff1a"/><stop offset="0.537" stop-color="#fff80b"/><stop offset="0.655" stop-color="#ff9d00"/><stop offset="0.867" stop-color="#ff5000"/><stop offset="1.000" stop-color="#ff3600"/></linearGradient><linearGradient id="t35" gradientUnits="userSpaceOnUse" x1="1274" x2="1680" y1="0" y2="0"><stop offset="0.000" stop-color="#00ff5f"/><stop offset="0.251" stop-color="#06ff41"/><stop offset="0.463" stop-color="#baff1d"/><stop offset="0.532" stop-color="#fff90e"/><stop offset="0.650" stop-color="#ff9d00"/><stop offset="0.857" stop-color="#ff5100"/><stop offset="1.000" stop-color="#ff3400"/></linearGradient><linearGradient id="t36" gradientUnits="userSpaceOnUse" x1="1274" x2="1680" y1="0" y2="0"><stop offset="0.000" stop-color="#00ff61"/><stop offset="0.251" stop-color="#07ff43"/><stop offset="0.458" stop-color="#b9ff20"/><stop offset="0.527" stop-color="#fffa11"/><stop offset="0.640" stop-color="#ff9f00"/><stop offset="0.842" stop-color="#ff5300"/><stop offset="1.000" stop-color="#ff3300"/></linearGradient><linearGradient id="t37" gradientUnits="userSpaceOnUse" x1="1274" x2="1680" y1="0" y2="0"><stop offset="0.000" stop-color="#00ff63"/><stop offset="0.251" stop-color="#08ff45"/><stop offset="0.458" stop-color="#bdff22"/><stop offset="0.522" stop-color="#fffb14"/><stop offset="0.635" stop-color="#ffa000"/><stop offset="0.837" stop-color="#ff5200"/><stop offset="1.000" stop-color="#ff3200"/></linearGradient><linearGradient id="t38" gradientUnits="userSpaceOnUse" x1="1274" x2="1680" y1="0" y2="0"><stop offset="0.000" stop-color="#00ff65"/><stop offset="0.246" stop-color="#06ff48"/><stop offset="0.453" stop-color="#bbff26"/><stop offset="0.522" stop-color="#fff716"/><stop offset="0.635" stop-color="#ff9d00"/><stop offset="0.837" stop-color="#ff5100"/><stop offset="1.000" stop-color="#ff3100"/></linearGradient><linearGradient id="t39" gradientUnits="userSpaceOnUse" x1="1274" x2="1680" y1="0" y2="0"><stop offset="0.000" stop-color="#00ff67"/><stop offset="0.246" stop-color="#08ff4a"/><stop offset="0.448" stop-color="#b9ff29"/><stop offset="0.517" stop-color="#fff81a"/><stop offset="0.631" stop-color="#ff9d00"/><stop offset="0.833" stop-color="#ff5000"/><stop offset="1.000" stop-color="#ff3000"/></linearGradient><linearGradient id="t40" gradientUnits="userSpaceOnUse" x1="1274" x2="1680" y1="0" y2="0"><stop offset="0.000" stop-color="#00ff69"/><stop offset="0.241" stop-color="#05ff4d"/><stop offset="0.443" stop-color="#b8ff2c"/><stop offset="0.512" stop-color="#fff91d"/><stop offset="0.626" stop-color="#ff9d01"/><stop offset="0.828" stop-color="#ff5000"/><stop offset="1.000" stop-color="#ff2e00"/></linearGradient><linearGradient id="t41" gradientUnits="userSpaceOnUse" x1="1274" x2="1680" y1="0" y2="0"><stop offset="0.000" stop-color="#00ff6b"/><stop offset="0.241" stop-color="#07ff50"/><stop offset="0.443" stop-color="#bcff2f"/><stop offset="0.507" stop-color="#fffa21"/><stop offset="0.621" stop-color="#ff9d03"/><stop offset="0.818" stop-color="#ff5100"/><stop offset="1.000" stop-color="#ff2d00"/></linearGradient><linearGradient id="t42" gradientUnits="userSpaceOnUse" x1="1274" x2="1680" y1="0" y2="0"><stop offset="0.000" stop-color="#00ff6e"/><stop offset="0.241" stop-color="#08ff52"/><stop offset="0.438" stop-color="#baff32"/><stop offset="0.502" stop-color="#fffb24"/><stop offset="0.611" stop-color="#ffa007"/><stop offset="0.803" stop-color="#ff5300"/><stop offset="1.000" stop-color="#ff2c00"/></linearGradient><linearGradient id="t43" gradientUnits="userSpaceOnUse" x1="1274" x2="1680" y1="0" y2="0"><stop offset="0.000" stop-color="#00ff70"/><stop offset="0.236" stop-color="#06ff55"/><stop offset="0.433" stop-color="#b8ff36"/><stop offset="0.502" stop-color="#fff626"/><stop offset="0.616" stop-color="#ff9a07"/><stop offset="0.818" stop-color="#ff4e00"/><stop offset="1.000" stop-color="#ff2b00"/></linearGradient><linearGradient id="t44" gradientUnits="userSpaceOnUse" x1="1274" x2="1680" y1="0" y2="0"><stop offset="0.000" stop-color="#00ff72"/><stop offset="0.236" stop-color="#07ff58"/><stop offset="0.433" stop-color="#bcff38"/><stop offset="0.498" stop-color="#fff72a"/><stop offset="0.606" stop-color="#ff9d0a"/><stop offset="0.798" stop-color="#ff5100"/><stop offset="1.000" stop-color="#ff2a00"/></linearGradient><linearGradient id="t45" gradientUnits="userSpaceOnUse" x1="1274" x2="1680" y1="0" y2="0"><stop offset="0.000" stop-color="#00ff75"/><stop offset="0.232" stop-color="#05ff5b"/><stop offset="0.429" stop-color="#bbff3c"/><stop offset="0.493" stop-color="#fff92e"/><stop offset="0.601" stop-color="#ff9d0d"/><stop offset="0.793" stop-color="#ff5100"/><stop offset="1.000" stop-color="#ff2900"/></linearGradient><linearGradient id="t46" gradientUnits="userSpaceOnUse" x1="1274" x2="1680" y1="0" y2="0"><stop offset="0.000" stop-color="#00ff77"/><stop offset="0.232" stop-color="#06ff5d"/><stop offset="0.424" stop-color="#b9ff3f"/><stop offset="0.488" stop-color="#fffa32"/><stop offset="0.596" stop-color="#ff9d0f"/><stop offset="0.768" stop-color="#ff5600"/><stop offset="1.000" stop-color="#ff2800"/></linearGradient><linearGradient id="t47" gradientUnits="userSpaceOnUse" x1="1274" x2="1680" y1="0" y2="0"><stop offset="0.000" stop-color="#00ff79"/><stop offset="0.232" stop-color="#08ff60"/><stop offset="0.424" stop-color="#bdff42"/><stop offset="0.483" stop-color="#fffb36"/><stop offset="0.586" stop-color="#ffa013"/><stop offset="0.764" stop-color="#ff5500"/><stop offset="1.000" stop-color="#ff2600"/></linearGradient><linearGradient id="t48" gradientUnits="userSpaceOnUse" x1="1274" x2="1680" y1="0" y2="0"><stop offset="0.000" stop-color="#00ff7c"/><stop offset="0.227" stop-color="#05ff63"/><stop offset="0.419" stop-color="#bbff46"/><stop offset="0.483" stop-color="#fff638"/><stop offset="0.591" stop-color="#ff9a13"/><stop offset="0.768" stop-color="#ff5200"/><stop offset="1.000" stop-color="#ff2500"/></linearGradient><linearGradient id="t49" gradientUnits="userSpaceOnUse" x1="1274" x2="1680" y1="0" y2="0"><stop offset="0.000" stop-color="#00ff7e"/><stop offset="0.227" stop-color="#07ff66"/><stop offset="0.414" stop-color="#b9ff4a"/><stop offset="0.478" stop-color="#fff73c"/><stop offset="0.581" stop-color="#ff9d17"/><stop offset="0.768" stop-color="#ff5000"/><stop offset="1.000" stop-color="#ff2400"/></linearGradient><linearGradient id="t50" gradientUnits="userSpaceOnUse" x1="1274" x2="1680" y1="0" y2="0"><stop offset="0.000" stop-color="#00ff81"/><stop offset="0.227" stop-color="#08ff69"/><stop offset="0.414" stop-color="#bdff4d"/><stop offset="0.473" stop-color="#fff840"/><stop offset="0.576" stop-color="#ff9d1a"/><stop offset="0.759" stop-color="#ff5100"/><stop offset="1.000" stop-color="#ff2300"/></linearGradient><linearGradient id="t51" gradientUnits="userSpaceOnUse" x1="1274" x2="1680" y1="0" y2="0"><stop offset="0.000" stop-color="#00ff83"/><stop offset="0.222" stop-color="#06ff6c"/><stop offset="0.409" stop-color="#bcff51"/><stop offset="0.468" stop-color="#fffa44"/><stop offset="0.571" stop-color="#ff9d1d"/><stop offset="0.754" stop-color="#ff5100"/><stop offset="1.000" stop-color="#ff2200"/></linearGradient><linearGradient id="t52" gradientUnits="userSpaceOnUse" x1="1274" x2="1680" y1="0" y2="0"><stop offset="0.000" stop-color="#00ff86"/><stop offset="0.222" stop-color="#07ff6f"/><stop offset="0.404" stop-color="#baff55"/><stop offset="0.463" stop-color="#fffb49"/><stop offset="0.562" stop-color="#ffa121"/><stop offset="0.739" stop-color="#ff5300"/><stop offset="1.000" stop-color="#ff2100"/></linearGradient><linearGradient id="t53" gradientUnits="userSpaceOnUse" x1="1274" x2="1680" y1="0" y2="0"><stop offset="0.000" stop-color="#00ff89"/><stop offset="0.217" stop-color="#05ff73"/><stop offset="0.399" stop-color="#b8ff59"/><stop offset="0.463" stop-color="#fff64a"/><stop offset="0.567" stop-color="#ff9a21"/><stop offset="0.749" stop-color="#ff4f00"/><stop offset="1.000" stop-color="#ff2000"/></linearGradient><linearGradient id="t54" gradientUnits="userSpaceOnUse" x1="1274" x2="1680" y1="0" y2="0"><stop offset="0.000" stop-color="#00ff8b"/><stop offset="0.217" stop-color="#07ff76"/><stop offset="0.399" stop-color="#bcff5c"/><stop offset="0.458" stop-color="#fff74f"/><stop offset="0.557" stop-color="#ff9d25"/><stop offset="0.734" stop-color="#ff5102"/><stop offset="1.000" stop-color="#ff1f00"/></linearGradient><linearGradient id="t55" gradientUnits="userSpaceOnUse" x1="1274" x2="1680" y1="0" y2="0"><stop offset="0.000" stop-color="#00ff8e"/><stop offset="0.217" stop-color="#08ff79"/><stop offset="0.394" stop-color="#bbff60"/><stop offset="0.453" stop-color="#fff853"/><stop offset="0.552" stop-color="#ff9d28"/><stop offset="0.729" stop-color="#ff5103"/><stop offset="1.000" stop-color="#ff1d00"/></linearGradient><linearGradient id="t56" gradientUnits="userSpaceOnUse" x1="1274" x2="1680" y1="0" y2="0"><stop offset="0.000" stop-color="#00ff91"/><stop offset="0.212" stop-color="#06ff7d"/><stop offset="0.389" stop-color="#b9ff64"/><stop offset="0.448" stop-color="#fff958"/><stop offset="0.547" stop-color="#ff9e2b"/><stop offset="0.719" stop-color="#ff5206"/><stop offset="1.000" stop-color="#ff1c00"/></linearGradient><linearGradient id="t57" gradientUnits="userSpaceOnUse" x1="1274" x2="1680" y1="0" y2="0"><stop offset="0.000" stop-color="#00ff94"/><stop offset="0.212" stop-color="#07ff80"/><stop offset="0.389" stop-color="#bdff68"/><stop offset="0.443" stop-color="#fffb5d"/><stop offset="0.542" stop-color="#ff9e2e"/><stop offset="0.714" stop-color="#ff5107"/><stop offset="1.000" stop-color="#ff1b00"/></linearGradient><linearGradient id="t58" gradientUnits="userSpaceOnUse" x1="1274" x2="1680" y1="0" y2="0"><stop offset="0.000" stop-color="#00ff97"/><stop offset="0.207" stop-color="#04ff84"/><stop offset="0.379" stop-color="#b5ff6d"/><stop offset="0.438" stop-color="#fffc62"/><stop offset="0.532" stop-color="#ffa133"/><stop offset="0.700" stop-color="#ff540b"/><stop offset="1.000" stop-color="#ff1a00"/></linearGradient><linearGradient id="t59" gradientUnits="userSpaceOnUse" x1="1274" x2="1680" y1="0" y2="0"><stop offset="0.000" stop-color="#00ff9a"/><stop offset="0.207" stop-color="#06ff87"/><stop offset="0.379" stop-color="#b9ff71"/><stop offset="0.438" stop-color="#fff764"/><stop offset="0.537" stop-color="#ff9a33"/><stop offset="0.709" stop-color="#ff4f0a"/><stop offset="1.000" stop-color="#ff1900"/></linearGradient><linearGradient id="t60" gradientUnits="userSpaceOnUse" x1="1274" x2="1680" y1="0" y2="0"><stop offset="0.000" stop-color="#00ff9d"/><stop offset="0.207" stop-color="#08ff8a"/><stop offset="0.379" stop-color="#beff75"/><stop offset="0.433" stop-color="#fff869"/><stop offset="0.527" stop-color="#ff9e38"/><stop offset="0.695" stop-color="#ff510e"/><stop offset="0.936" stop-color="#ff2000"/><stop offset="1.000" stop-color="#ff1800"/></linearGradient><linearGradient id="t61" gradientUnits="userSpaceOnUse" x1="1274" x2="1680" y1="0" y2="0"><stop offset="0.000" stop-color="#00ffa0"/><stop offset="0.202" stop-color="#05ff8e"/><stop offset="0.369" stop-color="#b6ff7a"/><stop offset="0.429" stop-color="#fff96e"/><stop offset="0.522" stop-color="#ff9e3b"/><stop offset="0.690" stop-color="#ff5110"/><stop offset="0.916" stop-color="#ff2200"/><stop offset="1.000" stop-color="#ff1700"/></linearGradient><linearGradient id="t62" gradientUnits="userSpaceOnUse" x1="1274" x2="1680" y1="0" y2="0"><stop offset="0.000" stop-color="#00ffa3"/><stop offset="0.202" stop-color="#07ff92"/><stop offset="0.369" stop-color="#baff7e"/><stop offset="0.424" stop-color="#fffa73"/><stop offset="0.517" stop-color="#ff9e3e"/><stop offset="0.680" stop-color="#ff5212"/><stop offset="0.911" stop-color="#ff2100"/><stop offset="1.000" stop-color="#ff1600"/></linearGradient><linearGradient id="t63" gradientUnits="userSpaceOnUse" x1="1274" x2="1680" y1="0" y2="0"><stop offset="0.000" stop-color="#00ffa6"/><stop offset="0.197" stop-color="#04ff96"/><stop offset="0.365" stop-color="#b8ff83"/><stop offset="0.419" stop-color="#fffc79"/><stop offset="0.507" stop-color="#ffa144"/><stop offset="0.665" stop-color="#ff5516"/><stop offset="0.901" stop-color="#ff2100"/><stop offset="1.000" stop-color="#ff1500"/></linearGradient><linearGradient id="t64" gradientUnits="userSpaceOnUse" x1="1274" x2="1680" y1="0" y2="0"><stop offset="0.000" stop-color="#00ffaa"/><stop offset="0.197" stop-color="#06ff9a"/><stop offset="0.360" stop-color="#b6ff87"/><stop offset="0.419" stop-color="#fff67b"/><stop offset="0.512" stop-color="#ff9a43"/><stop offset="0.680" stop-color="#ff4e15"/><stop offset="0.916" stop-color="#ff1e00"/><stop offset="1.000" stop-color="#ff1400"/></linearGradient><linearGradient id="t65" gradientUnits="userSpaceOnUse" x1="1274" x2="1680" y1="0" y2="0"><stop offset="0.000" stop-color="#00ffad"/><stop offset="0.197" stop-color="#07ff9e"/><stop offset="0.360" stop-color="#bbff8c"/><stop offset="0.414" stop-color="#fff880"/><stop offset="0.502" stop-color="#ff9e49"/><stop offset="0.660" stop-color="#ff5219"/><stop offset="0.916" stop-color="#ff1d00"/><stop offset="1.000" stop-color="#ff1300"/></linearGradient><linearGradient id="t66" gradientUnits="userSpaceOnUse" x1="1274" x2="1680" y1="0" y2="0"><stop offset="0.000" stop-color="#00ffb0"/><stop offset="0.192" stop-color="#05ffa2"/><stop offset="0.355" stop-color="#b9ff91"/><stop offset="0.409" stop-color="#fff986"/><stop offset="0.498" stop-color="#ff9e4c"/><stop offset="0.655" stop-color="#ff521c"/><stop offset="0.921" stop-color="#ff1b00"/><stop offset="1.000" stop-color="#ff1200"/></linearGradient><linearGradient id="t67" gradientUnits="userSpaceOnUse" x1="1274" x2="1680" y1="0" y2="0"><stop offset="0.000" stop-color="#00ffb4"/><stop offset="0.192" stop-color="#06ffa6"/><stop offset="0.350" stop-color="#b7ff96"/><stop offset="0.404" stop-color="#fffa8c"/><stop offset="0.493" stop-color="#ff9e50"/><stop offset="0.650" stop-color="#ff511e"/><stop offset="0.926" stop-color="#ff1900"/><stop offset="1.000" stop-color="#ff1100"/></linearGradient><linearGradient id="t68" gradientUnits="userSpaceOnUse" x1="1274" x2="1680" y1="0" y2="0"><stop offset="0.000" stop-color="#00ffb7"/><stop offset="0.192" stop-color="#08ffaa"/><stop offset="0.350" stop-color="#bbff9a"/><stop offset="0.399" stop-color="#fffc92"/><stop offset="0.483" stop-color="#ffa256"/><stop offset="0.631" stop-color="#ff5623"/><stop offset="0.921" stop-color="#ff1900"/><stop offset="1.000" stop-color="#ff1000"/></linearGradient><linearGradient id="t69" gradientUnits="userSpaceOnUse" x1="1274" x2="1680" y1="0" y2="0"><stop offset="0.000" stop-color="#00ffbb"/><stop offset="0.187" stop-color="#05ffae"/><stop offset="0.345" stop-color="#b9ffa0"/><stop offset="0.399" stop-color="#fff694"/><stop offset="0.488" stop-color="#ff9b55"/><stop offset="0.645" stop-color="#ff4f21"/><stop offset="0.936" stop-color="#ff1600"/><stop offset="1.000" stop-color="#ff0f00"/></linearGradient><linearGradient id="t70" gradientUnits="userSpaceOnUse" x1="1274" x2="1680" y1="0" y2="0"><stop offset="0.000" stop-color="#00ffbf"/><stop offset="0.187" stop-color="#07ffb3"/><stop offset="0.340" stop-color="#b7ffa5"/><stop offset="0.394" stop-color="#fff79a"/><stop offset="0.483" stop-color="#ff9b59"/><stop offset="0.640" stop-color="#ff4e23"/><stop offset="0.936" stop-color="#ff1500"/><stop offset="1.000" stop-color="#ff0e00"/></linearGradient><linearGradient id="t71" gradientUnits="userSpaceOnUse" x1="1274" x2="1680" y1="0" y2="0"><stop offset="0.000" stop-color="#00ffc2"/><stop offset="0.182" stop-color="#04ffb7"/><stop offset="0.335" stop-color="#b5ffaa"/><stop offset="0.389" stop-color="#fff9a0"/><stop offset="0.473" stop-color="#ff9e5f"/><stop offset="0.621" stop-color="#ff5229"/><stop offset="0.921" stop-color="#ff1500"/><stop offset="1.000" stop-color="#ff0d00"/></linearGradient><linearGradient id="t72" gradientUnits="userSpaceOnUse" x1="1274" x2="1680" y1="0" y2="0"><stop offset="0.000" stop-color="#00ffc6"/><stop offset="0.182" stop-color="#06ffbc"/><stop offset="0.335" stop-color="#baffaf"/><stop offset="0.384" stop-color="#fffaa7"/><stop offset="0.468" stop-color="#ff9e64"/><stop offset="0.616" stop-color="#ff522b"/><stop offset="0.916" stop-color="#ff1500"/><stop offset="1.000" stop-color="#ff0c00"/></linearGradient><linearGradient id="t73" gradientUnits="userSpaceOnUse" x1="1274" x2="1680" y1="0" y2="0"><stop offset="0.000" stop-color="#00ffca"/><stop offset="0.182" stop-color="#08ffc0"/><stop offset="0.330" stop-color="#b8ffb5"/><stop offset="0.379" stop-color="#fffcae"/><stop offset="0.463" stop-color="#ff9f68"/><stop offset="0.611" stop-color="#ff522d"/><stop offset="0.911" stop-color="#ff1400"/><stop offset="1.000" stop-color="#ff0b00"/></linearGradient><linearGradient id="t74" gradientUnits="userSpaceOnUse" x1="1274" x2="1680" y1="0" y2="0"><stop offset="0.000" stop-color="#00ffce"/><stop offset="0.177" stop-color="#05ffc5"/><stop offset="0.325" stop-color="#b6ffbb"/><stop offset="0.379" stop-color="#fff5af"/><stop offset="0.463" stop-color="#ff9b69"/><stop offset="0.611" stop-color="#ff4f2f"/><stop offset="0.911" stop-color="#ff1300"/><stop offset="1.000" stop-color="#ff0a00"/></linearGradient><linearGradient id="t75" gradientUnits="userSpaceOnUse" x1="1274" x2="1680" y1="0" y2="0"><stop offset="0.000" stop-color="#00ffd2"/><stop offset="0.177" stop-color="#06ffca"/><stop offset="0.325" stop-color="#bbffc0"/><stop offset="0.374" stop-color="#fff7b6"/><stop offset="0.458" stop-color="#ff9b6d"/><stop offset="0.606" stop-color="#ff4f31"/><stop offset="0.906" stop-color="#ff1201"/><stop offset="1.000" stop-color="#ff0900"/></linearGradient><linearGradient id="t76" gradientUnits="userSpaceOnUse" x1="1274" x2="1680" y1="0" y2="0"><stop offset="0.000" stop-color="#00ffd6"/><stop offset="0.177" stop-color="#08ffcf"/><stop offset="0.320" stop-color="#b9ffc6"/><stop offset="0.369" stop-color="#fff8be"/><stop offset="0.448" stop-color="#ff9f75"/><stop offset="0.591" stop-color="#ff5236"/><stop offset="0.877" stop-color="#ff1505"/><stop offset="1.000" stop-color="#ff0800"/></linearGradient><linearGradient id="t77" gradientUnits="userSpaceOnUse" x1="1274" x2="1680" y1="0" y2="0"><stop offset="0.000" stop-color="#00ffdb"/><stop offset="0.172" stop-color="#05ffd4"/><stop offset="0.315" stop-color="#b7ffcd"/><stop offset="0.365" stop-color="#fffac5"/><stop offset="0.443" stop-color="#ff9f79"/><stop offset="0.581" stop-color="#ff533a"/><stop offset="0.862" stop-color="#ff1607"/><stop offset="1.000" stop-color="#ff0700"/></linearGradient><linearGradient id="t78" gradientUnits="userSpaceOnUse" x1="1274" x2="1680" y1="0" y2="0"><stop offset="0.000" stop-color="#00ffdf"/><stop offset="0.172" stop-color="#07ffd9"/><stop offset="0.315" stop-color="#bcffd3"/><stop offset="0.360" stop-color="#fffccd"/><stop offset="0.438" stop-color="#ff9f7e"/><stop offset="0.576" stop-color="#ff523d"/><stop offset="0.857" stop-color="#ff1508"/><stop offset="1.000" stop-color="#ff0600"/></linearGradient><linearGradient id="t79" gradientUnits="userSpaceOnUse" x1="1274" x2="1680" y1="0" y2="0"><stop offset="0.000" stop-color="#00ffe3"/><stop offset="0.167" stop-color="#04ffdf"/><stop offset="0.310" stop-color="#b9ffd9"/><stop offset="0.360" stop-color="#fff5ce"/><stop offset="0.438" stop-color="#ff9b7f"/><stop offset="0.581" stop-color="#ff4e3c"/><stop offset="0.872" stop-color="#ff1208"/><stop offset="1.000" stop-color="#ff0500"/></linearGradient><linearGradient id="t80" gradientUnits="userSpaceOnUse" x1="1274" x2="1680" y1="0" y2="0"><stop offset="0.000" stop-color="#00ffe8"/><stop offset="0.167" stop-color="#06ffe4"/><stop offset="0.305" stop-color="#b7ffdf"/><stop offset="0.355" stop-color="#fff7d6"/><stop offset="0.433" stop-color="#ff9b84"/><stop offset="0.571" stop-color="#ff5041"/><stop offset="0.852" stop-color="#ff130b"/><stop offset="1.000" stop-color="#ff0400"/></linearGradient><linearGradient id="t81" gradientUnits="userSpaceOnUse" x1="1274" x2="1680" y1="0" y2="0"><stop offset="0.000" stop-color="#00ffed"/><stop offset="0.167" stop-color="#08ffea"/><stop offset="0.305" stop-color="#bdffe6"/><stop offset="0.350" stop-color="#fff8de"/><stop offset="0.424" stop-color="#ff9f8d"/><stop offset="0.557" stop-color="#ff5347"/><stop offset="0.828" stop-color="#ff150e"/><stop offset="1.000" stop-color="#ff0300"/></linearGradient><linearGradient id="t82" gradientUnits="userSpaceOnUse" x1="1274" x2="1680" y1="0" y2="0"><stop offset="0.000" stop-color="#00fff1"/><stop offset="0.163" stop-color="#05ffef"/><stop offset="0.300" stop-color="#baffed"/><stop offset="0.345" stop-color="#fffae7"/><stop offset="0.419" stop-color="#ff9f92"/><stop offset="0.552" stop-color="#ff5249"/><stop offset="0.818" stop-color="#ff1510"/><stop offset="1.000" stop-color="#ff0200"/></linearGradient><linearGradient id="t83" gradientUnits="userSpaceOnUse" x1="1274" x2="1680" y1="0" y2="0"><stop offset="0.000" stop-color="#00fff6"/><stop offset="0.163" stop-color="#07fff5"/><stop offset="0.296" stop-color="#b8fff4"/><stop offset="0.340" stop-color="#fffbf0"/><stop offset="0.414" stop-color="#ff9f97"/><stop offset="0.542" stop-color="#ff534e"/><stop offset="0.803" stop-color="#ff1613"/><stop offset="1.000" stop-color="#ff0100"/></linearGradient><linearGradient id="t84" gradientUnits="userSpaceOnUse" x1="1274" x2="1680" y1="0" y2="0"><stop offset="0.000" stop-color="#00fffb"/><stop offset="0.158" stop-color="#03fffb"/><stop offset="0.291" stop-color="#b6fffb"/><stop offset="0.335" stop-color="#fffdf9"/><stop offset="0.404" stop-color="#ffa4a1"/><stop offset="0.527" stop-color="#ff5755"/><stop offset="0.773" stop-color="#ff1918"/><stop offset="1.000" stop-color="#ff0000"/></linearGradient><linearGradient id="t85" gradientUnits="userSpaceOnUse" x1="1274" x2="1680" y1="0" y2="0"><stop offset="0.000" stop-color="#00feff"/><stop offset="0.158" stop-color="#05fdff"/><stop offset="0.291" stop-color="#b9fcff"/><stop offset="0.335" stop-color="#fff6f9"/><stop offset="0.409" stop-color="#ff9b9e"/><stop offset="0.537" stop-color="#ff5052"/><stop offset="0.798" stop-color="#ff1415"/><stop offset="1.000" stop-color="#ff0000"/></linearGradient><linearGradient id="t86" gradientUnits="userSpaceOnUse" x1="1274" x2="1680" y1="0" y2="0"><stop offset="0.000" stop-color="#00f9ff"/><stop offset="0.158" stop-color="#07f7ff"/><stop offset="0.291" stop-color="#b9f5ff"/><stop offset="0.335" stop-color="#ffeffa"/><stop offset="0.409" stop-color="#ff979f"/><stop offset="0.537" stop-color="#ff4e53"/><stop offset="0.798" stop-color="#ff1316"/><stop offset="1.000" stop-color="#ff0001"/></linearGradient><linearGradient id="t87" gradientUnits="userSpaceOnUse" x1="1274" x2="1680" y1="0" y2="0"><stop offset="0.000" stop-color="#00f4ff"/><stop offset="0.153" stop-color="#04f1ff"/><stop offset="0.291" stop-color="#baeeff"/><stop offset="0.335" stop-color="#ffe9fa"/><stop offset="0.409" stop-color="#ff93a0"/><stop offset="0.542" stop-color="#ff4a52"/><stop offset="0.808" stop-color="#ff1016"/><stop offset="1.000" stop-color="#ff0001"/></linearGradient><linearGradient id="t88" gradientUnits="userSpaceOnUse" x1="1274" x2="1680" y1="0" y2="0"><stop offset="0.000" stop-color="#00efff"/><stop offset="0.153" stop-color="#06ebff"/><stop offset="0.291" stop-color="#bae7ff"/><stop offset="0.335" stop-color="#ffe2fb"/><stop offset="0.409" stop-color="#ff8fa1"/><stop offset="0.542" stop-color="#ff4753"/><stop offset="0.808" stop-color="#ff0f16"/><stop offset="1.000" stop-color="#ff0002"/></linearGradient><linearGradient id="t89" gradientUnits="userSpaceOnUse" x1="1274" x2="1680" y1="0" y2="0"><stop offset="0.000" stop-color="#00eaff"/><stop offset="0.153" stop-color="#08e6ff"/><stop offset="0.291" stop-color="#bae1ff"/><stop offset="0.335" stop-color="#ffdcfc"/><stop offset="0.409" stop-color="#ff8ba2"/><stop offset="0.542" stop-color="#ff4555"/><stop offset="0.808" stop-color="#ff0e17"/><stop offset="1.000" stop-color="#ff0003"/></linearGradient><linearGradient id="t90" gradientUnits="userSpaceOnUse" x1="1274" x2="1680" y1="0" y2="0"><stop offset="0.000" stop-color="#00e5ff"/><stop offset="0.148" stop-color="#04e0ff"/><stop offset="0.291" stop-color="#badaff"/><stop offset="0.335" stop-color="#ffd5fc"/><stop offset="0.409" stop-color="#ff87a3"/><stop offset="0.542" stop-color="#ff4356"/><stop offset="0.808" stop-color="#ff0c18"/><stop offset="1.000" stop-color="#ff0003"/></linearGradient><linearGradient id="t91" gradientUnits="userSpaceOnUse" x1="1274" x2="1680" y1="0" y2="0"><stop offset="0.000" stop-color="#00e0ff"/><stop offset="0.148" stop-color="#06dbff"/><stop offset="0.291" stop-color="#bbd4ff"/><stop offset="0.335" stop-color="#ffcffd"/><stop offset="0.414" stop-color="#ff7fa0"/><stop offset="0.552" stop-color="#ff3d53"/><stop offset="0.833" stop-color="#ff0815"/><stop offset="1.000" stop-color="#ff0004"/></linearGradient><linearGradient id="t92" gradientUnits="userSpaceOnUse" x1="1274" x2="1680" y1="0" y2="0"><stop offset="0.000" stop-color="#00dcff"/><stop offset="0.148" stop-color="#08d6ff"/><stop offset="0.291" stop-color="#bbcdff"/><stop offset="0.340" stop-color="#ffc2f5"/><stop offset="0.419" stop-color="#ff789c"/><stop offset="0.562" stop-color="#ff3850"/><stop offset="0.852" stop-color="#ff0514"/><stop offset="1.000" stop-color="#ff0005"/></linearGradient><linearGradient id="t93" gradientUnits="userSpaceOnUse" x1="1274" x2="1680" y1="0" y2="0"><stop offset="0.000" stop-color="#00d7ff"/><stop offset="0.143" stop-color="#05d1ff"/><stop offset="0.291" stop-color="#bbc7ff"/><stop offset="0.340" stop-color="#ffbcf6"/><stop offset="0.424" stop-color="#ff719a"/><stop offset="0.571" stop-color="#ff334e"/><stop offset="0.872" stop-color="#ff0212"/><stop offset="1.000" stop-color="#ff0005"/></linearGradient><linearGradient id="t94" gradientUnits="userSpaceOnUse" x1="1274" x2="1680" y1="0" y2="0"><stop offset="0.000" stop-color="#00d3ff"/><stop offset="0.143" stop-color="#06ccff"/><stop offset="0.291" stop-color="#bbc1ff"/><stop offset="0.340" stop-color="#ffb7f6"/><stop offset="0.424" stop-color="#ff6d9b"/><stop offset="0.571" stop-color="#ff314f"/><stop offset="0.872" stop-color="#ff0113"/><stop offset="1.000" stop-color="#ff0006"/></linearGradient><linearGradient id="t95" gradientUnits="userSpaceOnUse" x1="1274" x2="1680" y1="0" y2="0"><stop offset="0.000" stop-color="#00ceff"/><stop offset="0.143" stop-color="#08c7ff"/><stop offset="0.291" stop-color="#bcbcff"/><stop offset="0.340" stop-color="#ffb1f7"/><stop offset="0.424" stop-color="#ff6a9c"/><stop offset="0.571" stop-color="#ff2f50"/><stop offset="0.872" stop-color="#ff0013"/><stop offset="1.000" stop-color="#ff0006"/></linearGradient><linearGradient id="t96" gradientUnits="userSpaceOnUse" x1="1274" x2="1680" y1="0" y2="0"><stop offset="0.000" stop-color="#00caff"/><stop offset="0.138" stop-color="#05c2ff"/><stop offset="0.291" stop-color="#bcb6ff"/><stop offset="0.340" stop-color="#ffacf8"/><stop offset="0.424" stop-color="#ff669c"/><stop offset="0.571" stop-color="#ff2d51"/><stop offset="0.872" stop-color="#ff0014"/><stop offset="1.000" stop-color="#ff0007"/></linearGradient><linearGradient id="t97" gradientUnits="userSpaceOnUse" x1="1274" x2="1680" y1="0" y2="0"><stop offset="0.000" stop-color="#00c6ff"/><stop offset="0.138" stop-color="#07bdff"/><stop offset="0.291" stop-color="#bcb0ff"/><stop offset="0.340" stop-color="#ffa6f8"/><stop offset="0.424" stop-color="#ff639d"/><stop offset="0.571" stop-color="#ff2b52"/><stop offset="0.872" stop-color="#ff0015"/><stop offset="1.000" stop-color="#ff0008"/></linearGradient><linearGradient id="t98" gradientUnits="userSpaceOnUse" x1="1274" x2="1680" y1="0" y2="0"><stop offset="0.000" stop-color="#00c2ff"/><stop offset="0.138" stop-color="#08b8ff"/><stop offset="0.291" stop-color="#bcabff"/><stop offset="0.340" stop-color="#ffa1f9"/><stop offset="0.424" stop-color="#ff609e"/><stop offset="0.571" stop-color="#ff2953"/><stop offset="0.872" stop-color="#ff0016"/><stop offset="1.000" stop-color="#ff0008"/></linearGradient><linearGradient id="t99" gradientUnits="userSpaceOnUse" x1="1274" x2="1680" y1="0" y2="0"><stop offset="0.000" stop-color="#00bdff"/><stop offset="0.133" stop-color="#05b4ff"/><stop offset="0.286" stop-color="#b6a6ff"/><stop offset="0.340" stop-color="#ff9cf9"/><stop offset="0.424" stop-color="#ff5c9f"/><stop offset="0.571" stop-color="#ff2754"/><stop offset="0.872" stop-color="#ff0016"/><stop offset="1.000" stop-color="#ff0009"/></linearGradient><linearGradient id="t100" gradientUnits="userSpaceOnUse" x1="1274" x2="1680" y1="0" y2="0"><stop offset="0.000" stop-color="#00b9ff"/><stop offset="0.133" stop-color="#07b0ff"/><stop offset="0.291" stop-color="#bda0ff"/><stop offset="0.340" stop-color="#ff97fa"/><stop offset="0.424" stop-color="#ff59a0"/><stop offset="0.576" stop-color="#ff2353"/><stop offset="0.867" stop-color="#ff0018"/><stop offset="1.000" stop-color="#ff000a"/></linearGradient><linearGradient id="t101" gradientUnits="userSpaceOnUse" x1="1274" x2="1680" y1="0" y2="0"><stop offset="0.000" stop-color="#00b5ff"/><stop offset="0.133" stop-color="#09abff"/><stop offset="0.291" stop-color="#bd9bff"/><stop offset="0.340" stop-color="#ff92fa"/><stop offset="0.429" stop-color="#ff539d"/><stop offset="0.586" stop-color="#ff1f50"/><stop offset="0.862" stop-color="#ff0019"/><stop offset="1.000" stop-color="#ff000a"/></linearGradient><linearGradient id="t102" gradientUnits="userSpaceOnUse" x1="1274" x2="1680" y1="0" y2="0"><stop offset="0.000" stop-color="#00b1ff"/><stop offset="0.128" stop-color="#06a7ff"/><stop offset="0.286" stop-color="#b796ff"/><stop offset="0.340" stop-color="#ff8dfb"/><stop offset="0.429" stop-color="#ff509e"/><stop offset="0.586" stop-color="#ff1d51"/><stop offset="0.857" stop-color="#ff001a"/><stop offset="1.000" stop-color="#ff000b"/></linearGradient><linearGradient id="t103" gradientUnits="userSpaceOnUse" x1="1274" x2="1680" y1="0" y2="0"><stop offset="0.000" stop-color="#00adff"/><stop offset="0.128" stop-color="#07a3ff"/><stop offset="0.291" stop-color="#bd91ff"/><stop offset="0.340" stop-color="#ff88fb"/><stop offset="0.429" stop-color="#ff4d9f"/><stop offset="0.586" stop-color="#ff1c52"/><stop offset="0.847" stop-color="#ff001c"/><stop offset="1.000" stop-color="#ff000b"/></linearGradient><linearGradient id="t104" gradientUnits="userSpaceOnUse" x1="1274" x2="1680" y1="0" y2="0"><stop offset="0.000" stop-color="#00aaff"/><stop offset="0.123" stop-color="#049fff"/><stop offset="0.286" stop-color="#b78dff"/><stop offset="0.340" stop-color="#ff83fc"/><stop offset="0.429" stop-color="#ff4aa0"/><stop offset="0.586" stop-color="#ff1a53"/><stop offset="0.837" stop-color="#ff001e"/><stop offset="1.000" stop-color="#ff000c"/></linearGradient><linearGradient id="t105" gradientUnits="userSpaceOnUse" x1="1274" x2="1680" y1="0" y2="0"><stop offset="0.000" stop-color="#00a6ff"/><stop offset="0.123" stop-color="#069bff"/><stop offset="0.286" stop-color="#b788ff"/><stop offset="0.340" stop-color="#ff7efc"/><stop offset="0.429" stop-color="#ff47a1"/><stop offset="0.586" stop-color="#ff1854"/><stop offset="0.828" stop-color="#ff0020"/><stop offset="1.000" stop-color="#ff000d"/></linearGradient><linearGradient id="t106" gradientUnits="userSpaceOnUse" x1="1274" x2="1680" y1="0" y2="0"><stop offset="0.000" stop-color="#00a2ff"/><stop offset="0.123" stop-color="#0797ff"/><stop offset="0.291" stop-color="#be82ff"/><stop offset="0.345" stop-color="#ff76f6"/><stop offset="0.438" stop-color="#ff409b"/><stop offset="0.606" stop-color="#ff124f"/><stop offset="0.837" stop-color="#ff0020"/><stop offset="1.000" stop-color="#ff000d"/></linearGradient><linearGradient id="t107" gradientUnits="userSpaceOnUse" x1="1274" x2="1680" y1="0" y2="0"><stop offset="0.000" stop-color="#009eff"/><stop offset="0.118" stop-color="#0593ff"/><stop offset="0.286" stop-color="#b87fff"/><stop offset="0.345" stop-color="#ff71f6"/><stop offset="0.438" stop-color="#ff3d9c"/><stop offset="0.606" stop-color="#ff1150"/><stop offset="0.833" stop-color="#ff0021"/><stop offset="1.000" stop-color="#ff000e"/></linearGradient><linearGradient id="t108" gradientUnits="userSpaceOnUse" x1="1274" x2="1680" y1="0" y2="0"><stop offset="0.000" stop-color="#009bff"/><stop offset="0.118" stop-color="#068fff"/><stop offset="0.286" stop-color="#b87aff"/><stop offset="0.345" stop-color="#ff6df7"/><stop offset="0.438" stop-color="#ff3a9c"/><stop offset="0.606" stop-color="#ff0f50"/><stop offset="0.837" stop-color="#ff0021"/><stop offset="1.000" stop-color="#ff000e"/></linearGradient><linearGradient id="t109" gradientUnits="userSpaceOnUse" x1="1274" x2="1680" y1="0" y2="0"><stop offset="0.000" stop-color="#0097ff"/><stop offset="0.118" stop-color="#088bff"/><stop offset="0.291" stop-color="#be75ff"/><stop offset="0.345" stop-color="#ff69f7"/><stop offset="0.438" stop-color="#ff379d"/><stop offset="0.606" stop-color="#ff0d51"/><stop offset="0.852" stop-color="#ff0020"/><stop offset="1.000" stop-color="#ff000f"/></linearGradient><linearGradient id="t110" gradientUnits="userSpaceOnUse" x1="1274" x2="1680" y1="0" y2="0"><stop offset="0.000" stop-color="#0093ff"/><stop offset="0.113" stop-color="#0588ff"/><stop offset="0.286" stop-color="#b871ff"/><stop offset="0.345" stop-color="#ff64f8"/><stop offset="0.438" stop-color="#ff349e"/><stop offset="0.606" stop-color="#ff0c52"/><stop offset="0.877" stop-color="#ff001d"/><stop offset="1.000" stop-color="#ff0010"/></linearGradient><linearGradient id="t111" gradientUnits="userSpaceOnUse" x1="1274" x2="1680" y1="0" y2="0"><stop offset="0.000" stop-color="#0090ff"/><stop offset="0.113" stop-color="#0684ff"/><stop offset="0.286" stop-color="#b96dff"/><stop offset="0.345" stop-color="#ff60f8"/><stop offset="0.443" stop-color="#ff309c"/><stop offset="0.616" stop-color="#ff0850"/><stop offset="0.970" stop-color="#ff0013"/><stop offset="1.000" stop-color="#ff0010"/></linearGradient><linearGradient id="t112" gradientUnits="userSpaceOnUse" x1="1274" x2="1680" y1="0" y2="0"><stop offset="0.000" stop-color="#008cff"/><stop offset="0.113" stop-color="#0881ff"/><stop offset="0.291" stop-color="#bf68ff"/><stop offset="0.345" stop-color="#ff5cf9"/><stop offset="0.443" stop-color="#ff2d9c"/><stop offset="0.616" stop-color="#ff0751"/><stop offset="0.970" stop-color="#ff0014"/><stop offset="1.000" stop-color="#ff0011"/></linearGradient><linearGradient id="t113" gradientUnits="userSpaceOnUse" x1="1274" x2="1680" y1="0" y2="0"><stop offset="0.000" stop-color="#0089ff"/><stop offset="0.108" stop-color="#057dff"/><stop offset="0.286" stop-color="#b965ff"/><stop offset="0.345" stop-color="#ff58f9"/><stop offset="0.443" stop-color="#ff2b9d"/><stop offset="0.616" stop-color="#ff0552"/><stop offset="0.970" stop-color="#ff0014"/><stop offset="1.000" stop-color="#ff0011"/></linearGradient><linearGradient id="t114" gradientUnits="userSpaceOnUse" x1="1274" x2="1680" y1="0" y2="0"><stop offset="0.000" stop-color="#0086ff"/><stop offset="0.108" stop-color="#077aff"/><stop offset="0.286" stop-color="#b961ff"/><stop offset="0.345" stop-color="#ff54f9"/><stop offset="0.443" stop-color="#ff289e"/><stop offset="0.616" stop-color="#ff0452"/><stop offset="0.970" stop-color="#ff0015"/><stop offset="1.000" stop-color="#ff0012"/></linearGradient><linearGradient id="t115" gradientUnits="userSpaceOnUse" x1="1274" x2="1680" y1="0" y2="0"><stop offset="0.000" stop-color="#0082ff"/><stop offset="0.108" stop-color="#0876ff"/><stop offset="0.286" stop-color="#ba5dff"/><stop offset="0.345" stop-color="#ff50fa"/><stop offset="0.443" stop-color="#ff269f"/><stop offset="0.621" stop-color="#ff0152"/><stop offset="0.980" stop-color="#ff0015"/><stop offset="1.000" stop-color="#ff0013"/></linearGradient><linearGradient id="t116" gradientUnits="userSpaceOnUse" x1="1274" x2="1680" y1="0" y2="0"><stop offset="0.000" stop-color="#007fff"/><stop offset="0.103" stop-color="#0573ff"/><stop offset="0.286" stop-color="#ba59ff"/><stop offset="0.345" stop-color="#ff4cfa"/><stop offset="0.443" stop-color="#ff23a0"/><stop offset="0.621" stop-color="#ff0052"/><stop offset="0.980" stop-color="#ff0015"/><stop offset="1.000" stop-color="#ff0013"/></linearGradient><linearGradient id="t117" gradientUnits="userSpaceOnUse" x1="1274" x2="1680" y1="0" y2="0"><stop offset="0.000" stop-color="#007cff"/><stop offset="0.103" stop-color="#0770ff"/><stop offset="0.286" stop-color="#ba55ff"/><stop offset="0.345" stop-color="#ff48fb"/><stop offset="0.443" stop-color="#ff20a0"/><stop offset="0.621" stop-color="#ff0053"/><stop offset="0.980" stop-color="#ff0016"/><stop offset="1.000" stop-color="#ff0014"/></linearGradient><linearGradient id="t118" gradientUnits="userSpaceOnUse" x1="1274" x2="1680" y1="0" y2="0"><stop offset="0.000" stop-color="#0079ff"/><stop offset="0.103" stop-color="#086dff"/><stop offset="0.286" stop-color="#ba51ff"/><stop offset="0.345" stop-color="#ff45fb"/><stop offset="0.448" stop-color="#ff1d9e"/><stop offset="0.631" stop-color="#ff0051"/><stop offset="1.000" stop-color="#ff0014"/></linearGradient><linearGradient id="t119" gradientUnits="userSpaceOnUse" x1="1274" x2="1680" y1="0" y2="0"><stop offset="0.000" stop-color="#0076ff"/><stop offset="0.099" stop-color="#066aff"/><stop offset="0.286" stop-color="#ba4dff"/><stop offset="0.345" stop-color="#ff41fc"/><stop offset="0.448" stop-color="#ff1a9f"/><stop offset="0.631" stop-color="#ff0052"/><stop offset="1.000" stop-color="#ff0015"/></linearGradient><linearGradient id="t120" gradientUnits="userSpaceOnUse" x1="1274" x2="1680" y1="0" y2="0"><stop offset="0.000" stop-color="#0072ff"/><stop offset="0.099" stop-color="#0767ff"/><stop offset="0.286" stop-color="#bb4aff"/><stop offset="0.350" stop-color="#ff3bf6"/><stop offset="0.453" stop-color="#ff179c"/><stop offset="0.635" stop-color="#ff0051"/><stop offset="1.000" stop-color="#ff0015"/></linearGradient><linearGradient id="t121" gradientUnits="userSpaceOnUse" x1="1274" x2="1680" y1="0" y2="0"><stop offset="0.000" stop-color="#006fff"/><stop offset="0.099" stop-color="#0863ff"/><stop offset="0.286" stop-color="#bb46ff"/><stop offset="0.350" stop-color="#ff37f6"/><stop offset="0.458" stop-color="#ff139a"/><stop offset="0.635" stop-color="#ff0052"/><stop offset="1.000" stop-color="#ff0016"/></linearGradient><linearGradient id="t122" gradientUnits="userSpaceOnUse" x1="1274" x2="1680" y1="0" y2="0"><stop offset="0.000" stop-color="#006cff"/><stop offset="0.094" stop-color="#0661ff"/><stop offset="0.286" stop-color="#bb42ff"/><stop offset="0.350" stop-color="#ff34f7"/><stop offset="0.458" stop-color="#ff119b"/><stop offset="0.631" stop-color="#ff0054"/><stop offset="1.000" stop-color="#ff0017"/></linearGradient><linearGradient id="t123" gradientUnits="userSpaceOnUse" x1="1274" x2="1680" y1="0" y2="0"><stop offset="0.000" stop-color="#0069ff"/><stop offset="0.094" stop-color="#075eff"/><stop offset="0.286" stop-color="#bb3fff"/><stop offset="0.350" stop-color="#ff31f7"/><stop offset="0.458" stop-color="#ff0e9c"/><stop offset="0.631" stop-color="#ff0055"/><stop offset="1.000" stop-color="#ff0017"/></linearGradient><linearGradient id="t124" gradientUnits="userSpaceOnUse" x1="1274" x2="1680" y1="0" y2="0"><stop offset="0.000" stop-color="#0066ff"/><stop offset="0.094" stop-color="#095bff"/><stop offset="0.286" stop-color="#bb3cff"/><stop offset="0.350" stop-color="#ff2df8"/><stop offset="0.458" stop-color="#ff0c9c"/><stop offset="0.650" stop-color="#ff0050"/><stop offset="1.000" stop-color="#ff0018"/></linearGradient><linearGradient id="t125" gradientUnits="userSpaceOnUse" x1="1274" x2="1680" y1="0" y2="0"><stop offset="0.000" stop-color="#0063ff"/><stop offset="0.089" stop-color="#0658ff"/><stop offset="0.286" stop-color="#bb38ff"/><stop offset="0.350" stop-color="#ff2af8"/><stop offset="0.458" stop-color="#ff0a9d"/><stop offset="0.650" stop-color="#ff0051"/><stop offset="1.000" stop-color="#ff0018"/></linearGradient><linearGradient id="t126" gradientUnits="userSpaceOnUse" x1="1274" x2="1680" y1="0" y2="0"><stop offset="0.000" stop-color="#0061ff"/><stop offset="0.089" stop-color="#0755ff"/><stop offset="0.286" stop-color="#bc35ff"/><stop offset="0.350" stop-color="#ff27f8"/><stop offset="0.458" stop-color="#ff089e"/><stop offset="0.650" stop-color="#ff0052"/><stop offset="1.000" stop-color="#ff0019"/></linearGradient><linearGradient id="t127" gradientUnits="userSpaceOnUse" x1="1274" x2="1680" y1="0" y2="0"><stop offset="0.000" stop-color="#005eff"/><stop offset="0.089" stop-color="#0952ff"/><stop offset="0.286" stop-color="#bc32ff"/><stop offset="0.350" stop-color="#ff23f9"/><stop offset="0.458" stop-color="#ff069f"/><stop offset="0.650" stop-color="#ff0053"/><stop offset="1.000" stop-color="#ff0019"/></linearGradient><linearGradient id="t128" gradientUnits="userSpaceOnUse" x1="1274" x2="1680" y1="0" y2="0"><stop offset="0.000" stop-color="#005bff"/><stop offset="0.084" stop-color="#0650ff"/><stop offset="0.286" stop-color="#bc2eff"/><stop offset="0.350" stop-color="#ff20f9"/><stop offset="0.463" stop-color="#ff039c"/><stop offset="0.660" stop-color="#ff0051"/><stop offset="1.000" stop-color="#ff001a"/></linearGradient><linearGradient id="t129" gradientUnits="userSpaceOnUse" x1="1274" x2="1680" y1="0" y2="0"><stop offset="0.000" stop-color="#0058ff"/><stop offset="0.084" stop-color="#084dff"/><stop offset="0.286" stop-color="#bc2bff"/><stop offset="0.350" stop-color="#ff1dfa"/><stop offset="0.463" stop-color="#ff009d"/><stop offset="0.660" stop-color="#ff0051"/><stop offset="1.000" stop-color="#ff001b"/></linearGradient><linearGradient id="t130" gradientUnits="userSpaceOnUse" x1="1274" x2="1680" y1="0" y2="0"><stop offset="0.000" stop-color="#0055ff"/><stop offset="0.084" stop-color="#094aff"/><stop offset="0.286" stop-color="#bc28ff"/><stop offset="0.350" stop-color="#ff1afa"/><stop offset="0.463" stop-color="#ff009e"/><stop offset="0.665" stop-color="#ff0051"/><stop offset="1.000" stop-color="#ff001b"/></linearGradient><linearGradient id="t131" gradientUnits="userSpaceOnUse" x1="1274" x2="1680" y1="0" y2="0"><stop offset="0.000" stop-color="#0053ff"/><stop offset="0.079" stop-color="#0748ff"/><stop offset="0.286" stop-color="#bc25ff"/><stop offset="0.350" stop-color="#ff17fa"/><stop offset="0.463" stop-color="#ff009f"/><stop offset="0.665" stop-color="#ff0052"/><stop offset="1.000" stop-color="#ff001c"/></linearGradient><linearGradient id="t132" gradientUnits="userSpaceOnUse" x1="1274" x2="1680" y1="0" y2="0"><stop offset="0.000" stop-color="#0050ff"/><stop offset="0.079" stop-color="#0845ff"/><stop offset="0.286" stop-color="#bd22ff"/><stop offset="0.350" stop-color="#ff14fb"/><stop offset="0.463" stop-color="#ff009f"/><stop offset="0.665" stop-color="#ff0052"/><stop offset="1.000" stop-color="#ff001c"/></linearGradient><linearGradient id="t133" gradientUnits="userSpaceOnUse" x1="1274" x2="1680" y1="0" y2="0"><stop offset="0.000" stop-color="#004dff"/><stop offset="0.079" stop-color="#0943ff"/><stop offset="0.286" stop-color="#bd1fff"/><stop offset="0.355" stop-color="#ff0ff6"/><stop offset="0.473" stop-color="#ff009a"/><stop offset="0.685" stop-color="#ff004e"/><stop offset="1.000" stop-color="#ff001d"/></linearGradient><linearGradient id="t134" gradientUnits="userSpaceOnUse" x1="1274" x2="1680" y1="0" y2="0"><stop offset="0.000" stop-color="#004bff"/><stop offset="0.074" stop-color="#0741ff"/><stop offset="0.286" stop-color="#bd1cff"/><stop offset="0.355" stop-color="#ff0cf6"/><stop offset="0.473" stop-color="#ff009b"/><stop offset="0.685" stop-color="#ff004f"/><stop offset="1.000" stop-color="#ff001d"/></linearGradient><linearGradient id="t135" gradientUnits="userSpaceOnUse" x1="1274" x2="1680" y1="0" y2="0"><stop offset="0.000" stop-color="#0048ff"/><stop offset="0.074" stop-color="#083eff"/><stop offset="0.286" stop-color="#bd19ff"/><stop offset="0.355" stop-color="#ff0af7"/><stop offset="0.473" stop-color="#ff009c"/><stop offset="0.685" stop-color="#ff004f"/><stop offset="1.000" stop-color="#ff001e"/></linearGradient><linearGradient id="t136" gradientUnits="userSpaceOnUse" x1="1274" x2="1680" y1="0" y2="0"><stop offset="0.000" stop-color="#0046ff"/><stop offset="0.074" stop-color="#093bff"/><stop offset="0.286" stop-color="#bd16ff"/><stop offset="0.355" stop-color="#ff07f7"/><stop offset="0.473" stop-color="#ff009c"/><stop offset="0.685" stop-color="#ff0050"/><stop offset="1.000" stop-color="#ff001e"/></linearGradient><linearGradient id="t137" gradientUnits="userSpaceOnUse" x1="1274" x2="1680" y1="0" y2="0"><stop offset="0.000" stop-color="#0043ff"/><stop offset="0.069" stop-color="#0739ff"/><stop offset="0.286" stop-color="#bd13ff"/><stop offset="0.355" stop-color="#ff04f7"/><stop offset="0.473" stop-color="#ff009d"/><stop offset="0.685" stop-color="#ff0051"/><stop offset="1.000" stop-color="#ff001f"/></linearGradient><linearGradient id="t138" gradientUnits="userSpaceOnUse" x1="1274" x2="1680" y1="0" y2="0"><stop offset="0.000" stop-color="#0041ff"/><stop offset="0.069" stop-color="#0837ff"/><stop offset="0.286" stop-color="#be11ff"/><stop offset="0.355" stop-color="#ff01f8"/><stop offset="0.478" stop-color="#ff009b"/><stop offset="0.695" stop-color="#ff004f"/><stop offset="1.000" stop-color="#ff001f"/></linearGradient><linearGradient id="t139" gradientUnits="userSpaceOnUse" x1="1274" x2="1680" y1="0" y2="0"><stop offset="0.000" stop-color="#003eff"/><stop offset="0.069" stop-color="#0934ff"/><stop offset="0.286" stop-color="#be0eff"/><stop offset="0.355" stop-color="#ff00f8"/><stop offset="0.478" stop-color="#ff009c"/><stop offset="0.695" stop-color="#ff0050"/><stop offset="1.000" stop-color="#ff0020"/></linearGradient><linearGradient id="t140" gradientUnits="userSpaceOnUse" x1="1274" x2="1680" y1="0" y2="0"><stop offset="0.000" stop-color="#003cff"/><stop offset="0.069" stop-color="#0b32ff"/><stop offset="0.286" stop-color="#be0bff"/><stop offset="0.355" stop-color="#ff00f8"/><stop offset="0.478" stop-color="#ff009c"/><stop offset="0.695" stop-color="#ff0050"/><stop offset="1.000" stop-color="#ff0020"/></linearGradient><linearGradient id="t141" gradientUnits="userSpaceOnUse" x1="1274" x2="1680" y1="0" y2="0"><stop offset="0.000" stop-color="#0039ff"/><stop offset="0.064" stop-color="#0830ff"/><stop offset="0.286" stop-color="#be08ff"/><stop offset="0.355" stop-color="#ff00f9"/><stop offset="0.478" stop-color="#ff009d"/><stop offset="0.695" stop-color="#ff0051"/><stop offset="1.000" stop-color="#ff0021"/></linearGradient><linearGradient id="t142" gradientUnits="userSpaceOnUse" x1="1274" x2="1680" y1="0" y2="0"><stop offset="0.000" stop-color="#0037ff"/><stop offset="0.064" stop-color="#0a2eff"/><stop offset="0.286" stop-color="#be06ff"/><stop offset="0.355" stop-color="#ff00f9"/><stop offset="0.478" stop-color="#ff009e"/><stop offset="0.695" stop-color="#ff0052"/><stop offset="1.000" stop-color="#ff0022"/></linearGradient><linearGradient id="t143" gradientUnits="userSpaceOnUse" x1="1274" x2="1680" y1="0" y2="0"><stop offset="0.000" stop-color="#0034ff"/><stop offset="0.064" stop-color="#0b2bff"/><stop offset="0.286" stop-color="#be03ff"/><stop offset="0.355" stop-color="#ff00f9"/><stop offset="0.478" stop-color="#ff009e"/><stop offset="0.700" stop-color="#ff0051"/><stop offset="1.000" stop-color="#ff0022"/></linearGradient><linearGradient id="t144" gradientUnits="userSpaceOnUse" x1="1274" x2="1680" y1="0" y2="0"><stop offset="0.000" stop-color="#0032ff"/><stop offset="0.059" stop-color="#092aff"/><stop offset="0.286" stop-color="#be01ff"/><stop offset="0.355" stop-color="#ff00fa"/><stop offset="0.478" stop-color="#ff009f"/><stop offset="0.700" stop-color="#ff0052"/><stop offset="1.000" stop-color="#ff0023"/></linearGradient><linearGradient id="t145" gradientUnits="userSpaceOnUse" x1="1274" x2="1680" y1="0" y2="0"><stop offset="0.000" stop-color="#0030ff"/><stop offset="0.059" stop-color="#0a27ff"/><stop offset="0.286" stop-color="#bf00ff"/><stop offset="0.355" stop-color="#ff00fa"/><stop offset="0.478" stop-color="#ff00a0"/><stop offset="0.700" stop-color="#ff0053"/><stop offset="1.000" stop-color="#ff0023"/></linearGradient><linearGradient id="t146" gradientUnits="userSpaceOnUse" x1="1274" x2="1680" y1="0" y2="0"><stop offset="0.000" stop-color="#002eff"/><stop offset="0.059" stop-color="#0b25ff"/><stop offset="0.286" stop-color="#bf00ff"/><stop offset="0.355" stop-color="#ff00fb"/><stop offset="0.483" stop-color="#ff009e"/><stop offset="0.709" stop-color="#ff0051"/><stop offset="1.000" stop-color="#ff0024"/></linearGradient><linearGradient id="t147" gradientUnits="userSpaceOnUse" x1="1274" x2="1680" y1="0" y2="0"><stop offset="0.000" stop-color="#002bff"/><stop offset="0.059" stop-color="#0c23ff"/><stop offset="0.291" stop-color="#c300ff"/><stop offset="0.360" stop-color="#ff00f6"/><stop offset="0.488" stop-color="#ff009c"/><stop offset="0.719" stop-color="#ff004f"/><stop offset="1.000" stop-color="#ff0024"/></linearGradient><linearGradient id="t148" gradientUnits="userSpaceOnUse" x1="1274" x2="1680" y1="0" y2="0"><stop offset="0.000" stop-color="#0029ff"/><stop offset="0.054" stop-color="#0a21ff"/><stop offset="0.286" stop-color="#bf00ff"/><stop offset="0.360" stop-color="#ff00f6"/><stop offset="0.493" stop-color="#ff009a"/><stop offset="0.729" stop-color="#ff004e"/><stop offset="1.000" stop-color="#ff0025"/></linearGradient><linearGradient id="t149" gradientUnits="userSpaceOnUse" x1="1274" x2="1680" y1="0" y2="0"><stop offset="0.000" stop-color="#0027ff"/><stop offset="0.054" stop-color="#0b1fff"/><stop offset="0.286" stop-color="#bf00ff"/><stop offset="0.360" stop-color="#ff00f7"/><stop offset="0.493" stop-color="#ff009b"/><stop offset="0.729" stop-color="#ff004e"/><stop offset="1.000" stop-color="#ff0025"/></linearGradient><linearGradient id="t150" gradientUnits="userSpaceOnUse" x1="1274" x2="1680" y1="0" y2="0"><stop offset="0.000" stop-color="#0025ff"/><stop offset="0.054" stop-color="#0c1dff"/><stop offset="0.281" stop-color="#bb00ff"/><stop offset="0.360" stop-color="#ff00f7"/><stop offset="0.493" stop-color="#ff009b"/><stop offset="0.729" stop-color="#ff004f"/><stop offset="1.000" stop-color="#ff0026"/></linearGradient><linearGradient id="t151" gradientUnits="userSpaceOnUse" x1="1274" x2="1680" y1="0" y2="0"><stop offset="0.000" stop-color="#0022ff"/><stop offset="0.054" stop-color="#0d1aff"/><stop offset="0.271" stop-color="#b200ff"/><stop offset="0.360" stop-color="#ff00f7"/><stop offset="0.493" stop-color="#ff009c"/><stop offset="0.729" stop-color="#ff0050"/><stop offset="1.000" stop-color="#ff0026"/></linearGradient><linearGradient id="t152" gradientUnits="userSpaceOnUse" x1="1274" x2="1680" y1="0" y2="0"><stop offset="0.000" stop-color="#0020ff"/><stop offset="0.054" stop-color="#0e18ff"/><stop offset="0.261" stop-color="#aa00ff"/><stop offset="0.360" stop-color="#ff00f8"/><stop offset="0.493" stop-color="#ff009c"/><stop offset="0.729" stop-color="#ff0050"/><stop offset="1.000" stop-color="#ff0027"/></linearGradient><linearGradient id="t153" gradientUnits="userSpaceOnUse" x1="1274" x2="1680" y1="0" y2="0"><stop offset="0.000" stop-color="#001eff"/><stop offset="0.049" stop-color="#0c17ff"/><stop offset="0.251" stop-color="#a100ff"/><stop offset="0.360" stop-color="#ff00f8"/><stop offset="0.493" stop-color="#ff009d"/><stop offset="0.729" stop-color="#ff0051"/><stop offset="1.000" stop-color="#ff0027"/></linearGradient><linearGradient id="t154" gradientUnits="userSpaceOnUse" x1="1274" x2="1680" y1="0" y2="0"><stop offset="0.000" stop-color="#001cff"/><stop offset="0.049" stop-color="#0d15ff"/><stop offset="0.246" stop-color="#9d00ff"/><stop offset="0.360" stop-color="#ff00f8"/><stop offset="0.493" stop-color="#ff009e"/><stop offset="0.729" stop-color="#ff0051"/><stop offset="1.000" stop-color="#ff0028"/></linearGradient><linearGradient id="t155" gradientUnits="userSpaceOnUse" x1="1274" x2="1680" y1="0" y2="0"><stop offset="0.000" stop-color="#001aff"/><stop offset="0.054" stop-color="#1112ff"/><stop offset="0.246" stop-color="#9e00ff"/><stop offset="0.360" stop-color="#ff00f9"/><stop offset="0.493" stop-color="#ff009e"/><stop offset="0.729" stop-color="#ff0052"/><stop offset="1.000" stop-color="#ff0028"/></linearGradient><linearGradient id="t156" gradientUnits="userSpaceOnUse" x1="1274" x2="1680" y1="0" y2="0"><stop offset="0.000" stop-color="#0018ff"/><stop offset="0.049" stop-color="#0f10ff"/><stop offset="0.236" stop-color="#9600ff"/><stop offset="0.360" stop-color="#ff00f9"/><stop offset="0.498" stop-color="#ff009c"/><stop offset="0.739" stop-color="#ff0051"/><stop offset="1.000" stop-color="#ff0029"/></linearGradient><linearGradient id="t157" gradientUnits="userSpaceOnUse" x1="1274" x2="1680" y1="0" y2="0"><stop offset="0.000" stop-color="#0016ff"/><stop offset="0.054" stop-color="#130eff"/><stop offset="0.256" stop-color="#a700ff"/><stop offset="0.360" stop-color="#ff00f9"/><stop offset="0.498" stop-color="#ff009d"/><stop offset="0.739" stop-color="#ff0051"/><stop offset="1.000" stop-color="#ff0029"/></linearGradient><linearGradient id="t158" gradientUnits="userSpaceOnUse" x1="1274" x2="1680" y1="0" y2="0"><stop offset="0.000" stop-color="#0014ff"/><stop offset="0.059" stop-color="#180bff"/><stop offset="0.300" stop-color="#cd00ff"/><stop offset="0.365" stop-color="#ff00f5"/><stop offset="0.507" stop-color="#ff0099"/><stop offset="0.759" stop-color="#ff004e"/><stop offset="1.000" stop-color="#ff002a"/></linearGradient><linearGradient id="t159" gradientUnits="userSpaceOnUse" x1="1274" x2="1680" y1="0" y2="0"><stop offset="0.000" stop-color="#0012ff"/><stop offset="0.059" stop-color="#1909ff"/><stop offset="0.300" stop-color="#cd00ff"/><stop offset="0.365" stop-color="#ff00f5"/><stop offset="0.507" stop-color="#ff009a"/><stop offset="0.759" stop-color="#ff004e"/><stop offset="1.000" stop-color="#ff002a"/></linearGradient><linearGradient id="t160" gradientUnits="userSpaceOnUse" x1="1274" x2="1680" y1="0" y2="0"><stop offset="0.000" stop-color="#0010ff"/><stop offset="0.074" stop-color="#2304ff"/><stop offset="0.315" stop-color="#da00ff"/><stop offset="0.365" stop-color="#ff00f6"/><stop offset="0.507" stop-color="#ff009a"/><stop offset="0.759" stop-color="#ff004f"/><stop offset="1.000" stop-color="#ff002b"/></linearGradient><linearGradient id="t161" gradientUnits="userSpaceOnUse" x1="1274" x2="1680" y1="0" y2="0"><stop offset="0.000" stop-color="#000eff"/><stop offset="0.099" stop-color="#3400ff"/><stop offset="0.335" stop-color="#ec00ff"/><stop offset="0.369" stop-color="#ff00f2"/><stop offset="0.517" stop-color="#ff0096"/><stop offset="0.778" stop-color="#ff004c"/><stop offset="1.000" stop-color="#ff002b"/></linearGradient><linearGradient id="t162" gradientUnits="userSpaceOnUse" x1="1274" x2="1680" y1="0" y2="0"><stop offset="0.000" stop-color="#000cff"/><stop offset="0.138" stop-color="#4f00ff"/><stop offset="0.360" stop-color="#ff00fb"/><stop offset="0.498" stop-color="#ff00a0"/><stop offset="0.744" stop-color="#ff0053"/><stop offset="1.000" stop-color="#ff002c"/></linearGradient><linearGradient id="t163" gradientUnits="userSpaceOnUse" x1="1274" x2="1680" y1="0" y2="0"><stop offset="0.000" stop-color="#000aff"/><stop offset="0.187" stop-color="#7300ff"/><stop offset="0.365" stop-color="#ff00f7"/><stop offset="0.507" stop-color="#ff009c"/><stop offset="0.764" stop-color="#ff004f"/><stop offset="1.000" stop-color="#ff002c"/></linearGradient><linearGradient id="t164" gradientUnits="userSpaceOnUse" x1="1274" x2="1680" y1="0" y2="0"><stop offset="0.000" stop-color="#0008ff"/><stop offset="0.207" stop-color="#8200ff"/><stop offset="0.365" stop-color="#ff00f7"/><stop offset="0.507" stop-color="#ff009c"/><stop offset="0.764" stop-color="#ff0050"/><stop offset="1.000" stop-color="#ff002d"/></linearGradient><linearGradient id="t165" gradientUnits="userSpaceOnUse" x1="1274" x2="1680" y1="0" y2="0"><stop offset="0.000" stop-color="#0006ff"/><stop offset="0.222" stop-color="#8e00ff"/><stop offset="0.365" stop-color="#ff00f7"/><stop offset="0.507" stop-color="#ff009d"/><stop offset="0.764" stop-color="#ff0051"/><stop offset="1.000" stop-color="#ff002d"/></linearGradient><linearGradient id="t166" gradientUnits="userSpaceOnUse" x1="1274" x2="1680" y1="0" y2="0"><stop offset="0.000" stop-color="#0004ff"/><stop offset="0.232" stop-color="#9600ff"/><stop offset="0.365" stop-color="#ff00f8"/><stop offset="0.512" stop-color="#ff009b"/><stop offset="0.773" stop-color="#ff004f"/><stop offset="1.000" stop-color="#ff002e"/></linearGradient><linearGradient id="t167" gradientUnits="userSpaceOnUse" x1="1274" x2="1680" y1="0" y2="0"><stop offset="0.000" stop-color="#0003ff"/><stop offset="0.246" stop-color="#a100ff"/><stop offset="0.365" stop-color="#ff00f8"/><stop offset="0.512" stop-color="#ff009c"/><stop offset="0.773" stop-color="#ff0050"/><stop offset="1.000" stop-color="#ff002e"/></linearGradient><linearGradient id="t168" gradientUnits="userSpaceOnUse" x1="1274" x2="1680" y1="0" y2="0"><stop offset="0.000" stop-color="#0001ff"/><stop offset="0.256" stop-color="#a900ff"/><stop offset="0.365" stop-color="#ff00f8"/><stop offset="0.512" stop-color="#ff009c"/><stop offset="0.773" stop-color="#ff0050"/><stop offset="1.000" stop-color="#ff002f"/></linearGradient><linearGradient id="t169" gradientUnits="userSpaceOnUse" x1="1274" x2="1680" y1="0" y2="0"><stop offset="0.000" stop-color="#0000ff"/><stop offset="0.266" stop-color="#b100ff"/><stop offset="0.365" stop-color="#ff00f9"/><stop offset="0.512" stop-color="#ff009d"/><stop offset="0.773" stop-color="#ff0051"/><stop offset="1.000" stop-color="#ff002f"/></linearGradient><clipPath id="clocus"><path d="M1294.8,667.7 L1294.8,667.7 L1294.7,667.7 L1294.6,667.7 L1294.5,667.8 L1294.4,667.8 L1294.4,667.8 L1294.3,667.8 L1294.2,667.8 L1294.1,667.8 L1294.0,667.8 L1294.0,667.8 L1293.9,667.8 L1293.8,667.8 L1293.8,667.8 L1293.7,667.8 L1293.6,667.8 L1293.5,667.8 L1293.4,667.8 L1293.3,667.8 L1293.2,667.8 L1293.1,667.8 L1293.0,667.7 L1292.8,667.7 L1292.6,667.6 L1292.4,667.5 L1292.2,667.4 L1292.0,667.3 L1291.8,667.2 L1291.5,667.1 L1291.2,666.9 L1290.9,666.7 L1290.6,666.5 L1290.2,666.3 L1289.8,666.0 L1289.4,665.8 L1289.0,665.5 L1288.5,665.1 L1288.0,664.8 L1287.5,664.4 L1286.9,664.0 L1286.2,663.6 L1285.6,663.2 L1284.8,662.7 L1284.1,662.2 L1283.3,661.7 L1282.4,661.1 L1281.5,660.5 L1280.5,659.8 L1279.3,659.0 L1278.1,658.1 L1276.7,657.2 L1275.3,656.2 L1273.9,655.2 L1272.6,654.2 L1271.3,653.2 L1270.1,652.3 L1269.1,651.5 L1268.2,650.8 L1267.4,650.1 L1266.6,649.4 L1265.8,648.7 L1265.0,647.9 L1264.1,647.0 L1263.1,646.0 L1262.1,644.9 L1261.0,643.7 L1259.9,642.5 L1258.8,641.1 L1257.6,639.7 L1256.4,638.2 L1255.1,636.6 L1253.8,634.8 L1252.4,633.0 L1251.1,631.1 L1249.6,629.1 L1248.2,626.9 L1246.7,624.6 L1245.1,622.2 L1243.5,619.6 L1241.9,616.8 L1240.2,613.8 L1238.4,610.7 L1236.6,607.5 L1234.8,604.1 L1232.9,600.4 L1230.9,596.6 L1228.9,592.6 L1226.9,588.3 L1224.7,583.7 L1222.5,579.0 L1220.2,574.1 L1217.8,569.0 L1215.5,563.6 L1213.1,558.0 L1210.7,552.1 L1208.3,546.0 L1205.9,539.5 L1203.5,532.8 L1201.1,525.8 L1198.7,518.6 L1196.3,511.1 L1193.9,503.4 L1191.5,495.5 L1189.2,487.3 L1186.8,478.9 L1184.5,470.1 L1182.1,461.1 L1179.8,451.9 L1177.5,442.6 L1175.3,433.1 L1173.2,423.6 L1171.2,414.1 L1169.3,404.5 L1167.5,394.8 L1165.7,384.9 L1164.0,375.0 L1162.4,365.0 L1161.0,355.2 L1159.7,345.4 L1158.6,335.9 L1157.7,326.5 L1156.8,317.1 L1156.1,307.8 L1155.6,298.5 L1155.2,289.5 L1154.9,280.6 L1154.9,271.9 L1155.1,263.5 L1155.5,255.3 L1156.0,247.3 L1156.8,239.4 L1157.7,231.7 L1158.8,224.3 L1160.1,217.2 L1161.6,210.5 L1163.3,204.2 L1165.2,198.2 L1167.4,192.5 L1169.7,187.1 L1172.3,182.1 L1175.0,177.4 L1177.8,173.1 L1180.8,169.2 L1183.8,165.7 L1187.0,162.7 L1190.4,160.2 L1193.9,158.0 L1197.6,156.3 L1201.4,154.8 L1205.2,153.7 L1209.0,152.8 L1212.9,152.2 L1216.8,151.8 L1220.8,151.9 L1224.9,152.3 L1229.0,152.9 L1233.2,153.7 L1237.3,154.7 L1241.5,155.8 L1245.7,156.9 L1249.8,158.1 L1254.0,159.4 L1258.2,161.0 L1262.4,162.6 L1266.6,164.3 L1270.7,166.0 L1274.8,167.8 L1278.9,169.5 L1282.9,171.3 L1286.9,173.1 L1290.9,174.9 L1294.8,176.8 L1298.7,178.7 L1302.6,180.7 L1306.4,182.6 L1310.3,184.6 L1314.1,186.7 L1317.9,188.7 L1321.7,190.8 L1325.4,192.9 L1329.2,195.1 L1332.9,197.2 L1336.7,199.4 L1340.4,201.6 L1344.1,203.9 L1347.9,206.1 L1351.6,208.4 L1355.3,210.8 L1359.0,213.1 L1362.7,215.5 L1366.4,217.9 L1370.1,220.3 L1373.8,222.7 L1377.5,225.2 L1381.2,227.6 L1384.8,230.1 L1388.5,232.6 L1392.2,235.1 L1395.8,237.7 L1399.5,240.2 L1403.2,242.7 L1406.8,245.3 L1410.5,247.9 L1414.2,250.5 L1417.8,253.1 L1421.5,255.7 L1425.2,258.3 L1428.8,261.0 L1432.5,263.6 L1436.2,266.3 L1439.8,268.9 L1443.5,271.6 L1447.2,274.3 L1450.9,277.0 L1454.5,279.7 L1458.2,282.4 L1461.9,285.1 L1465.5,287.8 L1469.2,290.5 L1472.8,293.2 L1476.5,295.9 L1480.2,298.6 L1483.8,301.4 L1487.4,304.1 L1491.1,306.8 L1494.7,309.5 L1498.4,312.2 L1502.0,314.9 L1505.7,317.7 L1509.3,320.4 L1512.9,323.1 L1516.5,325.8 L1520.1,328.5 L1523.7,331.2 L1527.3,333.9 L1530.8,336.6 L1534.4,339.2 L1537.9,341.9 L1541.5,344.6 L1545.0,347.2 L1548.5,349.9 L1552.0,352.5 L1555.5,355.2 L1559.0,357.8 L1562.4,360.4 L1565.8,363.0 L1569.3,365.6 L1572.7,368.1 L1576.0,370.7 L1579.4,373.2 L1582.8,375.8 L1586.1,378.3 L1589.4,380.8 L1592.7,383.3 L1595.9,385.7 L1599.2,388.2 L1602.4,390.6 L1605.6,393.0 L1608.8,395.4 L1611.9,397.7 L1615.0,400.1 L1618.1,402.4 L1621.1,404.7 L1624.1,406.9 L1627.1,409.2 L1630.0,411.4 L1633.0,413.6 L1635.8,415.8 L1638.7,418.0 L1641.5,420.1 L1644.2,422.1 L1646.9,424.2 L1649.5,426.2 L1652.1,428.1 L1654.6,430.0 L1657.1,431.9 L1659.6,433.7 L1662.0,435.6 L1664.3,437.3 L1666.7,439.1 L1669.0,440.8 L1671.3,442.6 L1673.5,444.3 L1675.7,445.9 L1677.9,447.6 L1680.0,449.2 L1682.1,450.7 L1684.1,452.2 L1686.0,453.7 L1687.7,455.0 L1689.4,456.2 L1691.1,457.5 L1692.7,458.7 L1694.5,460.0 L1696.4,461.5 L1698.5,463.1 L1700.9,464.8 L1703.5,466.8 L1706.3,468.9 L1709.1,471.1 L1712.0,473.2 L1714.7,475.3 L1717.3,477.3 L1719.6,479.0 L1721.7,480.6 L1723.6,482.1 L1725.4,483.4 L1727.1,484.7 L1728.7,485.9 L1730.2,487.0 L1731.7,488.1 L1733.1,489.2 L1734.5,490.2 L1735.7,491.2 L1737.0,492.1 L1738.1,493.0 L1739.2,493.8 L1740.3,494.6 L1741.3,495.4 L1742.2,496.1 L1743.1,496.7 L1743.9,497.4 L1744.7,497.9 L1745.4,498.5 L1746.1,499.0 L1746.8,499.4 L1747.4,499.9 L1747.9,500.4 L1748.5,500.8 L1749.0,501.3 L1749.5,501.8 L1749.9,502.2 L1750.3,502.6 L1750.7,503.0 L1751.0,503.3 L1751.2,503.5Z"/></clipPath><clipPath id="ctri"><path d="M1677.3,465.5 L1398.2,297.6 L1275.1,633.5Z"/></clipPath><linearGradient id="insH" x1="0" y1="0" x2="1" y2="0"><stop offset="0" stop-color="#a8ffd8"/><stop offset="0.5" stop-color="#ffffff"/><stop offset="1" stop-color="#ffd8c0"/></linearGradient><linearGradient id="in0" gradientUnits="userSpaceOnUse" x1="1602" x2="1835" y1="0" y2="0"><stop offset="0.000" stop-color="#85ffd0"/><stop offset="0.805" stop-color="#fffbc8"/><stop offset="1.000" stop-color="#ffddaf"/></linearGradient><linearGradient id="in1" gradientUnits="userSpaceOnUse" x1="1602" x2="1835" y1="0" y2="0"><stop offset="0.000" stop-color="#86ffd2"/><stop offset="0.805" stop-color="#fff9c8"/><stop offset="1.000" stop-color="#ffdbaf"/></linearGradient><linearGradient id="in2" gradientUnits="userSpaceOnUse" x1="1602" x2="1835" y1="0" y2="0"><stop offset="0.000" stop-color="#87ffd4"/><stop offset="0.792" stop-color="#fff9ca"/><stop offset="1.000" stop-color="#ffd9af"/></linearGradient><linearGradient id="in3" gradientUnits="userSpaceOnUse" x1="1602" x2="1835" y1="0" y2="0"><stop offset="0.000" stop-color="#88ffd6"/><stop offset="0.779" stop-color="#fff9cc"/><stop offset="1.000" stop-color="#ffd8b0"/></linearGradient><linearGradient id="in4" gradientUnits="userSpaceOnUse" x1="1602" x2="1835" y1="0" y2="0"><stop offset="0.000" stop-color="#8affd7"/><stop offset="0.766" stop-color="#fff9cf"/><stop offset="1.000" stop-color="#ffd6b0"/></linearGradient><linearGradient id="in5" gradientUnits="userSpaceOnUse" x1="1602" x2="1835" y1="0" y2="0"><stop offset="0.000" stop-color="#8bffd9"/><stop offset="0.753" stop-color="#fffad1"/><stop offset="1.000" stop-color="#ffd4b0"/></linearGradient><linearGradient id="in6" gradientUnits="userSpaceOnUse" x1="1602" x2="1835" y1="0" y2="0"><stop offset="0.000" stop-color="#8cffdb"/><stop offset="0.740" stop-color="#fffad3"/><stop offset="1.000" stop-color="#ffd3b1"/></linearGradient><linearGradient id="in7" gradientUnits="userSpaceOnUse" x1="1602" x2="1835" y1="0" y2="0"><stop offset="0.000" stop-color="#8effdd"/><stop offset="0.727" stop-color="#fffad5"/><stop offset="1.000" stop-color="#ffd1b1"/></linearGradient><linearGradient id="in8" gradientUnits="userSpaceOnUse" x1="1602" x2="1835" y1="0" y2="0"><stop offset="0.000" stop-color="#8fffdf"/><stop offset="0.714" stop-color="#fffad7"/><stop offset="1.000" stop-color="#ffcfb1"/></linearGradient><linearGradient id="in9" gradientUnits="userSpaceOnUse" x1="1602" x2="1835" y1="0" y2="0"><stop offset="0.000" stop-color="#90ffe0"/><stop offset="0.701" stop-color="#fffbda"/><stop offset="1.000" stop-color="#ffceb2"/></linearGradient><linearGradient id="in10" gradientUnits="userSpaceOnUse" x1="1602" x2="1835" y1="0" y2="0"><stop offset="0.000" stop-color="#92ffe2"/><stop offset="0.701" stop-color="#fff9da"/><stop offset="1.000" stop-color="#ffccb2"/></linearGradient><linearGradient id="in11" gradientUnits="userSpaceOnUse" x1="1602" x2="1835" y1="0" y2="0"><stop offset="0.000" stop-color="#93ffe4"/><stop offset="0.688" stop-color="#fff9dc"/><stop offset="1.000" stop-color="#ffcab2"/></linearGradient><linearGradient id="in12" gradientUnits="userSpaceOnUse" x1="1602" x2="1835" y1="0" y2="0"><stop offset="0.000" stop-color="#95ffe6"/><stop offset="0.675" stop-color="#fff9df"/><stop offset="1.000" stop-color="#ffc9b3"/></linearGradient><linearGradient id="in13" gradientUnits="userSpaceOnUse" x1="1602" x2="1835" y1="0" y2="0"><stop offset="0.000" stop-color="#96ffe8"/><stop offset="0.662" stop-color="#fff9e1"/><stop offset="1.000" stop-color="#ffc7b3"/></linearGradient><linearGradient id="in14" gradientUnits="userSpaceOnUse" x1="1602" x2="1835" y1="0" y2="0"><stop offset="0.000" stop-color="#97ffea"/><stop offset="0.649" stop-color="#fffae3"/><stop offset="1.000" stop-color="#ffc6b3"/></linearGradient><linearGradient id="in15" gradientUnits="userSpaceOnUse" x1="1602" x2="1835" y1="0" y2="0"><stop offset="0.000" stop-color="#99ffec"/><stop offset="0.636" stop-color="#fffae6"/><stop offset="1.000" stop-color="#ffc4b3"/></linearGradient><linearGradient id="in16" gradientUnits="userSpaceOnUse" x1="1602" x2="1835" y1="0" y2="0"><stop offset="0.000" stop-color="#9affee"/><stop offset="0.623" stop-color="#fffae8"/><stop offset="1.000" stop-color="#ffc3b4"/></linearGradient><linearGradient id="in17" gradientUnits="userSpaceOnUse" x1="1602" x2="1835" y1="0" y2="0"><stop offset="0.000" stop-color="#9cfff0"/><stop offset="0.610" stop-color="#fffaeb"/><stop offset="1.000" stop-color="#ffc1b4"/></linearGradient><linearGradient id="in18" gradientUnits="userSpaceOnUse" x1="1602" x2="1835" y1="0" y2="0"><stop offset="0.000" stop-color="#9dfff2"/><stop offset="0.597" stop-color="#fffbed"/><stop offset="1.000" stop-color="#ffbfb4"/></linearGradient><linearGradient id="in19" gradientUnits="userSpaceOnUse" x1="1602" x2="1835" y1="0" y2="0"><stop offset="0.000" stop-color="#9ffff4"/><stop offset="0.584" stop-color="#fffbf0"/><stop offset="1.000" stop-color="#ffbeb5"/></linearGradient><linearGradient id="in20" gradientUnits="userSpaceOnUse" x1="1602" x2="1835" y1="0" y2="0"><stop offset="0.000" stop-color="#a0fff6"/><stop offset="0.584" stop-color="#fff9f0"/><stop offset="1.000" stop-color="#ffbcb5"/></linearGradient><linearGradient id="in21" gradientUnits="userSpaceOnUse" x1="1602" x2="1835" y1="0" y2="0"><stop offset="0.000" stop-color="#a2fff8"/><stop offset="0.571" stop-color="#fff9f2"/><stop offset="1.000" stop-color="#ffbbb5"/></linearGradient><linearGradient id="in22" gradientUnits="userSpaceOnUse" x1="1602" x2="1835" y1="0" y2="0"><stop offset="0.000" stop-color="#a3fffb"/><stop offset="0.558" stop-color="#fff9f5"/><stop offset="1.000" stop-color="#ffb9b6"/></linearGradient><linearGradient id="in23" gradientUnits="userSpaceOnUse" x1="1602" x2="1835" y1="0" y2="0"><stop offset="0.000" stop-color="#a5fffd"/><stop offset="0.545" stop-color="#fffaf7"/><stop offset="1.000" stop-color="#ffb8b6"/></linearGradient><linearGradient id="in24" gradientUnits="userSpaceOnUse" x1="1602" x2="1835" y1="0" y2="0"><stop offset="0.000" stop-color="#a6ffff"/><stop offset="0.532" stop-color="#fffafa"/><stop offset="1.000" stop-color="#ffb6b6"/></linearGradient><linearGradient id="in25" gradientUnits="userSpaceOnUse" x1="1602" x2="1835" y1="0" y2="0"><stop offset="0.000" stop-color="#a7fdff"/><stop offset="0.532" stop-color="#fff8fa"/><stop offset="1.000" stop-color="#ffb5b7"/></linearGradient><linearGradient id="in26" gradientUnits="userSpaceOnUse" x1="1602" x2="1835" y1="0" y2="0"><stop offset="0.000" stop-color="#a7fbff"/><stop offset="0.532" stop-color="#fff6fa"/><stop offset="1.000" stop-color="#ffb3b7"/></linearGradient><linearGradient id="in27" gradientUnits="userSpaceOnUse" x1="1602" x2="1835" y1="0" y2="0"><stop offset="0.000" stop-color="#a7f9ff"/><stop offset="0.532" stop-color="#fff3fa"/><stop offset="1.000" stop-color="#ffb2b7"/></linearGradient><linearGradient id="in28" gradientUnits="userSpaceOnUse" x1="1602" x2="1835" y1="0" y2="0"><stop offset="0.000" stop-color="#a7f7ff"/><stop offset="0.532" stop-color="#fff1fb"/><stop offset="1.000" stop-color="#ffb0b7"/></linearGradient><linearGradient id="in29" gradientUnits="userSpaceOnUse" x1="1602" x2="1835" y1="0" y2="0"><stop offset="0.000" stop-color="#a7f4ff"/><stop offset="0.532" stop-color="#ffeffb"/><stop offset="1.000" stop-color="#ffafb8"/></linearGradient><linearGradient id="in30" gradientUnits="userSpaceOnUse" x1="1602" x2="1835" y1="0" y2="0"><stop offset="0.000" stop-color="#a7f2ff"/><stop offset="0.545" stop-color="#ffebf9"/><stop offset="1.000" stop-color="#ffadb8"/></linearGradient><linearGradient id="in31" gradientUnits="userSpaceOnUse" x1="1602" x2="1835" y1="0" y2="0"><stop offset="0.000" stop-color="#a7f0ff"/><stop offset="0.545" stop-color="#ffe9f9"/><stop offset="1.000" stop-color="#ffacb8"/></linearGradient><linearGradient id="in32" gradientUnits="userSpaceOnUse" x1="1602" x2="1835" y1="0" y2="0"><stop offset="0.000" stop-color="#a8eeff"/><stop offset="0.545" stop-color="#ffe7f9"/><stop offset="1.000" stop-color="#ffaab9"/></linearGradient><linearGradient id="in33" gradientUnits="userSpaceOnUse" x1="1602" x2="1835" y1="0" y2="0"><stop offset="0.000" stop-color="#a8ecff"/><stop offset="0.545" stop-color="#ffe5f9"/><stop offset="1.000" stop-color="#ffa9b9"/></linearGradient><linearGradient id="in34" gradientUnits="userSpaceOnUse" x1="1602" x2="1835" y1="0" y2="0"><stop offset="0.000" stop-color="#a8eaff"/><stop offset="0.545" stop-color="#ffe3f9"/><stop offset="1.000" stop-color="#ffa7b9"/></linearGradient><linearGradient id="in35" gradientUnits="userSpaceOnUse" x1="1602" x2="1835" y1="0" y2="0"><stop offset="0.000" stop-color="#a8e8ff"/><stop offset="0.545" stop-color="#ffe1f9"/><stop offset="1.000" stop-color="#ffa6ba"/></linearGradient><linearGradient id="in36" gradientUnits="userSpaceOnUse" x1="1602" x2="1835" y1="0" y2="0"><stop offset="0.000" stop-color="#a8e6ff"/><stop offset="0.545" stop-color="#ffdffa"/><stop offset="1.000" stop-color="#ffa4ba"/></linearGradient><linearGradient id="in37" gradientUnits="userSpaceOnUse" x1="1602" x2="1835" y1="0" y2="0"><stop offset="0.000" stop-color="#a8e4ff"/><stop offset="0.545" stop-color="#ffddfa"/><stop offset="1.000" stop-color="#ffa3ba"/></linearGradient><linearGradient id="in38" gradientUnits="userSpaceOnUse" x1="1602" x2="1835" y1="0" y2="0"><stop offset="0.000" stop-color="#a8e2ff"/><stop offset="0.545" stop-color="#ffdbfa"/><stop offset="1.000" stop-color="#ffa2ba"/></linearGradient><linearGradient id="in39" gradientUnits="userSpaceOnUse" x1="1602" x2="1835" y1="0" y2="0"><stop offset="0.000" stop-color="#a9e0ff"/><stop offset="0.545" stop-color="#ffd9fa"/><stop offset="1.000" stop-color="#ffa0bb"/></linearGradient><linearGradient id="in40" gradientUnits="userSpaceOnUse" x1="1602" x2="1835" y1="0" y2="0"><stop offset="0.000" stop-color="#a9deff"/><stop offset="0.545" stop-color="#ffd7fa"/><stop offset="1.000" stop-color="#ff9fbb"/></linearGradient><linearGradient id="in41" gradientUnits="userSpaceOnUse" x1="1602" x2="1835" y1="0" y2="0"><stop offset="0.000" stop-color="#a9dcff"/><stop offset="0.545" stop-color="#ffd5fa"/><stop offset="1.000" stop-color="#ff9dbb"/></linearGradient><linearGradient id="in42" gradientUnits="userSpaceOnUse" x1="1602" x2="1835" y1="0" y2="0"><stop offset="0.000" stop-color="#a9daff"/><stop offset="0.545" stop-color="#ffd3fb"/><stop offset="1.000" stop-color="#ff9cbc"/></linearGradient><linearGradient id="in43" gradientUnits="userSpaceOnUse" x1="1602" x2="1835" y1="0" y2="0"><stop offset="0.000" stop-color="#a9d8ff"/><stop offset="0.558" stop-color="#ffd0f9"/><stop offset="1.000" stop-color="#ff9bbc"/></linearGradient><linearGradient id="in44" gradientUnits="userSpaceOnUse" x1="1602" x2="1835" y1="0" y2="0"><stop offset="0.000" stop-color="#a9d6ff"/><stop offset="0.558" stop-color="#ffcef9"/><stop offset="1.000" stop-color="#ff99bc"/></linearGradient><linearGradient id="in45" gradientUnits="userSpaceOnUse" x1="1602" x2="1835" y1="0" y2="0"><stop offset="0.000" stop-color="#a9d5ff"/><stop offset="0.558" stop-color="#ffccf9"/><stop offset="1.000" stop-color="#ff98bc"/></linearGradient><linearGradient id="in46" gradientUnits="userSpaceOnUse" x1="1602" x2="1835" y1="0" y2="0"><stop offset="0.000" stop-color="#aad3ff"/><stop offset="0.558" stop-color="#ffcaf9"/><stop offset="1.000" stop-color="#ff96bd"/></linearGradient><linearGradient id="in47" gradientUnits="userSpaceOnUse" x1="1602" x2="1835" y1="0" y2="0"><stop offset="0.000" stop-color="#aad1ff"/><stop offset="0.558" stop-color="#ffc8f9"/><stop offset="1.000" stop-color="#ff95bd"/></linearGradient><linearGradient id="in48" gradientUnits="userSpaceOnUse" x1="1602" x2="1835" y1="0" y2="0"><stop offset="0.000" stop-color="#aacfff"/><stop offset="0.558" stop-color="#ffc6f9"/><stop offset="1.000" stop-color="#ff94bd"/></linearGradient><linearGradient id="rb_r" x1="0" y1="0" x2="0" y2="1"><stop offset="0" stop-color="#ff5555"/><stop offset="1" stop-color="#ff3535"/></linearGradient><linearGradient id="rb_g" x1="0" y1="0" x2="0" y2="1"><stop offset="0" stop-color="#58b058"/><stop offset="1" stop-color="#35a035"/></linearGradient><linearGradient id="rb_b" x1="0" y1="0" x2="0" y2="1"><stop offset="0" stop-color="#5555ff"/><stop offset="1" stop-color="#3838ff"/></linearGradient><linearGradient id="thead" x1="0" y1="0" x2="0" y2="1"><stop offset="0" stop-color="#363636"/><stop offset="0.49" stop-color="#313131"/><stop offset="0.51" stop-color="#181818"/><stop offset="1" stop-color="#131313"/></linearGradient><linearGradient id="tlight" x1="0" y1="0" x2="0" y2="1"><stop offset="0" stop-color="#787878"/><stop offset="0.5" stop-color="#848484"/><stop offset="1" stop-color="#7a7a7a"/></linearGradient><linearGradient id="tile" x1="0" y1="0" x2="0" y2="1"><stop offset="0" stop-color="#ababab"/><stop offset="0.55" stop-color="#8a8a8a"/><stop offset="1" stop-color="#575757"/></linearGradient><linearGradient id="seltile" x1="0" y1="0" x2="0" y2="1"><stop offset="0" stop-color="#1a1a1a"/><stop offset="1" stop-color="#353535"/></linearGradient><linearGradient id="strip" x1="0" y1="0" x2="0" y2="1"><stop offset="0" stop-color="#454545"/><stop offset="1" stop-color="#1c1c1c"/></linearGradient><linearGradient id="cbtn" x1="0" y1="0" x2="0" y2="1"><stop offset="0" stop-color="#b4b4b4"/><stop offset="0.5" stop-color="#979797"/><stop offset="1" stop-color="#6c6c6c"/></linearGradient></defs><rect x="0.0" y="0.0" width="1920.0" height="1040.0" fill="#333"/><rect x="0.0" y="0.0" width="1920.0" height="26.0" fill="#fff"/><rect x="0.0" y="26.0" width="1920.0" height="74.0" fill="#232323"/><path d="M11,2 l4.5,4.5 l-4.5,4.5 l-4.5,-4.5z" fill="#f5c518"/><path d="M16,7 l4.5,4.5 l-4.5,4.5 l-4.5,-4.5z" fill="#22c55e"/><path d="M11,12 l4.5,4.5 l-4.5,4.5 l-4.5,-4.5z" fill="#e11d48"/><path d="M6,7 l4.5,4.5 l-4.5,4.5 l-4.5,-4.5z" fill="#38bdf8"/><text x="24.0" y="17.6" font-size="13.91" fill="#262626" font-weight="400" text-anchor="start" textLength="443.5" lengthAdjust="spacingAndGlyphs" xml:space="preserve">Calman 2025 Calman Ultimate for Business 106 Days Remaining  - Untitled</text><line x1="1791.0" y1="12.5" x2="1802.0" y2="12.5" stroke="#222" stroke-width="1"/><rect x="1843.5" y="9.5" width="8" height="8" fill="none" stroke="#222" stroke-width="1"/><path d="M1846,9.5 v-2 h8 v8 h-2.5" fill="none" stroke="#222" stroke-width="1"/><path d="M1897,7 L1908,18 M1908,7 L1897,18" stroke="#222" stroke-width="1.1"/><line x1="0.0" y1="26.5" x2="1920.0" y2="26.5" stroke="#000" stroke-width="1"/><line x1="0.0" y1="26.5" x2="1920.0" y2="26.5" stroke="#e8e8e8" stroke-width="1" stroke-dasharray="1.6 1.7"/><rect x="1" y="27" width="205.5" height="32" rx="3" fill="url(#redbtn)" stroke="#a86868" stroke-width="1"/><g transform="translate(38.8,41.85) rotate(45)"><path d="M-7.90,-2.70 L-7.90,-7.90 L-2.70,-7.90" fill="none" stroke="#fff" stroke-width="3.6" stroke-linejoin="round" stroke-linecap="round"/><path d="M7.90,-2.70 L7.90,-7.90 L2.70,-7.90" fill="none" stroke="#fff" stroke-width="3.6" stroke-linejoin="round" stroke-linecap="round"/><path d="M7.90,2.70 L7.90,7.90 L2.70,7.90" fill="none" stroke="#fff" stroke-width="3.6" stroke-linejoin="round" stroke-linecap="round"/><path d="M-7.90,2.70 L-7.90,7.90 L-2.70,7.90" fill="none" stroke="#fff" stroke-width="3.6" stroke-linejoin="round" stroke-linecap="round"/><rect x="-5.2" y="-5.2" width="4.3" height="4.3" rx="0.8" fill="#fff"/><rect x="-5.2" y="0.9" width="4.3" height="4.3" rx="0.8" fill="#fff"/><rect x="0.9" y="-5.2" width="4.3" height="4.3" rx="0.8" fill="#fff"/><rect x="0.9" y="0.9" width="4.3" height="4.3" rx="0.8" fill="#fff"/></g><g fill="none" stroke="#fff" stroke-width="2.8"><path d="M68.0,36.3 A6.6,6.6 0 1 0 68.0,47.2"/><circle cx="77.0" cy="41.75" r="6.5"/><path d="M83.2,34 V49.7"/><path d="M89.8,28.3 V49.7"/><path d="M95.3,49.7 V40.0 A4.85,4.85 0 0 1 105.0,40.0 V49.7 M105.0,40.0 A4.85,4.85 0 0 1 114.7,40.0 V49.7"/><circle cx="126.6" cy="41.75" r="6.5"/><path d="M132.8,34 V49.7"/><path d="M139,49.7 V41.05 A5.9,5.9 0 0 1 150.8,41.05 V49.7"/></g><circle cx="187.6" cy="41.5" r="9.5" fill="#cf1a1a" stroke="#e24040" stroke-width="1"/><path d="M182,40 L193.2,40 L187.6,46z" fill="#fff"/><rect x="214.5" y="40.0" width="1705.5" height="5.5" fill="url(#rainbow)"/><rect x="-4" y="65.5" width="34" height="31.5" rx="4" fill="url(#gbtn)" stroke="#b0b0b0" stroke-width="1"/><circle cx="14.5" cy="81" r="10.5" fill="#7a7a7a" stroke="#8c8c8c" stroke-width="1"/><path d="M11,75.5 L17.5,80.5 L11,86z" fill="#fff"/><path d="M33.5,100 V69 a3.5,3.5 0 0 1 3.5,-3.5 H133.5 a3.5,3.5 0 0 1 3.5,3.5 V100" fill="url(#tab)" stroke="#6a6a6a" stroke-width="1.2"/><line x1="99.0" y1="66.0" x2="99.0" y2="100.0" stroke="#5a5a5a" stroke-width="1.2"/><text x="40.2" y="88.5" font-size="13.91" fill="#e8e8e8" font-weight="400" text-anchor="start" textLength="52.5" lengthAdjust="spacingAndGlyphs">History 1</text><circle cx="116.5" cy="85" r="10" fill="#3a3a3a" stroke="#444" stroke-width="1"/><path d="M116.5,81.5 v7 M113,85 h7" stroke="#858585" stroke-width="1"/><rect x="1373.0" y="65" width="161.0" height="34" rx="3" fill="url(#ctl)"/><rect x="1373.0" y="65.5" width="7" height="33.5" rx="2" fill="#18d018"/><text x="1383.4" y="78.5" font-size="12.32" fill="#f0f0f0" font-weight="400" text-anchor="start" textLength="73.3" lengthAdjust="spacingAndGlyphs">X-Rite i1Pro 2</text><text x="1383.6" y="94.9" font-size="12.32" fill="#f0f0f0" font-weight="400" text-anchor="start" textLength="62.6" lengthAdjust="spacingAndGlyphs">Direct View</text><circle cx="1472.0" cy="83" r="10" fill="url(#dd)"/><path d="M1466.5,80.5 h11 l-5.5,5.5z" fill="#fff"/><line x1="1494.0" y1="66.0" x2="1494.0" y2="99.0" stroke="#3a3a3a" stroke-width="1"/><circle cx="1517.5" cy="82" r="14" fill="#0000e8" stroke="#fff" stroke-width="1.3"/><text x="1517.5" y="86.5" font-size="12.32" fill="#fff" font-weight="700" text-anchor="middle" textLength="18.0" lengthAdjust="spacingAndGlyphs">237</text><rect x="1541.6" y="65" width="146.9" height="34" rx="3" fill="url(#ctl)"/><rect x="1541.6" y="65.5" width="7" height="33.5" rx="2" fill="#18d018"/><text x="1551.5" y="78.5" font-size="12.32" fill="#f0f0f0" font-weight="400" text-anchor="start" textLength="45.5" lengthAdjust="spacingAndGlyphs">Patterns</text><circle cx="1669.0" cy="83" r="10" fill="url(#dd)"/><path d="M1663.5,80.5 h11 l-5.5,5.5z" fill="#fff"/><rect x="1695.5" y="65" width="162.5" height="34" rx="3" fill="url(#ctl)"/><rect x="1695.5" y="65.5" width="7" height="33.5" rx="2" fill="#e8e810"/><text x="1706.0" y="78.8" font-size="12.32" fill="#f0f0f0" font-weight="400" text-anchor="start" textLength="118.5" lengthAdjust="spacingAndGlyphs">Direct Display Control</text><circle cx="1839.0" cy="83" r="10" fill="url(#dd)"/><path d="M1833.5,80.5 h11 l-5.5,5.5z" fill="#fff"/><rect x="1861.5" y="65.5" width="37" height="31" rx="4" fill="url(#gbtn)" stroke="#a0a0a0" stroke-width="1"/><circle cx="1880" cy="81" r="10" fill="#6c6c6c"/><g transform="translate(1880,81)" fill="#d8d8d8"><rect x="-1.5" y="-7.2" width="3" height="3.2" rx="0.5" transform="rotate(0)"/><rect x="-1.5" y="-7.2" width="3" height="3.2" rx="0.5" transform="rotate(45)"/><rect x="-1.5" y="-7.2" width="3" height="3.2" rx="0.5" transform="rotate(90)"/><rect x="-1.5" y="-7.2" width="3" height="3.2" rx="0.5" transform="rotate(135)"/><rect x="-1.5" y="-7.2" width="3" height="3.2" rx="0.5" transform="rotate(180)"/><rect x="-1.5" y="-7.2" width="3" height="3.2" rx="0.5" transform="rotate(225)"/><rect x="-1.5" y="-7.2" width="3" height="3.2" rx="0.5" transform="rotate(270)"/><rect x="-1.5" y="-7.2" width="3" height="3.2" rx="0.5" transform="rotate(315)"/><circle r="4.6" fill="none" stroke="#d8d8d8" stroke-width="2"/></g><rect x="1900.5" y="65.5" width="30" height="31" rx="4" fill="url(#gbtn)" stroke="#a0a0a0" stroke-width="1"/><circle cx="1914" cy="81" r="10" fill="#6c6c6c"/><path d="M1911.5,80.5 L1918.5,74.5 V86.5z" fill="#fff"/><line x1="0.5" y1="27.0" x2="0.5" y2="1040.0" stroke="#000" stroke-width="1"/><line x1="0.5" y1="27.0" x2="0.5" y2="1040.0" stroke="#e8e8e8" stroke-width="1" stroke-dasharray="1.6 1.7"/><text x="102.8" y="162.7" font-size="46.09" fill="#f4f4f4" font-weight="400" text-anchor="start" textLength="204.5" lengthAdjust="spacingAndGlyphs">Colorspace</text><text x="234.0" y="215.5" font-size="15.94" fill="#dcdcdc" font-weight="400" text-anchor="start" textLength="84.0" lengthAdjust="spacingAndGlyphs">DeltaE 2000</text><rect x="97.9" y="221.2" width="356.4" height="439.8" fill="#252525"/><line x1="144.1" y1="221.2" x2="144.1" y2="661.0" stroke="#a6a6a6" stroke-width="1.6"/><line x1="191.7" y1="221.2" x2="191.7" y2="661.0" stroke="#a6a6a6" stroke-width="1.6"/><line x1="239.3" y1="221.2" x2="239.3" y2="661.0" stroke="#a6a6a6" stroke-width="1.6"/><line x1="287.0" y1="221.2" x2="287.0" y2="661.0" stroke="#a6a6a6" stroke-width="1.6"/><line x1="334.6" y1="221.2" x2="334.6" y2="661.0" stroke="#a6a6a6" stroke-width="1.6"/><line x1="382.2" y1="221.2" x2="382.2" y2="661.0" stroke="#a6a6a6" stroke-width="1.6"/><line x1="429.8" y1="221.2" x2="429.8" y2="661.0" stroke="#a6a6a6" stroke-width="1.6"/><rect x="97.9" y="221.2" width="356.4" height="439.8" fill="none" stroke="#a6a6a6" stroke-width="1.8"/><line x1="97.9" y1="661.0" x2="97.9" y2="667.5" stroke="#a6a6a6" stroke-width="1.6"/><text x="97.9" y="684.3" font-size="15.94" fill="#dcdcdc" font-weight="400" text-anchor="middle">0</text><line x1="144.1" y1="661.0" x2="144.1" y2="667.5" stroke="#a6a6a6" stroke-width="1.6"/><text x="144.1" y="684.3" font-size="15.94" fill="#dcdcdc" font-weight="400" text-anchor="middle">2</text><line x1="191.7" y1="661.0" x2="191.7" y2="667.5" stroke="#a6a6a6" stroke-width="1.6"/><text x="191.7" y="684.3" font-size="15.94" fill="#dcdcdc" font-weight="400" text-anchor="middle">4</text><line x1="239.3" y1="661.0" x2="239.3" y2="667.5" stroke="#a6a6a6" stroke-width="1.6"/><text x="239.3" y="684.3" font-size="15.94" fill="#dcdcdc" font-weight="400" text-anchor="middle">6</text><line x1="287.0" y1="661.0" x2="287.0" y2="667.5" stroke="#a6a6a6" stroke-width="1.6"/><text x="287.0" y="684.3" font-size="15.94" fill="#dcdcdc" font-weight="400" text-anchor="middle">8</text><line x1="334.6" y1="661.0" x2="334.6" y2="667.5" stroke="#a6a6a6" stroke-width="1.6"/><text x="334.6" y="684.3" font-size="15.94" fill="#dcdcdc" font-weight="400" text-anchor="middle">10</text><line x1="382.2" y1="661.0" x2="382.2" y2="667.5" stroke="#a6a6a6" stroke-width="1.6"/><text x="382.2" y="684.3" font-size="15.94" fill="#dcdcdc" font-weight="400" text-anchor="middle">12</text><line x1="429.8" y1="661.0" x2="429.8" y2="667.5" stroke="#a6a6a6" stroke-width="1.6"/><text x="429.8" y="684.3" font-size="15.94" fill="#dcdcdc" font-weight="400" text-anchor="middle">14</text><rect x="97.9" y="226.2" width="45.6" height="43.0" fill="#000"/><rect x="97.1" y="228.0" width="44.7" height="39.4" fill="url(#de0)"/><rect x="97.9" y="281.2" width="20.0" height="43.0" fill="#000"/><rect x="97.1" y="283.0" width="19.1" height="39.4" fill="url(#de1)"/><rect x="97.9" y="336.3" width="8.5" height="43.0" fill="#000"/><rect x="97.1" y="338.1" width="7.6" height="39.4" fill="url(#de2)"/><rect x="97.9" y="391.3" width="16.6" height="43.0" fill="#000"/><rect x="97.1" y="393.1" width="15.7" height="39.4" fill="url(#de3)"/><rect x="97.9" y="446.4" width="12.1" height="43.0" fill="#000"/><rect x="97.1" y="448.2" width="11.2" height="39.4" fill="url(#de4)"/><rect x="97.9" y="501.4" width="6.5" height="43.0" fill="#000"/><rect x="97.1" y="503.2" width="5.6" height="39.4" fill="url(#de5)"/><rect x="97.9" y="556.4" width="53.5" height="43.0" fill="#000"/><rect x="97.1" y="558.2" width="52.6" height="39.4" fill="url(#de6)"/><rect x="97.9" y="611.5" width="37.1" height="43.0" fill="#000"/><rect x="97.1" y="613.3" width="36.2" height="39.4" fill="url(#de7)"/><text x="573.9" y="143.3" font-size="15.94" fill="#dcdcdc" font-weight="400" text-anchor="middle" textLength="48.0" lengthAdjust="spacingAndGlyphs">Delta L</text><rect x="511.0" y="149.5" width="153.5" height="335.9" fill="#252525"/><line x1="504.5" y1="149.5" x2="664.5" y2="149.5" stroke="#a6a6a6" stroke-width="1.5"/><text x="504.2" y="155.0" font-size="15.94" fill="#dcdcdc" font-weight="400" text-anchor="end">15</text><line x1="504.5" y1="205.5" x2="664.5" y2="205.5" stroke="#a6a6a6" stroke-width="1.5"/><text x="504.2" y="211.0" font-size="15.94" fill="#dcdcdc" font-weight="400" text-anchor="end">10</text><line x1="504.5" y1="261.5" x2="664.5" y2="261.5" stroke="#a6a6a6" stroke-width="1.5"/><text x="504.2" y="267.0" font-size="15.94" fill="#dcdcdc" font-weight="400" text-anchor="end">5</text><line x1="504.5" y1="317.4" x2="664.5" y2="317.4" stroke="#a6a6a6" stroke-width="1.5"/><text x="504.2" y="322.9" font-size="15.94" fill="#dcdcdc" font-weight="400" text-anchor="end">0</text><line x1="504.5" y1="373.4" x2="664.5" y2="373.4" stroke="#a6a6a6" stroke-width="1.5"/><text x="504.2" y="378.9" font-size="15.94" fill="#dcdcdc" font-weight="400" text-anchor="end">-5</text><line x1="504.5" y1="429.4" x2="664.5" y2="429.4" stroke="#a6a6a6" stroke-width="1.5"/><text x="504.2" y="434.9" font-size="15.94" fill="#dcdcdc" font-weight="400" text-anchor="end">-10</text><line x1="504.5" y1="485.4" x2="664.5" y2="485.4" stroke="#a6a6a6" stroke-width="1.5"/><text x="504.2" y="490.9" font-size="15.94" fill="#dcdcdc" font-weight="400" text-anchor="end">-15</text><rect x="511.0" y="149.5" width="153.5" height="335.9" fill="none" stroke="#a6a6a6" stroke-width="2"/><line x1="511.0" y1="485.4" x2="511.0" y2="491.7" stroke="#a6a6a6" stroke-width="1.6"/><line x1="664.5" y1="485.4" x2="664.5" y2="491.7" stroke="#a6a6a6" stroke-width="1.6"/><text x="587.8" y="502.6" font-size="16.23" fill="#dcdcdc" font-weight="400" text-anchor="middle" textLength="40.0" lengthAdjust="spacingAndGlyphs">100W</text><line x1="525.5" y1="317.4" x2="649.5" y2="317.4" stroke="#111" stroke-width="1.6"/><text x="784.0" y="143.3" font-size="15.94" fill="#dcdcdc" font-weight="400" text-anchor="middle" textLength="50.0" lengthAdjust="spacingAndGlyphs">Delta C</text><rect x="721.5" y="149.5" width="153.5" height="335.9" fill="#252525"/><line x1="715.0" y1="149.5" x2="875.0" y2="149.5" stroke="#a6a6a6" stroke-width="1.5"/><text x="714.7" y="155.0" font-size="15.94" fill="#dcdcdc" font-weight="400" text-anchor="end">15</text><line x1="715.0" y1="205.5" x2="875.0" y2="205.5" stroke="#a6a6a6" stroke-width="1.5"/><text x="714.7" y="211.0" font-size="15.94" fill="#dcdcdc" font-weight="400" text-anchor="end">10</text><line x1="715.0" y1="261.5" x2="875.0" y2="261.5" stroke="#a6a6a6" stroke-width="1.5"/><text x="714.7" y="267.0" font-size="15.94" fill="#dcdcdc" font-weight="400" text-anchor="end">5</text><line x1="715.0" y1="317.4" x2="875.0" y2="317.4" stroke="#a6a6a6" stroke-width="1.5"/><text x="714.7" y="322.9" font-size="15.94" fill="#dcdcdc" font-weight="400" text-anchor="end">0</text><line x1="715.0" y1="373.4" x2="875.0" y2="373.4" stroke="#a6a6a6" stroke-width="1.5"/><text x="714.7" y="378.9" font-size="15.94" fill="#dcdcdc" font-weight="400" text-anchor="end">-5</text><line x1="715.0" y1="429.4" x2="875.0" y2="429.4" stroke="#a6a6a6" stroke-width="1.5"/><text x="714.7" y="434.9" font-size="15.94" fill="#dcdcdc" font-weight="400" text-anchor="end">-10</text><line x1="715.0" y1="485.4" x2="875.0" y2="485.4" stroke="#a6a6a6" stroke-width="1.5"/><text x="714.7" y="490.9" font-size="15.94" fill="#dcdcdc" font-weight="400" text-anchor="end">-15</text><rect x="721.5" y="149.5" width="153.5" height="335.9" fill="none" stroke="#a6a6a6" stroke-width="2"/><line x1="721.5" y1="485.4" x2="721.5" y2="491.7" stroke="#a6a6a6" stroke-width="1.6"/><line x1="875.0" y1="485.4" x2="875.0" y2="491.7" stroke="#a6a6a6" stroke-width="1.6"/><text x="798.2" y="502.6" font-size="16.23" fill="#dcdcdc" font-weight="400" text-anchor="middle" textLength="40.0" lengthAdjust="spacingAndGlyphs">100W</text><rect x="737.6" y="302.6" width="120.7" height="15.3" fill="url(#dcbar)" stroke="#000" stroke-width="2"/><text x="993.6" y="143.3" font-size="15.94" fill="#dcdcdc" font-weight="400" text-anchor="middle" textLength="51.3" lengthAdjust="spacingAndGlyphs">Delta H</text><rect x="932.0" y="149.5" width="153.5" height="335.9" fill="#252525"/><line x1="925.5" y1="149.5" x2="1085.5" y2="149.5" stroke="#a6a6a6" stroke-width="1.5"/><text x="925.2" y="155.0" font-size="15.94" fill="#dcdcdc" font-weight="400" text-anchor="end">15</text><line x1="925.5" y1="205.5" x2="1085.5" y2="205.5" stroke="#a6a6a6" stroke-width="1.5"/><text x="925.2" y="211.0" font-size="15.94" fill="#dcdcdc" font-weight="400" text-anchor="end">10</text><line x1="925.5" y1="261.5" x2="1085.5" y2="261.5" stroke="#a6a6a6" stroke-width="1.5"/><text x="925.2" y="267.0" font-size="15.94" fill="#dcdcdc" font-weight="400" text-anchor="end">5</text><line x1="925.5" y1="317.4" x2="1085.5" y2="317.4" stroke="#a6a6a6" stroke-width="1.5"/><text x="925.2" y="322.9" font-size="15.94" fill="#dcdcdc" font-weight="400" text-anchor="end">0</text><line x1="925.5" y1="373.4" x2="1085.5" y2="373.4" stroke="#a6a6a6" stroke-width="1.5"/><text x="925.2" y="378.9" font-size="15.94" fill="#dcdcdc" font-weight="400" text-anchor="end">-5</text><line x1="925.5" y1="429.4" x2="1085.5" y2="429.4" stroke="#a6a6a6" stroke-width="1.5"/><text x="925.2" y="434.9" font-size="15.94" fill="#dcdcdc" font-weight="400" text-anchor="end">-10</text><line x1="925.5" y1="485.4" x2="1085.5" y2="485.4" stroke="#a6a6a6" stroke-width="1.5"/><text x="925.2" y="490.9" font-size="15.94" fill="#dcdcdc" font-weight="400" text-anchor="end">-15</text><rect x="932.0" y="149.5" width="153.5" height="335.9" fill="none" stroke="#a6a6a6" stroke-width="2"/><line x1="932.0" y1="485.4" x2="932.0" y2="491.7" stroke="#a6a6a6" stroke-width="1.6"/><line x1="1085.5" y1="485.4" x2="1085.5" y2="491.7" stroke="#a6a6a6" stroke-width="1.6"/><text x="1008.8" y="502.6" font-size="16.23" fill="#dcdcdc" font-weight="400" text-anchor="middle" textLength="40.0" lengthAdjust="spacingAndGlyphs">100W</text><line x1="946.5" y1="317.4" x2="1070.5" y2="317.4" stroke="#111" stroke-width="1.6"/><rect x="475.0" y="520.0" width="630.0" height="174.0" fill="#000"/><rect x="494.3" y="528.5" width="66.5" height="141.5" fill="#fcfcfe" stroke="#f0f0f0" stroke-width="1.2"/><rect x="494.9" y="529.1" width="65.3" height="70.9" fill="#c0c0c0"/><rect x="494.9" y="599.0" width="65.3" height="70.4" fill="#c0c0c0"/><text x="527.5" y="686.0" font-size="13.91" fill="#f0f0f0" font-weight="400" text-anchor="middle">White</text><rect x="571.4" y="528.5" width="66.5" height="141.5" fill="#fcfcfe" stroke="#f0f0f0" stroke-width="1.2"/><rect x="572.0" y="529.1" width="65.3" height="70.9" fill="#c00000"/><rect x="572.0" y="599.0" width="65.3" height="70.4" fill="#c01212"/><text x="604.6" y="686.0" font-size="13.91" fill="#f0f0f0" font-weight="400" text-anchor="middle">Red</text><rect x="648.5" y="528.5" width="66.5" height="141.5" fill="#fcfcfe" stroke="#f0f0f0" stroke-width="1.2"/><rect x="649.1" y="529.1" width="65.3" height="70.9" fill="#00c000"/><rect x="649.1" y="599.0" width="65.3" height="70.4" fill="#12c012"/><text x="681.8" y="686.0" font-size="13.91" fill="#f0f0f0" font-weight="400" text-anchor="middle">Green</text><rect x="725.6" y="528.5" width="66.5" height="141.5" fill="#fcfcfe" stroke="#f0f0f0" stroke-width="1.2"/><rect x="726.2" y="529.1" width="65.3" height="70.9" fill="#0010c0"/><rect x="726.2" y="599.0" width="65.3" height="70.4" fill="#1212c0"/><text x="758.9" y="686.0" font-size="13.91" fill="#f0f0f0" font-weight="400" text-anchor="middle">Blue</text><rect x="802.7" y="528.5" width="66.5" height="141.5" fill="#fcfcfe" stroke="#f0f0f0" stroke-width="1.2"/><rect x="803.3" y="529.1" width="65.3" height="70.9" fill="#00c0c0"/><rect x="803.3" y="599.0" width="65.3" height="70.4" fill="#20c0c0"/><text x="836.0" y="686.0" font-size="13.91" fill="#f0f0f0" font-weight="400" text-anchor="middle">Cyan</text><rect x="879.8" y="528.5" width="66.5" height="141.5" fill="#fcfcfe" stroke="#f0f0f0" stroke-width="1.2"/><rect x="880.4" y="529.1" width="65.3" height="70.9" fill="#c000c0"/><rect x="880.4" y="599.0" width="65.3" height="70.4" fill="#c012c0"/><text x="913.0" y="686.0" font-size="13.91" fill="#f0f0f0" font-weight="400" text-anchor="middle">Magenta</text><rect x="956.9" y="528.5" width="66.5" height="141.5" fill="#fcfcfe" stroke="#f0f0f0" stroke-width="1.2"/><rect x="957.5" y="529.1" width="65.3" height="70.9" fill="#c0c000"/><rect x="957.5" y="599.0" width="65.3" height="70.4" fill="#c0c010"/><text x="990.1" y="686.0" font-size="13.91" fill="#f0f0f0" font-weight="400" text-anchor="middle">Yellow</text><rect x="1034.0" y="528.5" width="66.5" height="141.5" fill="#fcfcfe" stroke="#f0f0f0" stroke-width="1.2"/><rect x="1034.6" y="529.1" width="65.3" height="70.9" fill="#fcfcfe"/><rect x="1034.6" y="599.0" width="65.3" height="70.4" fill="#fcfcfe"/><text x="1067.2" y="686.0" font-size="13.91" fill="#f0f0f0" font-weight="400" text-anchor="middle">100W</text><text x="0.0" y="0.0" font-size="13.04" fill="#f0f0f0" font-weight="400" text-anchor="middle" transform="translate(489,560) rotate(-90)">Actual</text><text x="0.0" y="0.0" font-size="13.04" fill="#f0f0f0" font-weight="400" text-anchor="middle" transform="translate(489,638) rotate(-90)">Target</text><rect x="1116.5" y="118" width="733" height="587" fill="#333" stroke="#1c1c1c" stroke-width="7"/><text x="1483.2" y="142.0" font-size="15.94" fill="#dcdcdc" font-weight="400" text-anchor="middle" textLength="80.5" lengthAdjust="spacingAndGlyphs">CIE 1931 xy</text><rect x="1152.0" y="146.5" width="690.0" height="524.5" fill="#252525"/><g clip-path="url(#clocus)"><rect x="1153" y="150" width="600" height="3" fill="url(#o0)"/><rect x="1153" y="153" width="600" height="3" fill="url(#o1)"/><rect x="1153" y="156" width="600" height="3" fill="url(#o2)"/><rect x="1153" y="159" width="600" height="3" fill="url(#o3)"/><rect x="1153" y="162" width="600" height="3" fill="url(#o4)"/><rect x="1153" y="165" width="600" height="3" fill="url(#o5)"/><rect x="1153" y="168" width="600" height="3" fill="url(#o6)"/><rect x="1153" y="171" width="600" height="3" fill="url(#o7)"/><rect x="1153" y="174" width="600" height="3" fill="url(#o8)"/><rect x="1153" y="177" width="600" height="3" fill="url(#o9)"/><rect x="1153" y="180" width="600" height="3" fill="url(#o10)"/><rect x="1153" y="183" width="600" height="3" fill="url(#o11)"/><rect x="1153" y="186" width="600" height="3" fill="url(#o12)"/><rect x="1153" y="189" width="600" height="3" fill="url(#o13)"/><rect x="1153" y="192" width="600" height="3" fill="url(#o14)"/><rect x="1153" y="195" width="600" height="3" fill="url(#o15)"/><rect x="1153" y="198" width="600" height="3" fill="url(#o16)"/><rect x="1153" y="201" width="600" height="3" fill="url(#o17)"/><rect x="1153" y="204" width="600" height="3" fill="url(#o18)"/><rect x="1153" y="207" width="600" height="3" fill="url(#o19)"/><rect x="1153" y="210" width="600" height="3" fill="url(#o20)"/><rect x="1153" y="213" width="600" height="3" fill="url(#o21)"/><rect x="1153" y="216" width="600" height="3" fill="url(#o22)"/><rect x="1153" y="219" width="600" height="3" fill="url(#o23)"/><rect x="1153" y="222" width="600" height="3" fill="url(#o24)"/><rect x="1153" y="225" width="600" height="3" fill="url(#o25)"/><rect x="1153" y="228" width="600" height="3" fill="url(#o26)"/><rect x="1153" y="231" width="600" height="3" fill="url(#o27)"/><rect x="1153" y="234" width="600" height="3" fill="url(#o28)"/><rect x="1153" y="237" width="600" height="3" fill="url(#o29)"/><rect x="1153" y="240" width="600" height="3" fill="url(#o30)"/><rect x="1153" y="243" width="600" height="3" fill="url(#o31)"/><rect x="1153" y="246" width="600" height="3" fill="url(#o32)"/><rect x="1153" y="249" width="600" height="3" fill="url(#o33)"/><rect x="1153" y="252" width="600" height="3" fill="url(#o34)"/><rect x="1153" y="255" width="600" height="3" fill="url(#o35)"/><rect x="1153" y="258" width="600" height="3" fill="url(#o36)"/><rect x="1153" y="261" width="600" height="3" fill="url(#o37)"/><rect x="1153" y="264" width="600" height="3" fill="url(#o38)"/><rect x="1153" y="267" width="600" height="3" fill="url(#o39)"/><rect x="1153" y="270" width="600" height="3" fill="url(#o40)"/><rect x="1153" y="273" width="600" height="3" fill="url(#o41)"/><rect x="1153" y="276" width="600" height="3" fill="url(#o42)"/><rect x="1153" y="279" width="600" height="3" fill="url(#o43)"/><rect x="1153" y="282" width="600" height="3" fill="url(#o44)"/><rect x="1153" y="285" width="600" height="3" fill="url(#o45)"/><rect x="1153" y="288" width="600" height="3" fill="url(#o46)"/><rect x="1153" y="291" width="600" height="3" fill="url(#o47)"/><rect x="1153" y="294" width="600" height="3" fill="url(#o48)"/><rect x="1153" y="297" width="600" height="3" fill="url(#o49)"/><rect x="1153" y="300" width="600" height="3" fill="url(#o50)"/><rect x="1153" y="303" width="600" height="3" fill="url(#o51)"/><rect x="1153" y="306" width="600" height="3" fill="url(#o52)"/><rect x="1153" y="309" width="600" height="3" fill="url(#o53)"/><rect x="1153" y="312" width="600" height="3" fill="url(#o54)"/><rect x="1153" y="315" width="600" height="3" fill="url(#o55)"/><rect x="1153" y="318" width="600" height="3" fill="url(#o56)"/><rect x="1153" y="321" width="600" height="3" fill="url(#o57)"/><rect x="1153" y="324" width="600" height="3" fill="url(#o58)"/><rect x="1153" y="327" width="600" height="3" fill="url(#o59)"/><rect x="1153" y="330" width="600" height="3" fill="url(#o60)"/><rect x="1153" y="333" width="600" height="3" fill="url(#o61)"/><rect x="1153" y="336" width="600" height="3" fill="url(#o62)"/><rect x="1153" y="339" width="600" height="3" fill="url(#o63)"/><rect x="1153" y="342" width="600" height="3" fill="url(#o64)"/><rect x="1153" y="345" width="600" height="3" fill="url(#o65)"/><rect x="1153" y="348" width="600" height="3" fill="url(#o66)"/><rect x="1153" y="351" width="600" height="3" fill="url(#o67)"/><rect x="1153" y="354" width="600" height="3" fill="url(#o68)"/><rect x="1153" y="357" width="600" height="3" fill="url(#o69)"/><rect x="1153" y="360" width="600" height="3" fill="url(#o70)"/><rect x="1153" y="363" width="600" height="3" fill="url(#o71)"/><rect x="1153" y="366" width="600" height="3" fill="url(#o72)"/><rect x="1153" y="369" width="600" height="3" fill="url(#o73)"/><rect x="1153" y="372" width="600" height="3" fill="url(#o74)"/><rect x="1153" y="375" width="600" height="3" fill="url(#o75)"/><rect x="1153" y="378" width="600" height="3" fill="url(#o76)"/><rect x="1153" y="381" width="600" height="3" fill="url(#o77)"/><rect x="1153" y="384" width="600" height="3" fill="url(#o78)"/><rect x="1153" y="387" width="600" height="3" fill="url(#o79)"/><rect x="1153" y="390" width="600" height="3" fill="url(#o80)"/><rect x="1153" y="393" width="600" height="3" fill="url(#o81)"/><rect x="1153" y="396" width="600" height="3" fill="url(#o82)"/><rect x="1153" y="399" width="600" height="3" fill="url(#o83)"/><rect x="1153" y="402" width="600" height="3" fill="url(#o84)"/><rect x="1153" y="405" width="600" height="3" fill="url(#o85)"/><rect x="1153" y="408" width="600" height="3" fill="url(#o86)"/><rect x="1153" y="411" width="600" height="3" fill="url(#o87)"/><rect x="1153" y="414" width="600" height="3" fill="url(#o88)"/><rect x="1153" y="417" width="600" height="3" fill="url(#o89)"/><rect x="1153" y="420" width="600" height="3" fill="url(#o90)"/><rect x="1153" y="423" width="600" height="3" fill="url(#o91)"/><rect x="1153" y="426" width="600" height="3" fill="url(#o92)"/><rect x="1153" y="429" width="600" height="3" fill="url(#o93)"/><rect x="1153" y="432" width="600" height="3" fill="url(#o94)"/><rect x="1153" y="435" width="600" height="3" fill="url(#o95)"/><rect x="1153" y="438" width="600" height="3" fill="url(#o96)"/><rect x="1153" y="441" width="600" height="3" fill="url(#o97)"/><rect x="1153" y="444" width="600" height="3" fill="url(#o98)"/><rect x="1153" y="447" width="600" height="3" fill="url(#o99)"/><rect x="1153" y="450" width="600" height="3" fill="url(#o100)"/><rect x="1153" y="453" width="600" height="3" fill="url(#o101)"/><rect x="1153" y="456" width="600" height="3" fill="url(#o102)"/><rect x="1153" y="459" width="600" height="3" fill="url(#o103)"/><rect x="1153" y="462" width="600" height="3" fill="url(#o104)"/><rect x="1153" y="465" width="600" height="3" fill="url(#o105)"/><rect x="1153" y="468" width="600" height="3" fill="url(#o106)"/><rect x="1153" y="471" width="600" height="3" fill="url(#o107)"/><rect x="1153" y="474" width="600" height="3" fill="url(#o108)"/><rect x="1153" y="477" width="600" height="3" fill="url(#o109)"/><rect x="1153" y="480" width="600" height="3" fill="url(#o110)"/><rect x="1153" y="483" width="600" height="3" fill="url(#o111)"/><rect x="1153" y="486" width="600" height="3" fill="url(#o112)"/><rect x="1153" y="489" width="600" height="3" fill="url(#o113)"/><rect x="1153" y="492" width="600" height="3" fill="url(#o114)"/><rect x="1153" y="495" width="600" height="3" fill="url(#o115)"/><rect x="1153" y="498" width="600" height="3" fill="url(#o116)"/><rect x="1153" y="501" width="600" height="3" fill="url(#o117)"/><rect x="1153" y="504" width="600" height="3" fill="url(#o118)"/><rect x="1153" y="507" width="600" height="3" fill="url(#o119)"/><rect x="1153" y="510" width="600" height="3" fill="url(#o120)"/><rect x="1153" y="513" width="600" height="3" fill="url(#o121)"/><rect x="1153" y="516" width="600" height="3" fill="url(#o122)"/><rect x="1153" y="519" width="600" height="3" fill="url(#o123)"/><rect x="1153" y="522" width="600" height="3" fill="url(#o124)"/><rect x="1153" y="525" width="600" height="3" fill="url(#o125)"/><rect x="1153" y="528" width="600" height="3" fill="url(#o126)"/><rect x="1153" y="531" width="600" height="3" fill="url(#o127)"/><rect x="1153" y="534" width="600" height="3" fill="url(#o128)"/><rect x="1153" y="537" width="600" height="3" fill="url(#o129)"/><rect x="1153" y="540" width="600" height="3" fill="url(#o130)"/><rect x="1153" y="543" width="600" height="3" fill="url(#o131)"/><rect x="1153" y="546" width="600" height="3" fill="url(#o132)"/><rect x="1153" y="549" width="600" height="3" fill="url(#o133)"/><rect x="1153" y="552" width="600" height="3" fill="url(#o134)"/><rect x="1153" y="555" width="600" height="3" fill="url(#o135)"/><rect x="1153" y="558" width="600" height="3" fill="url(#o136)"/><rect x="1153" y="561" width="600" height="3" fill="url(#o137)"/><rect x="1153" y="564" width="600" height="3" fill="url(#o138)"/><rect x="1153" y="567" width="600" height="3" fill="url(#o139)"/><rect x="1153" y="570" width="600" height="3" fill="url(#o140)"/><rect x="1153" y="573" width="600" height="3" fill="url(#o141)"/><rect x="1153" y="576" width="600" height="3" fill="url(#o142)"/><rect x="1153" y="579" width="600" height="3" fill="url(#o143)"/><rect x="1153" y="582" width="600" height="3" fill="url(#o144)"/><rect x="1153" y="585" width="600" height="3" fill="url(#o145)"/><rect x="1153" y="588" width="600" height="3" fill="url(#o146)"/><rect x="1153" y="591" width="600" height="3" fill="url(#o147)"/><rect x="1153" y="594" width="600" height="3" fill="url(#o148)"/><rect x="1153" y="597" width="600" height="3" fill="url(#o149)"/><rect x="1153" y="600" width="600" height="3" fill="url(#o150)"/><rect x="1153" y="603" width="600" height="3" fill="url(#o151)"/><rect x="1153" y="606" width="600" height="3" fill="url(#o152)"/><rect x="1153" y="609" width="600" height="3" fill="url(#o153)"/><rect x="1153" y="612" width="600" height="3" fill="url(#o154)"/><rect x="1153" y="615" width="600" height="3" fill="url(#o155)"/><rect x="1153" y="618" width="600" height="3" fill="url(#o156)"/><rect x="1153" y="621" width="600" height="3" fill="url(#o157)"/><rect x="1153" y="624" width="600" height="3" fill="url(#o158)"/><rect x="1153" y="627" width="600" height="3" fill="url(#o159)"/><rect x="1153" y="630" width="600" height="3" fill="url(#o160)"/><rect x="1153" y="633" width="600" height="3" fill="url(#o161)"/><rect x="1153" y="636" width="600" height="3" fill="url(#o162)"/><rect x="1153" y="639" width="600" height="3" fill="url(#o163)"/><rect x="1153" y="642" width="600" height="3" fill="url(#o164)"/><rect x="1153" y="645" width="600" height="3" fill="url(#o165)"/><rect x="1153" y="648" width="600" height="3" fill="url(#o166)"/><rect x="1153" y="651" width="600" height="3" fill="url(#o167)"/><rect x="1153" y="654" width="600" height="3" fill="url(#o168)"/><rect x="1153" y="657" width="600" height="3" fill="url(#o169)"/><rect x="1153" y="660" width="600" height="3" fill="url(#o170)"/><rect x="1153" y="663" width="600" height="3" fill="url(#o171)"/><rect x="1153" y="666" width="600" height="3" fill="url(#o172)"/></g><g clip-path="url(#ctri)"><rect x="1274" y="296" width="406" height="2" fill="url(#t0)"/><rect x="1274" y="298" width="406" height="2" fill="url(#t1)"/><rect x="1274" y="300" width="406" height="2" fill="url(#t2)"/><rect x="1274" y="302" width="406" height="2" fill="url(#t3)"/><rect x="1274" y="304" width="406" height="2" fill="url(#t4)"/><rect x="1274" y="306" width="406" height="2" fill="url(#t5)"/><rect x="1274" y="308" width="406" height="2" fill="url(#t6)"/><rect x="1274" y="310" width="406" height="2" fill="url(#t7)"/><rect x="1274" y="312" width="406" height="2" fill="url(#t8)"/><rect x="1274" y="314" width="406" height="2" fill="url(#t9)"/><rect x="1274" y="316" width="406" height="2" fill="url(#t10)"/><rect x="1274" y="318" width="406" height="2" fill="url(#t11)"/><rect x="1274" y="320" width="406" height="2" fill="url(#t12)"/><rect x="1274" y="322" width="406" height="2" fill="url(#t13)"/><rect x="1274" y="324" width="406" height="2" fill="url(#t14)"/><rect x="1274" y="326" width="406" height="2" fill="url(#t15)"/><rect x="1274" y="328" width="406" height="2" fill="url(#t16)"/><rect x="1274" y="330" width="406" height="2" fill="url(#t17)"/><rect x="1274" y="332" width="406" height="2" fill="url(#t18)"/><rect x="1274" y="334" width="406" height="2" fill="url(#t19)"/><rect x="1274" y="336" width="406" height="2" fill="url(#t20)"/><rect x="1274" y="338" width="406" height="2" fill="url(#t21)"/><rect x="1274" y="340" width="406" height="2" fill="url(#t22)"/><rect x="1274" y="342" width="406" height="2" fill="url(#t23)"/><rect x="1274" y="344" width="406" height="2" fill="url(#t24)"/><rect x="1274" y="346" width="406" height="2" fill="url(#t25)"/><rect x="1274" y="348" width="406" height="2" fill="url(#t26)"/><rect x="1274" y="350" width="406" height="2" fill="url(#t27)"/><rect x="1274" y="352" width="406" height="2" fill="url(#t28)"/><rect x="1274" y="354" width="406" height="2" fill="url(#t29)"/><rect x="1274" y="356" width="406" height="2" fill="url(#t30)"/><rect x="1274" y="358" width="406" height="2" fill="url(#t31)"/><rect x="1274" y="360" width="406" height="2" fill="url(#t32)"/><rect x="1274" y="362" width="406" height="2" fill="url(#t33)"/><rect x="1274" y="364" width="406" height="2" fill="url(#t34)"/><rect x="1274" y="366" width="406" height="2" fill="url(#t35)"/><rect x="1274" y="368" width="406" height="2" fill="url(#t36)"/><rect x="1274" y="370" width="406" height="2" fill="url(#t37)"/><rect x="1274" y="372" width="406" height="2" fill="url(#t38)"/><rect x="1274" y="374" width="406" height="2" fill="url(#t39)"/><rect x="1274" y="376" width="406" height="2" fill="url(#t40)"/><rect x="1274" y="378" width="406" height="2" fill="url(#t41)"/><rect x="1274" y="380" width="406" height="2" fill="url(#t42)"/><rect x="1274" y="382" width="406" height="2" fill="url(#t43)"/><rect x="1274" y="384" width="406" height="2" fill="url(#t44)"/><rect x="1274" y="386" width="406" height="2" fill="url(#t45)"/><rect x="1274" y="388" width="406" height="2" fill="url(#t46)"/><rect x="1274" y="390" width="406" height="2" fill="url(#t47)"/><rect x="1274" y="392" width="406" height="2" fill="url(#t48)"/><rect x="1274" y="394" width="406" height="2" fill="url(#t49)"/><rect x="1274" y="396" width="406" height="2" fill="url(#t50)"/><rect x="1274" y="398" width="406" height="2" fill="url(#t51)"/><rect x="1274" y="400" width="406" height="2" fill="url(#t52)"/><rect x="1274" y="402" width="406" height="2" fill="url(#t53)"/><rect x="1274" y="404" width="406" height="2" fill="url(#t54)"/><rect x="1274" y="406" width="406" height="2" fill="url(#t55)"/><rect x="1274" y="408" width="406" height="2" fill="url(#t56)"/><rect x="1274" y="410" width="406" height="2" fill="url(#t57)"/><rect x="1274" y="412" width="406" height="2" fill="url(#t58)"/><rect x="1274" y="414" width="406" height="2" fill="url(#t59)"/><rect x="1274" y="416" width="406" height="2" fill="url(#t60)"/><rect x="1274" y="418" width="406" height="2" fill="url(#t61)"/><rect x="1274" y="420" width="406" height="2" fill="url(#t62)"/><rect x="1274" y="422" width="406" height="2" fill="url(#t63)"/><rect x="1274" y="424" width="406" height="2" fill="url(#t64)"/><rect x="1274" y="426" width="406" height="2" fill="url(#t65)"/><rect x="1274" y="428" width="406" height="2" fill="url(#t66)"/><rect x="1274" y="430" width="406" height="2" fill="url(#t67)"/><rect x="1274" y="432" width="406" height="2" fill="url(#t68)"/><rect x="1274" y="434" width="406" height="2" fill="url(#t69)"/><rect x="1274" y="436" width="406" height="2" fill="url(#t70)"/><rect x="1274" y="438" width="406" height="2" fill="url(#t71)"/><rect x="1274" y="440" width="406" height="2" fill="url(#t72)"/><rect x="1274" y="442" width="406" height="2" fill="url(#t73)"/><rect x="1274" y="444" width="406" height="2" fill="url(#t74)"/><rect x="1274" y="446" width="406" height="2" fill="url(#t75)"/><rect x="1274" y="448" width="406" height="2" fill="url(#t76)"/><rect x="1274" y="450" width="406" height="2" fill="url(#t77)"/><rect x="1274" y="452" width="406" height="2" fill="url(#t78)"/><rect x="1274" y="454" width="406" height="2" fill="url(#t79)"/><rect x="1274" y="456" width="406" height="2" fill="url(#t80)"/><rect x="1274" y="458" width="406" height="2" fill="url(#t81)"/><rect x="1274" y="460" width="406" height="2" fill="url(#t82)"/><rect x="1274" y="462" width="406" height="2" fill="url(#t83)"/><rect x="1274" y="464" width="406" height="2" fill="url(#t84)"/><rect x="1274" y="466" width="406" height="2" fill="url(#t85)"/><rect x="1274" y="468" width="406" height="2" fill="url(#t86)"/><rect x="1274" y="470" width="406" height="2" fill="url(#t87)"/><rect x="1274" y="472" width="406" height="2" fill="url(#t88)"/><rect x="1274" y="474" width="406" height="2" fill="url(#t89)"/><rect x="1274" y="476" width="406" height="2" fill="url(#t90)"/><rect x="1274" y="478" width="406" height="2" fill="url(#t91)"/><rect x="1274" y="480" width="406" height="2" fill="url(#t92)"/><rect x="1274" y="482" width="406" height="2" fill="url(#t93)"/><rect x="1274" y="484" width="406" height="2" fill="url(#t94)"/><rect x="1274" y="486" width="406" height="2" fill="url(#t95)"/><rect x="1274" y="488" width="406" height="2" fill="url(#t96)"/><rect x="1274" y="490" width="406" height="2" fill="url(#t97)"/><rect x="1274" y="492" width="406" height="2" fill="url(#t98)"/><rect x="1274" y="494" width="406" height="2" fill="url(#t99)"/><rect x="1274" y="496" width="406" height="2" fill="url(#t100)"/><rect x="1274" y="498" width="406" height="2" fill="url(#t101)"/><rect x="1274" y="500" width="406" height="2" fill="url(#t102)"/><rect x="1274" y="502" width="406" height="2" fill="url(#t103)"/><rect x="1274" y="504" width="406" height="2" fill="url(#t104)"/><rect x="1274" y="506" width="406" height="2" fill="url(#t105)"/><rect x="1274" y="508" width="406" height="2" fill="url(#t106)"/><rect x="1274" y="510" width="406" height="2" fill="url(#t107)"/><rect x="1274" y="512" width="406" height="2" fill="url(#t108)"/><rect x="1274" y="514" width="406" height="2" fill="url(#t109)"/><rect x="1274" y="516" width="406" height="2" fill="url(#t110)"/><rect x="1274" y="518" width="406" height="2" fill="url(#t111)"/><rect x="1274" y="520" width="406" height="2" fill="url(#t112)"/><rect x="1274" y="522" width="406" height="2" fill="url(#t113)"/><rect x="1274" y="524" width="406" height="2" fill="url(#t114)"/><rect x="1274" y="526" width="406" height="2" fill="url(#t115)"/><rect x="1274" y="528" width="406" height="2" fill="url(#t116)"/><rect x="1274" y="530" width="406" height="2" fill="url(#t117)"/><rect x="1274" y="532" width="406" height="2" fill="url(#t118)"/><rect x="1274" y="534" width="406" height="2" fill="url(#t119)"/><rect x="1274" y="536" width="406" height="2" fill="url(#t120)"/><rect x="1274" y="538" width="406" height="2" fill="url(#t121)"/><rect x="1274" y="540" width="406" height="2" fill="url(#t122)"/><rect x="1274" y="542" width="406" height="2" fill="url(#t123)"/><rect x="1274" y="544" width="406" height="2" fill="url(#t124)"/><rect x="1274" y="546" width="406" height="2" fill="url(#t125)"/><rect x="1274" y="548" width="406" height="2" fill="url(#t126)"/><rect x="1274" y="550" width="406" height="2" fill="url(#t127)"/><rect x="1274" y="552" width="406" height="2" fill="url(#t128)"/><rect x="1274" y="554" width="406" height="2" fill="url(#t129)"/><rect x="1274" y="556" width="406" height="2" fill="url(#t130)"/><rect x="1274" y="558" width="406" height="2" fill="url(#t131)"/><rect x="1274" y="560" width="406" height="2" fill="url(#t132)"/><rect x="1274" y="562" width="406" height="2" fill="url(#t133)"/><rect x="1274" y="564" width="406" height="2" fill="url(#t134)"/><rect x="1274" y="566" width="406" height="2" fill="url(#t135)"/><rect x="1274" y="568" width="406" height="2" fill="url(#t136)"/><rect x="1274" y="570" width="406" height="2" fill="url(#t137)"/><rect x="1274" y="572" width="406" height="2" fill="url(#t138)"/><rect x="1274" y="574" width="406" height="2" fill="url(#t139)"/><rect x="1274" y="576" width="406" height="2" fill="url(#t140)"/><rect x="1274" y="578" width="406" height="2" fill="url(#t141)"/><rect x="1274" y="580" width="406" height="2" fill="url(#t142)"/><rect x="1274" y="582" width="406" height="2" fill="url(#t143)"/><rect x="1274" y="584" width="406" height="2" fill="url(#t144)"/><rect x="1274" y="586" width="406" height="2" fill="url(#t145)"/><rect x="1274" y="588" width="406" height="2" fill="url(#t146)"/><rect x="1274" y="590" width="406" height="2" fill="url(#t147)"/><rect x="1274" y="592" width="406" height="2" fill="url(#t148)"/><rect x="1274" y="594" width="406" height="2" fill="url(#t149)"/><rect x="1274" y="596" width="406" height="2" fill="url(#t150)"/><rect x="1274" y="598" width="406" height="2" fill="url(#t151)"/><rect x="1274" y="600" width="406" height="2" fill="url(#t152)"/><rect x="1274" y="602" width="406" height="2" fill="url(#t153)"/><rect x="1274" y="604" width="406" height="2" fill="url(#t154)"/><rect x="1274" y="606" width="406" height="2" fill="url(#t155)"/><rect x="1274" y="608" width="406" height="2" fill="url(#t156)"/><rect x="1274" y="610" width="406" height="2" fill="url(#t157)"/><rect x="1274" y="612" width="406" height="2" fill="url(#t158)"/><rect x="1274" y="614" width="406" height="2" fill="url(#t159)"/><rect x="1274" y="616" width="406" height="2" fill="url(#t160)"/><rect x="1274" y="618" width="406" height="2" fill="url(#t161)"/><rect x="1274" y="620" width="406" height="2" fill="url(#t162)"/><rect x="1274" y="622" width="406" height="2" fill="url(#t163)"/><rect x="1274" y="624" width="406" height="2" fill="url(#t164)"/><rect x="1274" y="626" width="406" height="2" fill="url(#t165)"/><rect x="1274" y="628" width="406" height="2" fill="url(#t166)"/><rect x="1274" y="630" width="406" height="2" fill="url(#t167)"/><rect x="1274" y="632" width="406" height="2" fill="url(#t168)"/><rect x="1274" y="634" width="406" height="2" fill="url(#t169)"/></g><rect x="1152" y="146.5" width="690" height="524.5" fill="none" stroke="#a6a6a6" stroke-width="2"/><line x1="1151.9" y1="671.0" x2="1151.9" y2="677.0" stroke="#a6a6a6" stroke-width="1.6"/><text x="1151.9" y="694.3" font-size="15.94" fill="#dcdcdc" font-weight="400" text-anchor="middle">0</text><line x1="1146.0" y1="670.8" x2="1152.0" y2="670.8" stroke="#a6a6a6" stroke-width="1.6"/><text x="1145.3" y="676.3" font-size="15.94" fill="#dcdcdc" font-weight="400" text-anchor="end">0</text><line x1="1234.0" y1="671.0" x2="1234.0" y2="677.0" stroke="#a6a6a6" stroke-width="1.6"/><text x="1234.0" y="694.3" font-size="15.94" fill="#dcdcdc" font-weight="400" text-anchor="middle">0,1</text><line x1="1146.0" y1="608.6" x2="1152.0" y2="608.6" stroke="#a6a6a6" stroke-width="1.6"/><text x="1145.3" y="614.1" font-size="15.94" fill="#dcdcdc" font-weight="400" text-anchor="end">0,1</text><line x1="1316.1" y1="671.0" x2="1316.1" y2="677.0" stroke="#a6a6a6" stroke-width="1.6"/><text x="1316.1" y="694.3" font-size="15.94" fill="#dcdcdc" font-weight="400" text-anchor="middle">0,2</text><line x1="1146.0" y1="546.4" x2="1152.0" y2="546.4" stroke="#a6a6a6" stroke-width="1.6"/><text x="1145.3" y="551.9" font-size="15.94" fill="#dcdcdc" font-weight="400" text-anchor="end">0,2</text><line x1="1398.2" y1="671.0" x2="1398.2" y2="677.0" stroke="#a6a6a6" stroke-width="1.6"/><text x="1398.2" y="694.3" font-size="15.94" fill="#dcdcdc" font-weight="400" text-anchor="middle">0,3</text><line x1="1146.0" y1="484.2" x2="1152.0" y2="484.2" stroke="#a6a6a6" stroke-width="1.6"/><text x="1145.3" y="489.7" font-size="15.94" fill="#dcdcdc" font-weight="400" text-anchor="end">0,3</text><line x1="1480.3" y1="671.0" x2="1480.3" y2="677.0" stroke="#a6a6a6" stroke-width="1.6"/><text x="1480.3" y="694.3" font-size="15.94" fill="#dcdcdc" font-weight="400" text-anchor="middle">0,4</text><line x1="1146.0" y1="422.0" x2="1152.0" y2="422.0" stroke="#a6a6a6" stroke-width="1.6"/><text x="1145.3" y="427.5" font-size="15.94" fill="#dcdcdc" font-weight="400" text-anchor="end">0,4</text><line x1="1562.4" y1="671.0" x2="1562.4" y2="677.0" stroke="#a6a6a6" stroke-width="1.6"/><text x="1562.4" y="694.3" font-size="15.94" fill="#dcdcdc" font-weight="400" text-anchor="middle">0,5</text><line x1="1146.0" y1="359.8" x2="1152.0" y2="359.8" stroke="#a6a6a6" stroke-width="1.6"/><text x="1145.3" y="365.3" font-size="15.94" fill="#dcdcdc" font-weight="400" text-anchor="end">0,5</text><line x1="1644.5" y1="671.0" x2="1644.5" y2="677.0" stroke="#a6a6a6" stroke-width="1.6"/><text x="1644.5" y="694.3" font-size="15.94" fill="#dcdcdc" font-weight="400" text-anchor="middle">0,6</text><line x1="1146.0" y1="297.6" x2="1152.0" y2="297.6" stroke="#a6a6a6" stroke-width="1.6"/><text x="1145.3" y="303.1" font-size="15.94" fill="#dcdcdc" font-weight="400" text-anchor="end">0,6</text><line x1="1726.6" y1="671.0" x2="1726.6" y2="677.0" stroke="#a6a6a6" stroke-width="1.6"/><text x="1726.6" y="694.3" font-size="15.94" fill="#dcdcdc" font-weight="400" text-anchor="middle">0,7</text><line x1="1146.0" y1="235.4" x2="1152.0" y2="235.4" stroke="#a6a6a6" stroke-width="1.6"/><text x="1145.3" y="240.9" font-size="15.94" fill="#dcdcdc" font-weight="400" text-anchor="end">0,7</text><line x1="1808.7" y1="671.0" x2="1808.7" y2="677.0" stroke="#a6a6a6" stroke-width="1.6"/><text x="1808.7" y="694.3" font-size="15.94" fill="#dcdcdc" font-weight="400" text-anchor="middle">0,8</text><line x1="1146.0" y1="173.2" x2="1152.0" y2="173.2" stroke="#a6a6a6" stroke-width="1.6"/><text x="1145.3" y="178.7" font-size="15.94" fill="#dcdcdc" font-weight="400" text-anchor="end">0,8</text><rect x="1601.5" y="152.8" width="234.5" height="197.7" fill="url(#insH)" stroke="#999" stroke-width="1.5"/><rect x="1600.5" y="152.5" width="236" height="199" fill="#222" stroke="#a0a0a0" stroke-width="1.5"/><rect x="1602.0" y="154.0" width="233.0" height="4.0" fill="url(#in0)"/><rect x="1602.0" y="158.0" width="233.0" height="4.0" fill="url(#in1)"/><rect x="1602.0" y="162.0" width="233.0" height="4.0" fill="url(#in2)"/><rect x="1602.0" y="166.0" width="233.0" height="4.0" fill="url(#in3)"/><rect x="1602.0" y="170.0" width="233.0" height="4.0" fill="url(#in4)"/><rect x="1602.0" y="174.0" width="233.0" height="4.0" fill="url(#in5)"/><rect x="1602.0" y="178.0" width="233.0" height="4.0" fill="url(#in6)"/><rect x="1602.0" y="182.0" width="233.0" height="4.0" fill="url(#in7)"/><rect x="1602.0" y="186.0" width="233.0" height="4.0" fill="url(#in8)"/><rect x="1602.0" y="190.0" width="233.0" height="4.0" fill="url(#in9)"/><rect x="1602.0" y="194.0" width="233.0" height="4.0" fill="url(#in10)"/><rect x="1602.0" y="198.0" width="233.0" height="4.0" fill="url(#in11)"/><rect x="1602.0" y="202.0" width="233.0" height="4.0" fill="url(#in12)"/><rect x="1602.0" y="206.0" width="233.0" height="4.0" fill="url(#in13)"/><rect x="1602.0" y="210.0" width="233.0" height="4.0" fill="url(#in14)"/><rect x="1602.0" y="214.0" width="233.0" height="4.0" fill="url(#in15)"/><rect x="1602.0" y="218.0" width="233.0" height="4.0" fill="url(#in16)"/><rect x="1602.0" y="222.0" width="233.0" height="4.0" fill="url(#in17)"/><rect x="1602.0" y="226.0" width="233.0" height="4.0" fill="url(#in18)"/><rect x="1602.0" y="230.0" width="233.0" height="4.0" fill="url(#in19)"/><rect x="1602.0" y="234.0" width="233.0" height="4.0" fill="url(#in20)"/><rect x="1602.0" y="238.0" width="233.0" height="4.0" fill="url(#in21)"/><rect x="1602.0" y="242.0" width="233.0" height="4.0" fill="url(#in22)"/><rect x="1602.0" y="246.0" width="233.0" height="4.0" fill="url(#in23)"/><rect x="1602.0" y="250.0" width="233.0" height="4.0" fill="url(#in24)"/><rect x="1602.0" y="254.0" width="233.0" height="4.0" fill="url(#in25)"/><rect x="1602.0" y="258.0" width="233.0" height="4.0" fill="url(#in26)"/><rect x="1602.0" y="262.0" width="233.0" height="4.0" fill="url(#in27)"/><rect x="1602.0" y="266.0" width="233.0" height="4.0" fill="url(#in28)"/><rect x="1602.0" y="270.0" width="233.0" height="4.0" fill="url(#in29)"/><rect x="1602.0" y="274.0" width="233.0" height="4.0" fill="url(#in30)"/><rect x="1602.0" y="278.0" width="233.0" height="4.0" fill="url(#in31)"/><rect x="1602.0" y="282.0" width="233.0" height="4.0" fill="url(#in32)"/><rect x="1602.0" y="286.0" width="233.0" height="4.0" fill="url(#in33)"/><rect x="1602.0" y="290.0" width="233.0" height="4.0" fill="url(#in34)"/><rect x="1602.0" y="294.0" width="233.0" height="4.0" fill="url(#in35)"/><rect x="1602.0" y="298.0" width="233.0" height="4.0" fill="url(#in36)"/><rect x="1602.0" y="302.0" width="233.0" height="4.0" fill="url(#in37)"/><rect x="1602.0" y="306.0" width="233.0" height="4.0" fill="url(#in38)"/><rect x="1602.0" y="310.0" width="233.0" height="4.0" fill="url(#in39)"/><rect x="1602.0" y="314.0" width="233.0" height="4.0" fill="url(#in40)"/><rect x="1602.0" y="318.0" width="233.0" height="4.0" fill="url(#in41)"/><rect x="1602.0" y="322.0" width="233.0" height="4.0" fill="url(#in42)"/><rect x="1602.0" y="326.0" width="233.0" height="4.0" fill="url(#in43)"/><rect x="1602.0" y="330.0" width="233.0" height="4.0" fill="url(#in44)"/><rect x="1602.0" y="334.0" width="233.0" height="4.0" fill="url(#in45)"/><rect x="1602.0" y="338.0" width="233.0" height="4.0" fill="url(#in46)"/><rect x="1602.0" y="342.0" width="233.0" height="4.0" fill="url(#in47)"/><rect x="1602.0" y="346.0" width="233.0" height="4.0" fill="url(#in48)"/><rect x="1710.5" y="245" width="15" height="15" fill="none" stroke="#000" stroke-width="1.8"/><circle cx="1720.6" cy="258.8" r="4.7" fill="none" stroke="#111" stroke-width="1.5"/><rect x="1390.2" y="289.3" width="14.5" height="14.5" fill="none" stroke="#e8ffe8" stroke-width="1.7"/><circle cx="1396.5" cy="293.7" r="4.5" fill="none" stroke="#161616" stroke-width="1.4"/><rect x="1669.3" y="457.3" width="14.5" height="14.5" fill="none" stroke="#ffe0e0" stroke-width="1.7"/><circle cx="1685.9" cy="463.9" r="4.5" fill="none" stroke="#161616" stroke-width="1.4"/><rect x="1267.0" y="625.2" width="14.5" height="14.5" fill="none" stroke="#e0e0ff" stroke-width="1.7"/><circle cx="1271.2" cy="634.0" r="4.5" fill="none" stroke="#161616" stroke-width="1.4"/><rect x="1328.2" y="458.1" width="14.5" height="14.5" fill="none" stroke="#e0ffff" stroke-width="1.7"/><circle cx="1332.7" cy="467.1" r="4.5" fill="none" stroke="#161616" stroke-width="1.4"/><rect x="1407.3" y="566.6" width="14.5" height="14.5" fill="none" stroke="#ffe0ff" stroke-width="1.7"/><circle cx="1416.0" cy="574.5" r="4.5" fill="none" stroke="#161616" stroke-width="1.4"/><rect x="1488.1" y="348.3" width="14.5" height="14.5" fill="none" stroke="#ffffe0" stroke-width="1.7"/><circle cx="1498.5" cy="355.9" r="4.5" fill="none" stroke="#161616" stroke-width="1.4"/><rect x="1400.6" y="457.9" width="14.5" height="14.5" fill="none" stroke="#000" stroke-width="1.7"/><circle cx="1408.1" cy="466.5" r="4.5" fill="none" stroke="#161616" stroke-width="1.4"/><rect x="1568.6" y="636.3" width="272.0" height="29.7" fill="#333"/><text x="1570.5" y="659.0" font-size="22.46" fill="#fff" font-weight="400" text-anchor="start" textLength="249.5" lengthAdjust="spacingAndGlyphs" xml:space="preserve">Gamut Coverage:  104,1%</text><text x="92.2" y="770.8" font-size="28.12" fill="#f4f4f4" font-weight="400" text-anchor="start" textLength="232.0" lengthAdjust="spacingAndGlyphs">Current Reading</text><text x="92.2" y="816.4" font-size="24.93" fill="#f4f4f4" font-weight="400" text-anchor="start" textLength="93.0" lengthAdjust="spacingAndGlyphs">x: 0,313</text><text x="92.2" y="860.0" font-size="24.93" fill="#f4f4f4" font-weight="400" text-anchor="start" textLength="109.0" lengthAdjust="spacingAndGlyphs">y: 0,3269</text><text x="92.2" y="903.0" font-size="24.93" fill="#f4f4f4" font-weight="400" text-anchor="start" textLength="117.0" lengthAdjust="spacingAndGlyphs">fL: 173,65</text><text x="92.2" y="946.0" font-size="24.93" fill="#f4f4f4" font-weight="400" text-anchor="start" textLength="169.3" lengthAdjust="spacingAndGlyphs">cd/m²: 594,98</text><text x="573.5" y="744.7" font-size="15.94" fill="#dcdcdc" font-weight="400" text-anchor="middle" textLength="87.8" lengthAdjust="spacingAndGlyphs">RGB Balance</text><rect x="456.0" y="749.5" width="266.5" height="192.5" fill="#252525"/><line x1="449.5" y1="770.0" x2="722.5" y2="770.0" stroke="#a6a6a6" stroke-width="1.5"/><text x="449.3" y="775.5" font-size="15.94" fill="#dcdcdc" font-weight="400" text-anchor="end">104</text><line x1="449.5" y1="809.4" x2="722.5" y2="809.4" stroke="#a6a6a6" stroke-width="1.5"/><text x="449.3" y="814.9" font-size="15.94" fill="#dcdcdc" font-weight="400" text-anchor="end">102</text><line x1="449.5" y1="846.8" x2="722.5" y2="846.8" stroke="#a6a6a6" stroke-width="1.5"/><text x="449.3" y="852.3" font-size="15.94" fill="#dcdcdc" font-weight="400" text-anchor="end">100</text><line x1="449.5" y1="886.1" x2="722.5" y2="886.1" stroke="#a6a6a6" stroke-width="1.5"/><text x="449.3" y="891.6" font-size="15.94" fill="#dcdcdc" font-weight="400" text-anchor="end">98</text><line x1="449.5" y1="923.9" x2="722.5" y2="923.9" stroke="#a6a6a6" stroke-width="1.5"/><text x="449.3" y="929.4" font-size="15.94" fill="#dcdcdc" font-weight="400" text-anchor="end">96</text><rect x="456.0" y="749.5" width="266.5" height="192.5" fill="none" stroke="#a6a6a6" stroke-width="2"/><line x1="456.0" y1="942.0" x2="456.0" y2="948.0" stroke="#a6a6a6" stroke-width="1.6"/><line x1="722.5" y1="942.0" x2="722.5" y2="948.0" stroke="#a6a6a6" stroke-width="1.6"/><text x="589.6" y="958.8" font-size="16.23" fill="#dcdcdc" font-weight="400" text-anchor="middle" textLength="40.0" lengthAdjust="spacingAndGlyphs">100W</text><rect x="482.8" y="833.3" width="68.2" height="108.7" fill="url(#rb_r)" stroke="#000" stroke-width="1.3"/><rect x="553.8" y="851.8" width="69.2" height="90.2" fill="url(#rb_g)" stroke="#000" stroke-width="1.3"/><rect x="624.3" y="836" width="69.3" height="106" fill="url(#rb_b)" stroke="#000" stroke-width="1.3"/><rect x="744.5" y="724.5" width="737.5" height="235.5" fill="#000"/><rect x="746.0" y="726.0" width="734.0" height="41.0" fill="url(#thead)"/><rect x="746.0" y="767.0" width="734.0" height="38.5" fill="#3d3d3d"/><rect x="746.0" y="805.5" width="734.0" height="38.3" fill="url(#tlight)"/><rect x="746.0" y="843.8" width="734.0" height="38.5" fill="#3d3d3d"/><rect x="746.0" y="882.3" width="734.0" height="39.2" fill="url(#tlight)"/><rect x="746.0" y="921.5" width="734.0" height="38.5" fill="#3d3d3d"/><text x="885.3" y="755.0" font-size="22.32" fill="#f0f0f0" font-weight="400" text-anchor="middle" textLength="44.0" lengthAdjust="spacingAndGlyphs">White</text><text x="963.4" y="755.0" font-size="22.32" fill="#f0f0f0" font-weight="400" text-anchor="middle" textLength="27.0" lengthAdjust="spacingAndGlyphs">Red</text><text x="1040.8" y="755.0" font-size="22.32" fill="#f0f0f0" font-weight="400" text-anchor="middle" textLength="45.0" lengthAdjust="spacingAndGlyphs">Green</text><text x="1119.0" y="755.0" font-size="22.32" fill="#f0f0f0" font-weight="400" text-anchor="middle" textLength="33.5" lengthAdjust="spacingAndGlyphs">Blue</text><text x="1196.0" y="755.0" font-size="22.32" fill="#f0f0f0" font-weight="400" text-anchor="middle" textLength="37.0" lengthAdjust="spacingAndGlyphs">Cyan</text><text x="1276.0" y="755.0" font-size="22.32" fill="#f0f0f0" font-weight="400" text-anchor="middle" textLength="63.0" lengthAdjust="spacingAndGlyphs">Magenta</text><text x="1355.0" y="755.0" font-size="22.32" fill="#f0f0f0" font-weight="400" text-anchor="middle" textLength="48.0" lengthAdjust="spacingAndGlyphs">Yellow</text><text x="1438.0" y="755.0" font-size="22.32" fill="#f0f0f0" font-weight="400" text-anchor="middle" textLength="43.0" lengthAdjust="spacingAndGlyphs">100W</text><text x="759.4" y="795.8" font-size="23.48" fill="#f4f4f4" font-weight="700" text-anchor="start" textLength="67.0" lengthAdjust="spacingAndGlyphs">x: CIE31</text><text x="848.6" y="795.8" font-size="23.77" fill="#f0f0f0" font-weight="400" text-anchor="start" textLength="52.8" lengthAdjust="spacingAndGlyphs">0,3134</text><text x="931.4" y="795.8" font-size="23.77" fill="#f0f0f0" font-weight="400" text-anchor="start" textLength="52.8" lengthAdjust="spacingAndGlyphs">0,6514</text><text x="1004.5" y="795.8" font-size="23.77" fill="#f0f0f0" font-weight="400" text-anchor="start" textLength="52.8" lengthAdjust="spacingAndGlyphs">0,2989</text><text x="1087.3" y="795.8" font-size="23.77" fill="#f0f0f0" font-weight="400" text-anchor="start" textLength="52.8" lengthAdjust="spacingAndGlyphs">0,1463</text><text x="1160.0" y="795.8" font-size="23.77" fill="#f0f0f0" font-weight="400" text-anchor="start" textLength="52.8" lengthAdjust="spacingAndGlyphs">0,2212</text><text x="1243.0" y="795.8" font-size="23.77" fill="#f0f0f0" font-weight="400" text-anchor="start" textLength="52.8" lengthAdjust="spacingAndGlyphs">0,3227</text><text x="1319.0" y="795.8" font-size="23.77" fill="#f0f0f0" font-weight="400" text-anchor="start" textLength="52.8" lengthAdjust="spacingAndGlyphs">0,4231</text><text x="1401.5" y="795.8" font-size="23.77" fill="#f0f0f0" font-weight="400" text-anchor="start" textLength="52.8" lengthAdjust="spacingAndGlyphs">0,3130</text><text x="759.4" y="833.9" font-size="23.48" fill="#f4f4f4" font-weight="700" text-anchor="start" textLength="67.0" lengthAdjust="spacingAndGlyphs">y: CIE31</text><text x="848.6" y="833.9" font-size="23.77" fill="#f0f0f0" font-weight="400" text-anchor="start" textLength="52.8" lengthAdjust="spacingAndGlyphs">0,3272</text><text x="931.4" y="833.9" font-size="23.77" fill="#f0f0f0" font-weight="400" text-anchor="start" textLength="52.8" lengthAdjust="spacingAndGlyphs">0,3311</text><text x="1004.5" y="833.9" font-size="23.77" fill="#f0f0f0" font-weight="400" text-anchor="start" textLength="52.8" lengthAdjust="spacingAndGlyphs">0,6046</text><text x="1087.3" y="833.9" font-size="23.77" fill="#f0f0f0" font-weight="400" text-anchor="start" textLength="52.8" lengthAdjust="spacingAndGlyphs">0,0575</text><text x="1160.0" y="833.9" font-size="23.77" fill="#f0f0f0" font-weight="400" text-anchor="start" textLength="52.8" lengthAdjust="spacingAndGlyphs">0,3259</text><text x="1243.0" y="833.9" font-size="23.77" fill="#f0f0f0" font-weight="400" text-anchor="start" textLength="52.8" lengthAdjust="spacingAndGlyphs">0,1532</text><text x="1319.0" y="833.9" font-size="23.77" fill="#f0f0f0" font-weight="400" text-anchor="start" textLength="52.8" lengthAdjust="spacingAndGlyphs">0,5046</text><text x="1401.5" y="833.9" font-size="23.77" fill="#f0f0f0" font-weight="400" text-anchor="start" textLength="52.8" lengthAdjust="spacingAndGlyphs">0,3269</text><text x="759.4" y="872.7" font-size="23.48" fill="#f4f4f4" font-weight="700" text-anchor="start" textLength="10.4" lengthAdjust="spacingAndGlyphs">Y</text><text x="848.6" y="872.7" font-size="23.77" fill="#f0f0f0" font-weight="400" text-anchor="start" textLength="72.0" lengthAdjust="spacingAndGlyphs">311,3343</text><text x="931.4" y="872.7" font-size="23.77" fill="#f0f0f0" font-weight="400" text-anchor="start" textLength="62.4" lengthAdjust="spacingAndGlyphs">67,1700</text><text x="1004.5" y="872.7" font-size="23.77" fill="#f0f0f0" font-weight="400" text-anchor="start" textLength="72.0" lengthAdjust="spacingAndGlyphs">220,5944</text><text x="1087.3" y="872.7" font-size="23.77" fill="#f0f0f0" font-weight="400" text-anchor="start" textLength="62.4" lengthAdjust="spacingAndGlyphs">21,4944</text><text x="1160.0" y="872.7" font-size="23.77" fill="#f0f0f0" font-weight="400" text-anchor="start" textLength="72.0" lengthAdjust="spacingAndGlyphs">241,7894</text><text x="1243.0" y="872.7" font-size="23.77" fill="#f0f0f0" font-weight="400" text-anchor="start" textLength="62.4" lengthAdjust="spacingAndGlyphs">88,8762</text><text x="1319.0" y="872.7" font-size="23.77" fill="#f0f0f0" font-weight="400" text-anchor="start" textLength="72.0" lengthAdjust="spacingAndGlyphs">289,9593</text><text x="1401.5" y="872.7" font-size="23.77" fill="#f0f0f0" font-weight="400" text-anchor="start" textLength="72.0" lengthAdjust="spacingAndGlyphs">594,9753</text><text x="759.4" y="911.1" font-size="23.48" fill="#f4f4f4" font-weight="700" text-anchor="start" textLength="70.4" lengthAdjust="spacingAndGlyphs">Target Y</text><text x="848.6" y="911.1" font-size="23.77" fill="#f0f0f0" font-weight="400" text-anchor="start" textLength="72.0" lengthAdjust="spacingAndGlyphs">309,9795</text><text x="931.4" y="911.1" font-size="23.77" fill="#f0f0f0" font-weight="400" text-anchor="start" textLength="62.4" lengthAdjust="spacingAndGlyphs">65,9190</text><text x="1004.5" y="911.1" font-size="23.77" fill="#f0f0f0" font-weight="400" text-anchor="start" textLength="72.0" lengthAdjust="spacingAndGlyphs">221,6845</text><text x="1087.3" y="911.1" font-size="23.77" fill="#f0f0f0" font-weight="400" text-anchor="start" textLength="62.4" lengthAdjust="spacingAndGlyphs">22,3761</text><text x="1160.0" y="911.1" font-size="23.77" fill="#f0f0f0" font-weight="400" text-anchor="start" textLength="72.0" lengthAdjust="spacingAndGlyphs">244,0605</text><text x="1243.0" y="911.1" font-size="23.77" fill="#f0f0f0" font-weight="400" text-anchor="start" textLength="62.4" lengthAdjust="spacingAndGlyphs">88,2950</text><text x="1319.0" y="911.1" font-size="23.77" fill="#f0f0f0" font-weight="400" text-anchor="start" textLength="72.0" lengthAdjust="spacingAndGlyphs">287,6034</text><text x="1401.5" y="911.1" font-size="23.77" fill="#f0f0f0" font-weight="400" text-anchor="start" textLength="72.0" lengthAdjust="spacingAndGlyphs">594,9753</text><text x="759.4" y="949.4" font-size="23.48" fill="#f4f4f4" font-weight="700" text-anchor="start" textLength="69.3" lengthAdjust="spacingAndGlyphs">ΔE 2000</text><text x="848.6" y="949.4" font-size="23.77" fill="#f0f0f0" font-weight="400" text-anchor="start" textLength="52.8" lengthAdjust="spacingAndGlyphs">1,5657</text><text x="931.4" y="949.4" font-size="23.77" fill="#f0f0f0" font-weight="400" text-anchor="start" textLength="52.8" lengthAdjust="spacingAndGlyphs">2,2568</text><text x="1004.5" y="949.4" font-size="23.77" fill="#f0f0f0" font-weight="400" text-anchor="start" textLength="52.8" lengthAdjust="spacingAndGlyphs">0,2809</text><text x="1087.3" y="949.4" font-size="23.77" fill="#f0f0f0" font-weight="400" text-anchor="start" textLength="52.8" lengthAdjust="spacingAndGlyphs">0,5158</text><text x="1160.0" y="949.4" font-size="23.77" fill="#f0f0f0" font-weight="400" text-anchor="start" textLength="52.8" lengthAdjust="spacingAndGlyphs">0,7077</text><text x="1243.0" y="949.4" font-size="23.77" fill="#f0f0f0" font-weight="400" text-anchor="start" textLength="52.8" lengthAdjust="spacingAndGlyphs">0,3667</text><text x="1319.0" y="949.4" font-size="23.77" fill="#f0f0f0" font-weight="400" text-anchor="start" textLength="52.8" lengthAdjust="spacingAndGlyphs">0,8478</text><text x="1401.5" y="949.4" font-size="23.77" fill="#f0f0f0" font-weight="400" text-anchor="start" textLength="52.8" lengthAdjust="spacingAndGlyphs">1,9251</text><path d="M1.6,1040 V973 a3,3 0 0 1 3,-3 H167.8 a3,3 0 0 1 3,3 V1040z" fill="url(#tile)"/><rect x="7.8" y="977.2" width="157.3" height="39" rx="3.5" fill="#c0c0c0" stroke="rgba(0,0,0,0.25)" stroke-width="1"/><text x="86.1" y="1033.8" font-size="11.74" fill="#2a2a2a" font-weight="700" text-anchor="middle">White</text><path d="M173.5,1040 V973 a3,3 0 0 1 3,-3 H339.7 a3,3 0 0 1 3,3 V1040z" fill="url(#tile)"/><rect x="179.7" y="977.2" width="157.3" height="39" rx="3.5" fill="#c00000" stroke="rgba(0,0,0,0.25)" stroke-width="1"/><text x="258.0" y="1033.8" font-size="11.74" fill="#2a2a2a" font-weight="700" text-anchor="middle">Red</text><path d="M345.4,1040 V973 a3,3 0 0 1 3,-3 H511.6 a3,3 0 0 1 3,3 V1040z" fill="url(#tile)"/><rect x="351.6" y="977.2" width="157.3" height="39" rx="3.5" fill="#00c000" stroke="rgba(0,0,0,0.25)" stroke-width="1"/><text x="429.9" y="1033.8" font-size="11.74" fill="#2a2a2a" font-weight="700" text-anchor="middle">Green</text><path d="M517.3,1040 V973 a3,3 0 0 1 3,-3 H683.5 a3,3 0 0 1 3,3 V1040z" fill="url(#tile)"/><rect x="523.5" y="977.2" width="157.3" height="39" rx="3.5" fill="#0000c0" stroke="rgba(0,0,0,0.25)" stroke-width="1"/><text x="601.8" y="1033.8" font-size="11.74" fill="#2a2a2a" font-weight="700" text-anchor="middle">Blue</text><path d="M689.2,1040 V973 a3,3 0 0 1 3,-3 H855.4 a3,3 0 0 1 3,3 V1040z" fill="url(#tile)"/><rect x="695.4" y="977.2" width="157.3" height="39" rx="3.5" fill="#00c0c0" stroke="rgba(0,0,0,0.25)" stroke-width="1"/><text x="773.7" y="1033.8" font-size="11.74" fill="#2a2a2a" font-weight="700" text-anchor="middle">Cyan</text><path d="M861.1,1040 V973 a3,3 0 0 1 3,-3 H1027.3 a3,3 0 0 1 3,3 V1040z" fill="url(#tile)"/><rect x="867.3" y="977.2" width="157.3" height="39" rx="3.5" fill="#c000c0" stroke="rgba(0,0,0,0.25)" stroke-width="1"/><text x="945.6" y="1033.8" font-size="11.74" fill="#2a2a2a" font-weight="700" text-anchor="middle">Magenta</text><path d="M1033.0,1040 V973 a3,3 0 0 1 3,-3 H1199.2 a3,3 0 0 1 3,3 V1040z" fill="url(#tile)"/><rect x="1039.2" y="977.2" width="157.3" height="39" rx="3.5" fill="#c0c000" stroke="rgba(0,0,0,0.25)" stroke-width="1"/><text x="1117.5" y="1033.8" font-size="11.74" fill="#2a2a2a" font-weight="700" text-anchor="middle">Yellow</text><path d="M1204.4,1040 V973 a3,3 0 0 1 3,-3 H1370.7 a3,3 0 0 1 3,3 V1040z" fill="url(#seltile)"/><rect x="1209.8" y="975" width="158.3" height="41.5" rx="4" fill="#fff"/><text x="1289.0" y="1033.8" font-size="11.74" fill="#fff" font-weight="700" text-anchor="middle">100W</text><rect x="1373.7" y="969.8" width="190.5" height="70.2" fill="url(#strip)"/><path d="M1564,990.5 V973 a3.5,3.5 0 0 1 3.5,-3.5 H1615.5 a3.5,3.5 0 0 1 3.5,3.5 V990.5z" fill="url(#cbtn)"/><rect x="1564.0" y="991.5" width="55.0" height="48.5" fill="url(#cbtn)"/><line x1="1564.0" y1="991.0" x2="1619.0" y2="991.0" stroke="#555" stroke-width="1.5"/><circle cx="1591.7" cy="979.5" r="8.5" fill="#8a8a8a"/><path d="M1586.5,982 L1591.7,977 L1596.9,982z" fill="#2a2a2a"/><rect x="1575.4" y="998.5" width="31.7" height="31.7" rx="4" fill="#a0a0a0" stroke="#1a1a1a" stroke-width="2.2"/><rect x="1584.0" y="1007.5" width="15.0" height="15.2" fill="#0a0a0a"/><rect x="1619.8" y="969.8" width="50.3" height="33.3" fill="url(#cbtn)"/><circle cx="1645.6" cy="986.7" r="11" fill="#8c8c8c" stroke="#9e9e9e" stroke-width="1"/><rect x="1671.0" y="969.8" width="50.3" height="33.3" fill="url(#cbtn)"/><circle cx="1696.8" cy="986.7" r="11" fill="#8c8c8c" stroke="#9e9e9e" stroke-width="1"/><rect x="1722.1" y="969.8" width="50.3" height="33.3" fill="url(#cbtn)"/><circle cx="1747.9" cy="986.7" r="11" fill="#8c8c8c" stroke="#9e9e9e" stroke-width="1"/><rect x="1773.2" y="969.8" width="50.3" height="33.3" fill="url(#cbtn)"/><circle cx="1799.0" cy="986.7" r="11" fill="#8c8c8c" stroke="#9e9e9e" stroke-width="1"/><rect x="1824.4" y="969.8" width="50.3" height="33.3" fill="url(#cbtn)"/><circle cx="1850.2" cy="986.7" r="11" fill="#8c8c8c" stroke="#9e9e9e" stroke-width="1"/><line x1="1670.5" y1="969.8" x2="1670.5" y2="1003.0" stroke="#3a3a3a" stroke-width="1.2"/><line x1="1721.6" y1="969.8" x2="1721.6" y2="1003.0" stroke="#3a3a3a" stroke-width="1.2"/><line x1="1772.8" y1="969.8" x2="1772.8" y2="1003.0" stroke="#3a3a3a" stroke-width="1.2"/><line x1="1823.9" y1="969.8" x2="1823.9" y2="1003.0" stroke="#3a3a3a" stroke-width="1.2"/><rect x="1641.8" y="982.5" width="8.5" height="9.0" fill="#2a2a2a"/><path d="M1694.5,981.5 L1703.5,986.7 L1694.5,992z" fill="#2a2a2a"/><path d="M1745,981 h-2 v11 h2 M1752.5,981 h2 v11 h-2" fill="none" stroke="#2a2a2a" stroke-width="1.8"/><circle cx="1747.5" cy="986.5" r="0.9" fill="#2a2a2a"/><circle cx="1750.5" cy="986.5" r="0.9" fill="#2a2a2a"/><path d="M1799.8,986.7 c-2,-3 -6,-3 -6,0 c0,3 4,3 6,0 c2,-3 6,-3 6,0 c0,3 -4,3 -6,0z" fill="none" stroke="#2a2a2a" stroke-width="2"/><path d="M1845.5,985 a5.5,5.5 0 0 1 10,-1.5 M1856,988.5 a5.5,5.5 0 0 1 -10,1.5" fill="none" stroke="#2a2a2a" stroke-width="2.2"/><path d="M1853,981 l4,-1 l0,4.5z M1848.5,992.5 l-4,1 l0,-4.5z" fill="#2a2a2a"/><g transform="translate(1900.2,985.3)" stroke="#e20d0d" stroke-width="6.6" stroke-linecap="round"><line x1="0" y1="-11.6" x2="0" y2="11.6" transform="rotate(0)"/><line x1="0" y1="-11.6" x2="0" y2="11.6" transform="rotate(60)"/><line x1="0" y1="-11.6" x2="0" y2="11.6" transform="rotate(120)"/></g><rect x="1619.8" y="1004.8" width="154.0" height="35.2" fill="url(#cbtn)"/><rect x="1774.5" y="1004.8" width="145.5" height="35.2" fill="url(#cbtn)"/><line x1="1774.0" y1="1004.8" x2="1774.0" y2="1040.0" stroke="#3a3a3a" stroke-width="1.2"/><line x1="1619.8" y1="1004.0" x2="1920.0" y2="1004.0" stroke="#2a2a2a" stroke-width="1.5"/><circle cx="1654" cy="1021.4" r="10.5" fill="#8c8c8c" stroke="#a0a0a0" stroke-width="1"/><path d="M1655,1016.5 l-4.5,5 l4.5,5 M1659.5,1016.5 l-4.5,5 l4.5,5" fill="none" stroke="#2e2e2e" stroke-width="1.6"/><text x="1685.8" y="1030.3" font-size="24.64" fill="#333" font-weight="400" text-anchor="start" textLength="56.0" lengthAdjust="spacingAndGlyphs">Back</text><text x="1806.7" y="1030.3" font-size="24.64" fill="#333" font-weight="400" text-anchor="start" textLength="57.5" lengthAdjust="spacingAndGlyphs">Next</text><circle cx="1895.8" cy="1021.9" r="10.5" fill="#8c8c8c" stroke="#a0a0a0" stroke-width="1"/><path d="M1891.5,1017 l4.5,5 l-4.5,5 M1896,1017 l4.5,5 l-4.5,5" fill="none" stroke="#2e2e2e" stroke-width="1.6"/><line x1="0.0" y1="1039.5" x2="1920.0" y2="1039.5" stroke="#000" stroke-width="1"/><line x1="0.0" y1="1039.5" x2="1920.0" y2="1039.5" stroke="#e8e8e8" stroke-width="1" stroke-dasharray="1.6 1.7"/></svg></body></html>
